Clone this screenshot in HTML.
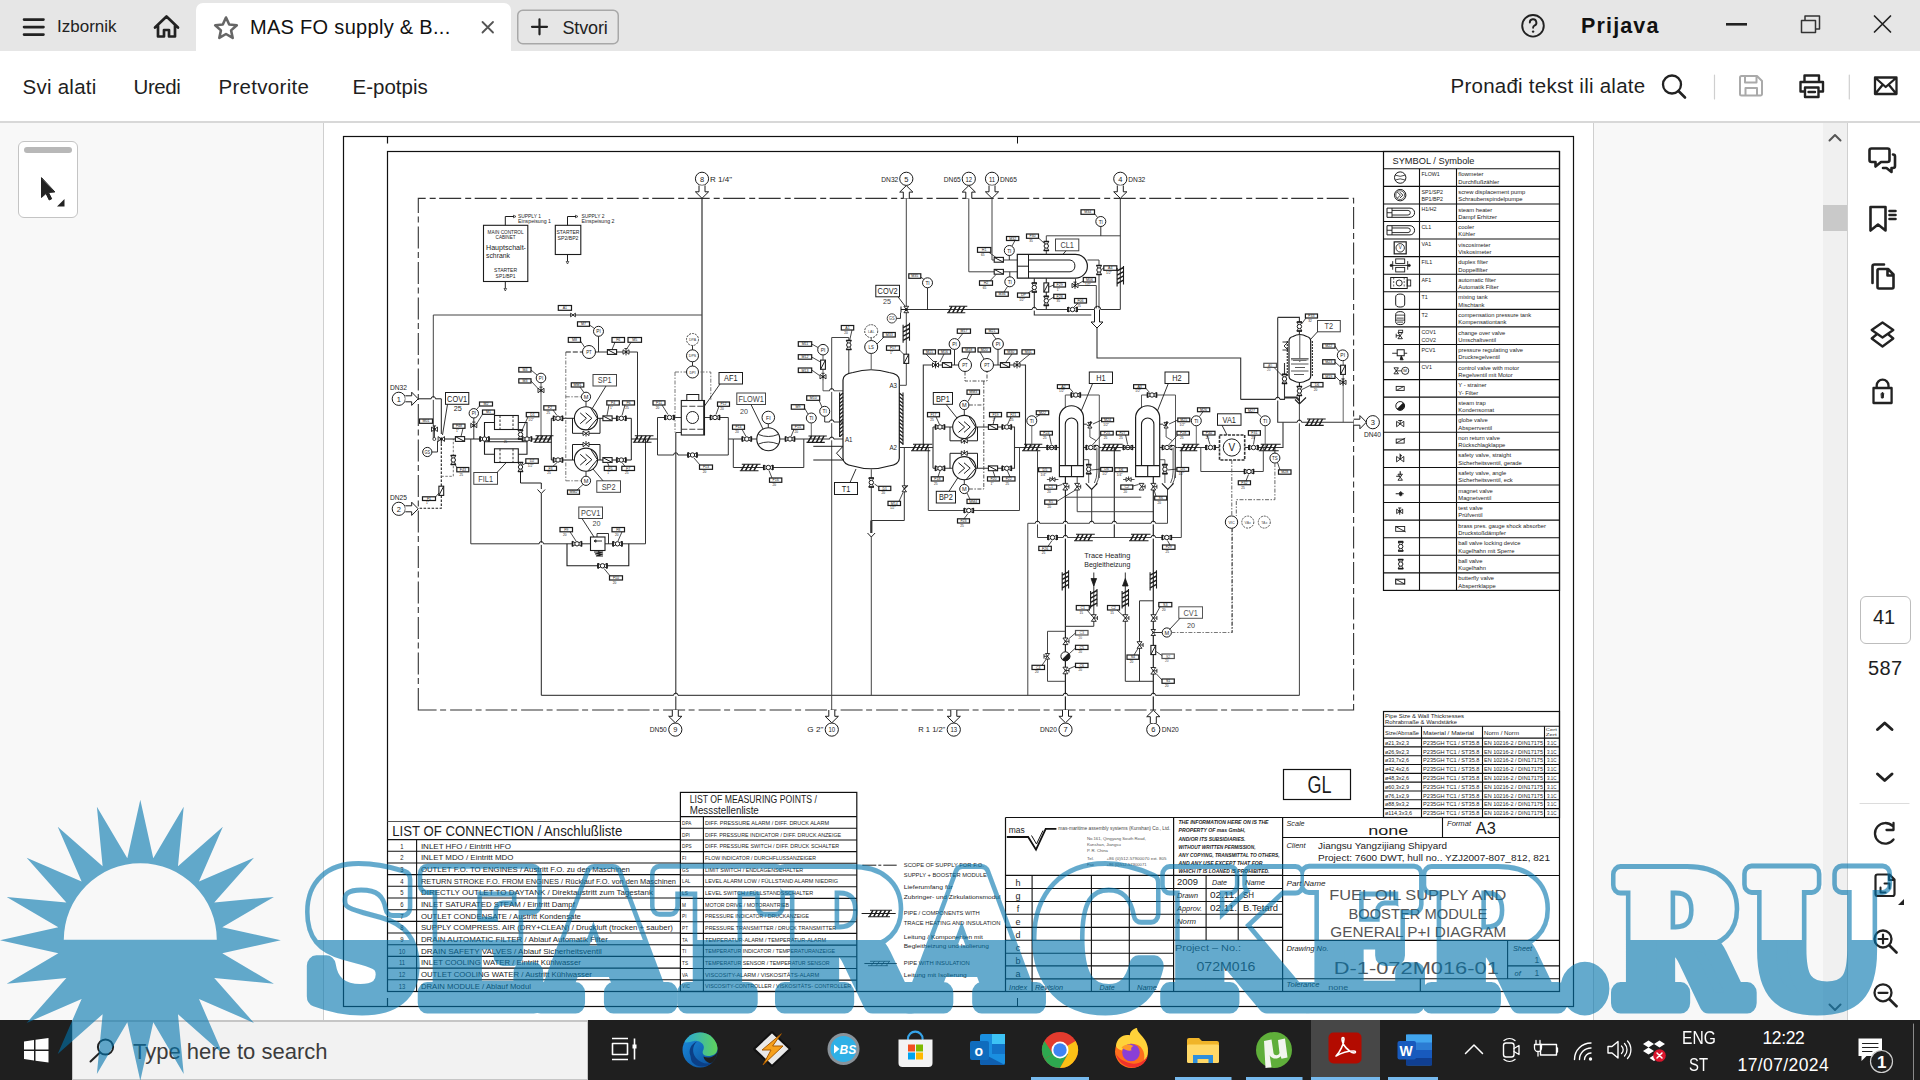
<!DOCTYPE html>
<html lang="hr">
<head>
<meta charset="utf-8">
<title>MAS FO supply &amp; Booster module</title>
<style>
*{box-sizing:border-box;margin:0;padding:0}
html,body{width:1920px;height:1080px;overflow:hidden;background:#fff}
body{position:relative;font-family:"Liberation Sans",sans-serif;color:#222}
.abs{position:absolute}
#titlebar{left:0;top:0;width:1920px;height:51px;background:#e6e6e6}
#tab{left:196px;top:3px;width:315px;height:48px;background:#fff;border-radius:7px 7px 0 0}
#toolbar{left:0;top:51px;width:1920px;height:72px;background:#fff;border-bottom:2px solid #d8d8d8}
#leftpane{left:0;top:123px;width:324px;height:897px;background:#f8f8f8;border-right:1px solid #cfcfcf}
#page{left:324px;top:123px;width:1269px;height:897px;background:#fff}
#gutter{left:1593px;top:123px;width:230px;height:897px;background:#f8f8f8;border-left:1px solid #cfcfcf}
#scroll{left:1823px;top:123px;width:25px;height:897px;background:#f0f0f0;border-right:1px solid #d0d0d0}
#thumb{left:1823px;top:205px;width:24px;height:26px;background:#c9c9c9}
#rtools{left:1849px;top:123px;width:71px;height:897px;background:#fff}
#quick{left:18px;top:141px;width:60px;height:77px;background:#fff;border:1.5px solid #c4c4c4;border-radius:6px}
#quick i{position:absolute;left:5px;top:5px;width:48px;height:6px;border-radius:3px;background:#b8b8b8;display:block}
.t{position:absolute;white-space:nowrap;line-height:1}
#taskbar{left:0;top:1020px;width:1920px;height:60px;background:#1f1f1f}
#search{left:72px;top:1020px;width:516px;height:60px;background:#f2f2f2;border:1px solid #c6c6c6;border-top:2px solid #c6c6c6}
#pagebox{left:1860px;top:596px;width:51px;height:48px;border:1.5px solid #bdbdbd;border-radius:6px;background:#fff}
svg{position:absolute;left:0;top:0;overflow:visible}
svg text{font-family:"Liberation Sans",sans-serif}
</style>
</head>
<body>
<div class="abs" id="titlebar"></div>
<div class="abs" id="tab"></div>
<div class="abs" id="toolbar"></div>
<div class="abs" id="leftpane"></div>
<div class="abs" id="page"></div>
<div class="abs" id="gutter"></div>
<div class="abs" id="scroll"></div>
<div class="abs" id="thumb"></div>
<div class="abs" id="rtools"></div>
<div class="abs" id="quick"><i></i></div>
<div class="abs" id="pagebox"></div>
<div class="abs" id="taskbar"></div>
<div class="abs" id="search"></div>

<!-- chrome text -->
<div class="t" style="left:57px;top:18px;font-size:17px;color:#222">Izbornik</div>
<div class="t" style="left:250px;top:17px;font-size:20px;letter-spacing:.3px;color:#111">MAS FO supply &amp; B...</div>
<div class="t" style="left:562.5px;top:18.5px;font-size:18px;letter-spacing:-.15px;color:#222">Stvori</div>
<div class="t" style="left:1581px;top:16px;font-size:21.5px;font-weight:bold;color:#111;letter-spacing:1.15px">Prijava</div>
<div class="t" style="left:22.5px;top:76.5px;font-size:20.5px;letter-spacing:.25px;color:#1e1e1e">Svi alati</div>
<div class="t" style="left:133.5px;top:76.5px;font-size:20.5px;letter-spacing:-.4px;color:#1e1e1e">Uredi</div>
<div class="t" style="left:218.5px;top:76.5px;font-size:20.5px;letter-spacing:.3px;color:#1e1e1e">Pretvorite</div>
<div class="t" style="left:352.5px;top:76.5px;font-size:20.5px;color:#1e1e1e">E-potpis</div>
<div class="t" style="left:1450.5px;top:75.6px;font-size:20.5px;letter-spacing:.25px;color:#1e1e1e">Pronađi tekst ili alate</div>
<div class="t" style="left:1873px;top:607px;font-size:20px;color:#1e1e1e">41</div>
<div class="t" style="left:1868px;top:658px;font-size:20px;letter-spacing:.4px;color:#1e1e1e">587</div>
<div class="t" style="left:133px;top:1040.5px;font-size:22px;color:#3c3c3c">Type here to search</div>
<div class="t" style="left:1682px;top:1030px;font-size:17.5px;color:#fff;transform:scaleX(.89);transform-origin:0 0">ENG</div>
<div class="t" style="left:1689px;top:1056.5px;font-size:17.5px;color:#fff;transform:scaleX(.85);transform-origin:0 0">ST</div>
<div class="t" style="left:1762.5px;top:1030px;font-size:17.5px;letter-spacing:-.4px;color:#fff">12:22</div>
<div class="t" style="left:1737.5px;top:1056.5px;font-size:17.5px;letter-spacing:.4px;color:#fff">17/07/2024</div>
<svg width="1920" height="1080" viewBox="0 0 1920 1080" fill="none" stroke="#222" stroke-width="2" stroke-linecap="round" stroke-linejoin="round">
<!-- hamburger -->
<path d="M24 19.6H43.500M24 27.100H43.500M24 34.600H43.500" stroke-width="2.6"/>
<!-- home -->
<path d="M155 27.5L166.5 16.5L178 27.5M158 25.5V36.5H164V30H169V36.5H175V25.5" stroke-width="2.7"/>
<!-- star -->
<path d="M226 17.5l3.2 7 7.6 .8-5.7 5.1 1.6 7.5-6.7-3.9-6.7 3.9 1.6-7.5-5.7-5.1 7.6-.8z" stroke="#666" stroke-width="2.6"/>
<!-- tab close -->
<path d="M482.5 22L493 32.5M493 22L482.5 32.5" stroke="#555" stroke-width="1.8"/>
<!-- Stvori button -->
<rect x="517.75" y="10.25" width="100.5" height="33.5" rx="5" stroke="#a8a8a8" stroke-width="1.5"/>
<path d="M532 26.8H547M539.5 19.3V34.3" stroke-width="2.2"/>
<!-- help -->
<circle cx="1533" cy="25.8" r="10.8" stroke-width="1.9"/>
<path d="M1529.8 22.6a3.3 3.3 0 1 1 4.6 3c-1 .5-1.3 1-1.3 2.2" stroke-width="1.9"/>
<circle cx="1533.1" cy="31.6" r="1.2" fill="#222" stroke="none"/>
<!-- window controls -->
<path d="M1726 24.3H1747" stroke-width="2.6" stroke-linecap="butt"/>
<path d="M1801.5 20.5H1815.5V32.5H1801.5zM1805 20V16H1819.5V29H1816" stroke-width="1.5" stroke="#333"/>
<path d="M1874.5 16L1890.5 32M1890.5 16L1874.5 32" stroke-width="1.7"/>
<!-- search icon -->
<circle cx="1672" cy="84.5" r="9" stroke-width="2.3"/>
<path d="M1678.5 91L1685 97.5" stroke-width="2.6"/>
<!-- separators -->
<path d="M1714.5 75V99M1849.3 75V99" stroke="#cfcfcf" stroke-width="1.2"/>
<!-- save (disabled) -->
<path d="M1740 77.5a1.5 1.5 0 0 1 1.5-1.5H1757l5 5V94a1.5 1.5 0 0 1-1.5 1.500H1741.500a1.500 1.500 0 0 1-1.500-1.500zM1745 76V82.500H1756.500V76M1745.500 95.500V88H1757V95.500" stroke="#aaa" stroke-width="2"/>
<!-- print -->
<path d="M1804.500 82V75.500H1819V82M1804.500 91.500H1800.500V82H1823V91.500H1819M1805 87.500H1818.500V97H1805zM1808.500 92H1815" stroke-width="2.4"/>
<!-- mail -->
<path d="M1875 77.500H1896.500V94H1875zM1875.500 78L1885.700 87L1896 78M1875.500 93.500L1882.500 85M1896 93.500L1889 85" stroke-width="2.3"/>
<!-- quick tool cursor -->
<path d="M41.500 178L41.500 197.500L46 193.500L49.200 200L51.700 198.800L48.500 192.500L54.500 192z" fill="#222" stroke="#222" stroke-width="1"/>
<path d="M64.500 199V206.500H57z" fill="#222" stroke="none"/>
<!-- scroll arrows -->
<path d="M1829.500 140.500L1835 135L1840.500 140.500" stroke="#555" stroke-width="2"/>
<path d="M1829.500 1004.500L1835 1010L1840.500 1004.500" stroke="#555" stroke-width="2"/>
<!-- right tools: comments -->
<path d="M1871.500 148.500H1887.500a2 2 0 0 1 2 2V160a2 2 0 0 1-2 2H1881l-5.500 4.500V162H1871.500a2 2 0 0 1-2-2V150.500a2 2 0 0 1 2-2z" stroke-width="2.6"/>
<path d="M1893 154.500a2 2 0 0 1 2 2V166a2 2 0 0 1-2 2h-1.500v4l-5-4h-3.500" stroke-width="2.6"/>
<!-- bookmark -->
<path d="M1870.500 207H1885.500V230.500L1878 224.500L1870.500 230.500zM1889.500 211H1895.500M1889.500 215H1895.500M1889.500 219H1895.500" stroke-width="2.6"/>
<!-- pages -->
<path d="M1879 269H1888l5.500 5.500V287a1.500 1.500 0 0 1-1.500 1.500H1879a1.500 1.500 0 0 1-1.500-1.500V270.500a1.500 1.500 0 0 1 1.500-1.500zM1887.500 269.500V275.500H1893M1884 264.500H1874.500a2 2 0 0 0-2 2V283" stroke-width="2.6"/>
<!-- layers -->
<path d="M1882.500 322.500L1893.300 330L1882.500 337.500L1871.700 330zM1876.500 334.500L1871.700 338.500L1882.500 346.500L1893.300 338.500L1888.500 334.500" stroke-width="2.300"/>
<!-- lock -->
<path d="M1873.500 388H1891.600V403H1873.500zM1876.700 387.500V385.600a5.900 5.900 0 0 1 11.800 0V387.500" stroke-width="2.300"/>
<path d="M1881.300 393.500l1.200-1.300 1.200 1.300-.5 4.500h-1.400z" fill="#222" stroke-width="1"/>
<!-- chevrons -->
<path d="M1877.500 729.500L1884.700 723L1892 729.500" stroke-width="3"/>
<path d="M1877.500 774L1884.700 780.500L1892 774" stroke-width="3"/>
<path d="M1860 803.500H1909" stroke="#dcdcdc" stroke-width="1.200"/>
<!-- rotate -->
<path d="M1893.500 839.500a10.300 10.300 0 1 1-1-13.500M1893.500 823V830H1886.500" stroke-width="2.300"/>
<!-- page fit -->
<path d="M1877.500 874.500H1889.500l5 5V894a2 2 0 0 1-2 2H1877.500a2 2 0 0 1-2-2V876.500a2 2 0 0 1 2-2zM1889 874.500V880H1894.500" stroke-width="2.200"/>
<path d="M1884.500 883.500H1889.500V888.500M1885.500 892.500H1880.500V887.500" stroke-width="2"/>
<path d="M1904 899V905H1898z" fill="#222" stroke="none"/>
<!-- zoom in/out -->
<circle cx="1883" cy="939" r="8.500" stroke-width="2.300"/>
<path d="M1889.500 945.500L1896.500 952.500" stroke-width="2.700"/>
<path d="M1878.500 939H1887.500M1883 934.500V943.500" stroke-width="2.200"/>
<circle cx="1883" cy="992.800" r="8.500" stroke-width="2.300"/>
<path d="M1889.500 999.300L1896.500 1006.300" stroke-width="2.700"/>
<path d="M1878.500 992.800H1887.500" stroke-width="2.200"/>
</svg>
<svg width="1920" height="1080" viewBox="0 0 1920 1080" fill="none" stroke-linecap="round" stroke-linejoin="round">
<!-- windows logo -->
<path d="M24 1041.500L34 1040V1049.500H24zM35.500 1039.800L48.500 1038V1049.500H35.500zM24 1051H34V1060.500L24 1059zM35.500 1051H48.500V1062.500L35.500 1060.700z" fill="#fff"/>
<!-- search magnifier -->
<circle cx="105.500" cy="1047" r="7.600" stroke="#222" stroke-width="2"/>
<path d="M100 1052.500L90.500 1061.500" stroke="#222" stroke-width="2"/>
<!-- task view -->
<path d="M612 1038.500H628M612 1059.500H628M612.500 1043.500H627.500V1054.500H612.500zM634.500 1038.500V1059.500" stroke="#fff" stroke-width="1.600" stroke-linecap="butt"/>
<rect x="632.500" y="1044.500" width="4" height="4" fill="#fff"/>
<!-- edge -->
<defs><linearGradient id="eg1" x1="0" y1="0" x2="1" y2="0"><stop offset="0" stop-color="#2aa7d8"/><stop offset="1" stop-color="#5fd35a"/></linearGradient>
<linearGradient id="eg2" x1="0" y1="0" x2="1" y2="1"><stop offset="0" stop-color="#1b8fe0"/><stop offset="1" stop-color="#0b4a96"/></linearGradient></defs>
<circle cx="700" cy="1050" r="17.500" fill="url(#eg2)"/>
<path d="M684.500 1042A17.500 17.500 0 0 1 717.500 1048C717.500 1054 713 1056 708 1056C703 1056 701.500 1053 703.500 1049.500C705.500 1045 700 1040 694 1041C690 1041.500 687 1043.500 684.500 1042z" fill="url(#eg1)"/>
<path d="M703.500 1056.500C708 1059 715 1057 717.300 1052C717 1057 714.500 1061 711 1063.500C707 1062.500 704 1060 703.500 1056.500z" fill="#1f1f1f"/>
<path d="M690.500 1056C688 1050 691 1044 697 1041.500C692 1046 692 1053 696 1058C700 1063 707 1065 712.500 1062.500C707 1068 697 1068 692 1062C691 1060 690.800 1058 690.500 1056z" fill="#0b3f86"/>
<!-- winamp -->
<path d="M772 1032L790 1049L772 1066L754 1049z" fill="#e9e9e9" stroke="#111" stroke-width="2"/>
<path d="M781 1034L762 1050H771L763 1065L783 1046H773z" fill="#f6a11c" stroke="#a85a00" stroke-width="1"/>
<!-- BS player -->
<circle cx="843.500" cy="1049" r="16" fill="#8a9299"/>
<circle cx="843.500" cy="1049" r="13" fill="#2fb0e6"/>
<path d="M834 1044.500L839.500 1049L834 1053.500z" fill="#fff"/>
<text x="839.500" y="1054" font-size="12" font-weight="bold" font-style="italic" fill="#fff">BS</text>
<!-- store -->
<path d="M908 1039a7.300 7.300 0 0 1 14.600 0" stroke="#35a3e8" stroke-width="2.200"/>
<path d="M898.500 1039.500H932.500V1063a4 4 0 0 1-4 4H902.500a4 4 0 0 1-4-4z" fill="#f3f3f3"/>
<rect x="908" y="1044.500" width="7" height="7" fill="#f25022"/><rect x="916" y="1044.500" width="7" height="7" fill="#7fba00"/>
<rect x="908" y="1052.500" width="7" height="7" fill="#00a4ef"/><rect x="916" y="1052.500" width="7" height="7" fill="#ffb900"/>
<!-- outlook -->
<rect x="980" y="1034" width="25" height="31" rx="2" fill="#1a8fe0"/>
<rect x="992" y="1034" width="13" height="10" fill="#3dc3f5"/><rect x="992" y="1044" width="13" height="10" fill="#1373c8"/>
<path d="M980 1052L1005 1065H982a2 2 0 0 1-2-2z" fill="#0f5fb0"/>
<rect x="970" y="1041" width="19" height="19" rx="2" fill="#0f6cbd"/>
<text x="974.500" y="1055.500" font-size="14" font-weight="bold" fill="#fff">o</text>
<!-- chrome -->
<circle cx="1060" cy="1050" r="18" fill="#e33b2e"/>
<path d="M1060 1050L1044.400 1059A18 18 0 0 0 1060 1068L1069 1052z" fill="#2da94f"/>
<path d="M1044.400 1059A18 18 0 0 1 1044.400 1041L1053 1054z" fill="#2da94f"/>
<path d="M1060 1050L1075.600 1041A18 18 0 0 1 1060 1068L1068 1054z" fill="#fbc116"/>
<circle cx="1060" cy="1050" r="8.500" fill="#fff"/><circle cx="1060" cy="1050" r="6.700" fill="#3f84f3"/>
<!-- firefox -->
<circle cx="1131.500" cy="1051.500" r="16.500" fill="#ff6f1c"/>
<path d="M1116 1046C1116.500 1038 1124 1033.500 1130 1035.500C1129.500 1032 1133 1028.500 1137 1028C1137 1033 1144 1036 1146.500 1043C1149.500 1050 1147.500 1059 1143 1063.500C1146.500 1055 1143 1046.500 1136.500 1044.500C1130 1042.500 1124 1045 1122 1050.500C1119 1049.500 1116.500 1048 1116 1046z" fill="#ffd23a"/>
<circle cx="1131" cy="1052.500" r="8.800" fill="#8a3fd6"/>
<path d="M1121.500 1047.500C1124.500 1044 1130 1043.500 1133.500 1046C1131.500 1046.500 1130.500 1048.500 1131.500 1050.500C1128 1051 1124.500 1050 1121.500 1047.500z" fill="#ff9a2a"/>
<path d="M1116 1054C1118 1062 1125 1067.500 1133 1067.500C1141 1067.500 1146.500 1062 1148 1055C1145 1061 1139 1064.500 1132 1063.500C1125 1062.500 1119 1059 1116 1054z" fill="#f0322b"/>
<!-- explorer -->
<path d="M1187 1040a2 2 0 0 1 2-2H1199l3 3H1217a2 2 0 0 1 2 2V1062H1187z" fill="#f0b429"/>
<rect x="1187" y="1044.500" width="32" height="18.500" rx="1.500" fill="#ffd867"/>
<path d="M1193 1055H1213V1063H1208.500V1059H1197.500V1063H1193z" fill="#2d8fdd"/>
<!-- utorrent -->
<circle cx="1274" cy="1050" r="18" fill="#5fae3a"/>
<path d="M1264 1041l7.500-1.500 2 13.500c.6 3 5 3 6 0l-1.500-13 7-1.500 2.500 19-6 1.200-.8-2.500c-3 3.500-9 3-11-1l1.800 12-6 .8z" fill="#f2f5ee"/>
<!-- acrobat (active) -->
<rect x="1311" y="1020" width="69" height="60" fill="#474747"/>
<rect x="1328.500" y="1032.500" width="33" height="31" rx="5" fill="#b30b00"/>
<path d="M1336 1056c4-4 8-12 8-17 0-2-2-2-2 0 0 6 7 13 12 14 2 0 2-2 0-2-5 0-13 2-18 5z" stroke="#fff" stroke-width="1.600"/>
<!-- word -->
<rect x="1406" y="1034.500" width="26" height="31" rx="2" fill="#2b7cd3"/>
<rect x="1406" y="1034.500" width="26" height="8" fill="#41a5ee"/><rect x="1406" y="1050" width="26" height="8" fill="#185abd"/><rect x="1406" y="1058" width="26" height="7.500" fill="#103f91"/>
<rect x="1397.500" y="1041" width="18.500" height="18.500" rx="2" fill="#185abd"/>
<text x="1399.500" y="1055.500" font-size="14" font-weight="bold" fill="#fff">W</text>
<!-- running indicators -->
<path d="M1031 1078.500H1089M1175 1078.500H1231.500M1246 1078.500H1302.500M1311 1078.500H1380M1388 1078.500H1438" stroke="#76b9ed" stroke-width="3" stroke-linecap="butt"/>
<!-- tray -->
<path d="M1465.500 1053.500L1474 1045L1482.500 1053.500" stroke="#fff" stroke-width="1.500"/>
<rect x="1503.500" y="1043" width="10.500" height="14" rx="2.500" stroke="#fff" stroke-width="1.400"/>
<path d="M1514 1048.500L1519 1045.500V1054.500L1514 1051.500M1504 1040.500a9 9 0 0 1 11 0M1504 1059.500a9 9 0 0 0 11 0" stroke="#fff" stroke-width="1.300"/>
<rect x="1540.500" y="1044.500" width="16" height="10.500" stroke="#fff" stroke-width="1.400"/>
<path d="M1557.500 1048V1052M1536 1040.500V1044M1540 1040.500V1044M1534.500 1044.500H1541.500V1048a3.500 3.500 0 0 1-7 0zM1538 1051.500V1056" stroke="#fff" stroke-width="1.300"/>
<path d="M1574.500 1059.500a16.500 16.500 0 0 1 16.500-16.500M1579.500 1059.500a11.500 11.500 0 0 1 11.500-11.500M1584.500 1059.500a6.500 6.500 0 0 1 6.500-6.500" stroke="#fff" stroke-width="1.400"/>
<circle cx="1590.500" cy="1059" r="1.700" fill="#fff"/>
<path d="M1608 1046.500H1612L1618 1041.500V1058L1612 1053H1608z" stroke="#fff" stroke-width="1.400"/>
<path d="M1621.500 1046a5 5 0 0 1 0 7.500M1624.500 1043.500a9 9 0 0 1 0 12.500M1627.500 1041a13 13 0 0 1 0 17.500" stroke="#fff" stroke-width="1.300"/>
<path d="M1648.500 1040.500l5.500 3.500-5.500 3.500-5.500-3.500zM1659.500 1040.500l5.500 3.500-5.500 3.500-5.500-3.500zM1648.500 1047.500l5.500 3.500-5.500 3.500-5.500-3.500zM1654 1055l4.500 3-4.500 3-4.500-3z" fill="#fff"/>
<circle cx="1659.500" cy="1055.500" r="6.300" fill="#d9152c"/>
<path d="M1657 1053L1662 1058M1662 1053L1657 1058" stroke="#fff" stroke-width="1.500"/>
<!-- notifications -->
<path d="M1858.500 1038.500H1882V1056H1866.500L1861.500 1061V1056H1858.500z" fill="#fff"/>
<path d="M1862.500 1043.500H1878M1862.500 1047.500H1878M1862.500 1051.500H1872" stroke="#1f1f1f" stroke-width="1.200"/>
<circle cx="1881.500" cy="1061.500" r="11" fill="#1f1f1f" stroke="#cfcfcf" stroke-width="1.200"/>
<text x="1877" y="1068" font-size="17" font-weight="bold" fill="#fff">1</text>
<path d="M1913.500 1024V1080" stroke="#8a8a8a" stroke-width="1"/>
</svg>
<svg width="1920" height="1080" viewBox="0 0 1920 1080" fill="none" stroke-linecap="butt" stroke-linejoin="miter">
<defs><clipPath id="pg"><rect x="324" y="123" width="1269" height="897"/></clipPath></defs>
<g clip-path="url(#pg)">
<rect x="343.5" y="136.5" width="1230" height="870" stroke="#111" stroke-width="1.2" fill="none"/>
<rect x="387.5" y="151.5" width="1172" height="840" stroke="#111" stroke-width="1.2" fill="none"/>
<path d="M387.5 136.5L387.5 143.5" stroke="#111" stroke-width="1.2"/>
<path d="M1017.5 136.5L1017.5 143.5" stroke="#111" stroke-width="1"/>
<path d="M387.5 998L387.5 1006.5" stroke="#111" stroke-width="1.2"/>
<path d="M1017.5 998L1017.5 1006.5" stroke="#111" stroke-width="1"/>
<rect x="1383.5" y="151.5" width="176" height="438.91" stroke="#111" stroke-width="1.2" fill="none"/>
<text x="1392.5" y="164.2" font-size="9.4" fill="#1c1c1c" stroke="none" textLength="82" lengthAdjust="spacingAndGlyphs">SYMBOL / Symbole</text>
<path d="M1383.5 168.8L1559.5 168.8" stroke="#111" stroke-width="1.1"/>
<text font-size="5.6" fill="#1c1c1c" stroke="none" transform="translate(1421.5 176.2) scale(0.95 1)">FLOW1</text>
<text font-size="5.8" fill="#1c1c1c" stroke="none" transform="translate(1458.3 176.4) scale(1 1)">flowmeter</text>
<text font-size="5.8" fill="#1c1c1c" stroke="none" transform="translate(1458.3 183.7) scale(1 1)">Durchflußzähler</text>
<path d="M1383.5 186.37L1559.5 186.37" stroke="#111" stroke-width="1.1"/>
<text font-size="5.6" fill="#1c1c1c" stroke="none" transform="translate(1421.5 193.77) scale(0.95 1)">SP1/SP2</text>
<text font-size="5.6" fill="#1c1c1c" stroke="none" transform="translate(1421.5 200.97) scale(0.95 1)">BP1/BP2</text>
<text font-size="5.8" fill="#1c1c1c" stroke="none" transform="translate(1458.3 193.97) scale(1 1)">screw displacement pump</text>
<text font-size="5.8" fill="#1c1c1c" stroke="none" transform="translate(1458.3 201.27) scale(1 1)">Schraubenspindelpumpe</text>
<path d="M1383.5 203.93L1559.5 203.93" stroke="#111" stroke-width="1.1"/>
<text font-size="5.6" fill="#1c1c1c" stroke="none" transform="translate(1421.5 211.33) scale(0.95 1)">H1/H2</text>
<text font-size="5.8" fill="#1c1c1c" stroke="none" transform="translate(1458.3 211.53) scale(1 1)">steam heater</text>
<text font-size="5.8" fill="#1c1c1c" stroke="none" transform="translate(1458.3 218.83) scale(1 1)">Dampf Erhitzer</text>
<path d="M1383.5 221.5L1559.5 221.5" stroke="#111" stroke-width="1.1"/>
<text font-size="5.6" fill="#1c1c1c" stroke="none" transform="translate(1421.5 228.9) scale(0.95 1)">CL1</text>
<text font-size="5.8" fill="#1c1c1c" stroke="none" transform="translate(1458.3 229.1) scale(1 1)">cooler</text>
<text font-size="5.8" fill="#1c1c1c" stroke="none" transform="translate(1458.3 236.4) scale(1 1)">Kühler</text>
<path d="M1383.5 239.07L1559.5 239.07" stroke="#111" stroke-width="1.1"/>
<text font-size="5.6" fill="#1c1c1c" stroke="none" transform="translate(1421.5 246.47) scale(0.95 1)">VA1</text>
<text font-size="5.8" fill="#1c1c1c" stroke="none" transform="translate(1458.3 246.67) scale(1 1)">viscosimeter</text>
<text font-size="5.8" fill="#1c1c1c" stroke="none" transform="translate(1458.3 253.97) scale(1 1)">Viskosimeter</text>
<path d="M1383.5 256.63L1559.5 256.63" stroke="#111" stroke-width="1.1"/>
<text font-size="5.6" fill="#1c1c1c" stroke="none" transform="translate(1421.5 264.03) scale(0.95 1)">FIL1</text>
<text font-size="5.8" fill="#1c1c1c" stroke="none" transform="translate(1458.3 264.24) scale(1 1)">duplex filter</text>
<text font-size="5.8" fill="#1c1c1c" stroke="none" transform="translate(1458.3 271.53) scale(1 1)">Doppelfilter</text>
<path d="M1383.5 274.2L1559.5 274.2" stroke="#111" stroke-width="1.1"/>
<text font-size="5.6" fill="#1c1c1c" stroke="none" transform="translate(1421.5 281.6) scale(0.95 1)">AF1</text>
<text font-size="5.8" fill="#1c1c1c" stroke="none" transform="translate(1458.3 281.8) scale(1 1)">automatic filter</text>
<text font-size="5.8" fill="#1c1c1c" stroke="none" transform="translate(1458.3 289.1) scale(1 1)">Automatik Filter</text>
<path d="M1383.5 291.77L1559.5 291.77" stroke="#111" stroke-width="1.1"/>
<text font-size="5.6" fill="#1c1c1c" stroke="none" transform="translate(1421.5 299.17) scale(0.95 1)">T1</text>
<text font-size="5.8" fill="#1c1c1c" stroke="none" transform="translate(1458.3 299.37) scale(1 1)">mixing tank</text>
<text font-size="5.8" fill="#1c1c1c" stroke="none" transform="translate(1458.3 306.67) scale(1 1)">Mischtank</text>
<path d="M1383.5 309.34L1559.5 309.34" stroke="#111" stroke-width="1.1"/>
<text font-size="5.6" fill="#1c1c1c" stroke="none" transform="translate(1421.5 316.74) scale(0.95 1)">T2</text>
<text font-size="5.8" fill="#1c1c1c" stroke="none" transform="translate(1458.3 316.94) scale(1 1)">compensation pressure tank</text>
<text font-size="5.8" fill="#1c1c1c" stroke="none" transform="translate(1458.3 324.24) scale(1 1)">Kompensationtank</text>
<path d="M1383.5 326.9L1559.5 326.9" stroke="#111" stroke-width="1.1"/>
<text font-size="5.6" fill="#1c1c1c" stroke="none" transform="translate(1421.5 334.3) scale(0.95 1)">COV1</text>
<text font-size="5.6" fill="#1c1c1c" stroke="none" transform="translate(1421.5 341.5) scale(0.95 1)">COV2</text>
<text font-size="5.8" fill="#1c1c1c" stroke="none" transform="translate(1458.3 334.5) scale(1 1)">change over valve</text>
<text font-size="5.8" fill="#1c1c1c" stroke="none" transform="translate(1458.3 341.8) scale(1 1)">Umschaltventil</text>
<path d="M1383.5 344.47L1559.5 344.47" stroke="#111" stroke-width="1.1"/>
<text font-size="5.6" fill="#1c1c1c" stroke="none" transform="translate(1421.5 351.87) scale(0.95 1)">PCV1</text>
<text font-size="5.8" fill="#1c1c1c" stroke="none" transform="translate(1458.3 352.07) scale(1 1)">pressure regulating valve</text>
<text font-size="5.8" fill="#1c1c1c" stroke="none" transform="translate(1458.3 359.37) scale(1 1)">Druckregelventil</text>
<path d="M1383.5 362.04L1559.5 362.04" stroke="#111" stroke-width="1.1"/>
<text font-size="5.6" fill="#1c1c1c" stroke="none" transform="translate(1421.5 369.44) scale(0.95 1)">CV1</text>
<text font-size="5.8" fill="#1c1c1c" stroke="none" transform="translate(1458.3 369.64) scale(1 1)">control valve with motor</text>
<text font-size="5.8" fill="#1c1c1c" stroke="none" transform="translate(1458.3 376.94) scale(1 1)">Regelventil mit Motor</text>
<path d="M1383.5 379.6L1559.5 379.6" stroke="#111" stroke-width="1.1"/>
<text font-size="5.8" fill="#1c1c1c" stroke="none" transform="translate(1458.3 387.2) scale(1 1)">Y - strainer</text>
<text font-size="5.8" fill="#1c1c1c" stroke="none" transform="translate(1458.3 394.5) scale(1 1)">Y- Filter</text>
<path d="M1383.5 397.17L1559.5 397.17" stroke="#111" stroke-width="1.1"/>
<text font-size="5.8" fill="#1c1c1c" stroke="none" transform="translate(1458.3 404.77) scale(1 1)">steam trap</text>
<text font-size="5.8" fill="#1c1c1c" stroke="none" transform="translate(1458.3 412.07) scale(1 1)">Kondensomat</text>
<path d="M1383.5 414.74L1559.5 414.74" stroke="#111" stroke-width="1.1"/>
<text font-size="5.8" fill="#1c1c1c" stroke="none" transform="translate(1458.3 422.34) scale(1 1)">globe valve</text>
<text font-size="5.8" fill="#1c1c1c" stroke="none" transform="translate(1458.3 429.64) scale(1 1)">Absperrventil</text>
<path d="M1383.5 432.31L1559.5 432.31" stroke="#111" stroke-width="1.1"/>
<text font-size="5.8" fill="#1c1c1c" stroke="none" transform="translate(1458.3 439.91) scale(1 1)">non return valve</text>
<text font-size="5.8" fill="#1c1c1c" stroke="none" transform="translate(1458.3 447.2) scale(1 1)">Rückschlagklappe</text>
<path d="M1383.5 449.87L1559.5 449.87" stroke="#111" stroke-width="1.1"/>
<text font-size="5.8" fill="#1c1c1c" stroke="none" transform="translate(1458.3 457.47) scale(1 1)">safety valve, straight</text>
<text font-size="5.8" fill="#1c1c1c" stroke="none" transform="translate(1458.3 464.77) scale(1 1)">Sicherheitsventil, gerade</text>
<path d="M1383.5 467.44L1559.5 467.44" stroke="#111" stroke-width="1.1"/>
<text font-size="5.8" fill="#1c1c1c" stroke="none" transform="translate(1458.3 475.04) scale(1 1)">safety valve, angle</text>
<text font-size="5.8" fill="#1c1c1c" stroke="none" transform="translate(1458.3 482.34) scale(1 1)">Sicherheitsventil, eck</text>
<path d="M1383.5 485.01L1559.5 485.01" stroke="#111" stroke-width="1.1"/>
<text font-size="5.8" fill="#1c1c1c" stroke="none" transform="translate(1458.3 492.61) scale(1 1)">magnet valve</text>
<text font-size="5.8" fill="#1c1c1c" stroke="none" transform="translate(1458.3 499.91) scale(1 1)">Magnetventil</text>
<path d="M1383.5 502.57L1559.5 502.57" stroke="#111" stroke-width="1.1"/>
<text font-size="5.8" fill="#1c1c1c" stroke="none" transform="translate(1458.3 510.17) scale(1 1)">test valve</text>
<text font-size="5.8" fill="#1c1c1c" stroke="none" transform="translate(1458.3 517.47) scale(1 1)">Prüfventil</text>
<path d="M1383.5 520.14L1559.5 520.14" stroke="#111" stroke-width="1.1"/>
<text font-size="5.8" fill="#1c1c1c" stroke="none" transform="translate(1458.3 527.74) scale(1 1)">brass pres. gauge shock absorber</text>
<text font-size="5.8" fill="#1c1c1c" stroke="none" transform="translate(1458.3 535.04) scale(1 1)">Druckstoßdämpfer</text>
<path d="M1383.5 537.71L1559.5 537.71" stroke="#111" stroke-width="1.1"/>
<text font-size="5.8" fill="#1c1c1c" stroke="none" transform="translate(1458.3 545.31) scale(1 1)">ball valve locking device</text>
<text font-size="5.8" fill="#1c1c1c" stroke="none" transform="translate(1458.3 552.61) scale(1 1)">Kugelhahn mit Sperre</text>
<path d="M1383.5 555.27L1559.5 555.27" stroke="#111" stroke-width="1.1"/>
<text font-size="5.8" fill="#1c1c1c" stroke="none" transform="translate(1458.3 562.87) scale(1 1)">ball valve</text>
<text font-size="5.8" fill="#1c1c1c" stroke="none" transform="translate(1458.3 570.17) scale(1 1)">Kugelhahn</text>
<path d="M1383.5 572.84L1559.5 572.84" stroke="#111" stroke-width="1.1"/>
<text font-size="5.8" fill="#1c1c1c" stroke="none" transform="translate(1458.3 580.44) scale(1 1)">butterfly valve</text>
<text font-size="5.8" fill="#1c1c1c" stroke="none" transform="translate(1458.3 587.74) scale(1 1)">Absperrklappe</text>
<path d="M1419.5 168.8L1419.5 590.41" stroke="#111" stroke-width="1.1"/>
<path d="M1456.5 168.8L1456.5 590.41" stroke="#111" stroke-width="1.1"/>
<circle cx="1400.2" cy="177.58" r="5.7" stroke="#1c1c1c" stroke-width="1" fill="#fff"/>
<path d="M1395 175.08q5.2 2.5 10.4 0M1395 180.08q5.2 -2.5 10.400 0" stroke="#1c1c1c" stroke-width="0.8" fill="none"/>
<circle cx="1400.2" cy="195.15" r="5.7" stroke="#1c1c1c" stroke-width="1" fill="#fff"/>
<circle cx="1400.2" cy="195.15" r="4.4" stroke="#1c1c1c" stroke-width="0.7" fill="#fff"/>
<path d="M1397.4 192.15l3 3-3 3M1399.9 192.15l3 3-3 3" stroke="#1c1c1c" stroke-width="0.9" fill="none"/>
<path d="M1387 208.12H1410a4.6 4.6 0 0 1 0 9.2H1387z" stroke="#1c1c1c" stroke-width="1" fill="none"/>
<path d="M1392 208.12V217.32M1387 212.72H1392M1392 210.42H1408a2.300 2.300 0 0 1 0 4.600H1392" stroke="#1c1c1c" stroke-width="0.9" fill="none"/>
<path d="M1387 225.68H1410a4.6 4.6 0 0 1 0 9.2H1387z" stroke="#1c1c1c" stroke-width="1" fill="none"/>
<path d="M1392 225.68V234.88M1387 230.28H1392M1392 227.98H1408a2.300 2.300 0 0 1 0 4.600H1392" stroke="#1c1c1c" stroke-width="0.9" fill="none"/>
<rect x="1394.2" y="241.85" width="12" height="12" stroke="#1c1c1c" stroke-width="1.2" fill="none"/>
<circle cx="1400.2" cy="247.85" r="4.2" stroke="#1c1c1c" stroke-width="0.9" fill="#fff"/>
<text x="1400.2" y="249.45" font-size="4.5" fill="#1c1c1c" stroke="none" text-anchor="middle">V</text>
<rect x="1395.7" y="258.92" width="9" height="4.5" stroke="#1c1c1c" stroke-width="0.9" fill="none"/>
<rect x="1395.7" y="267.42" width="9" height="4.5" stroke="#1c1c1c" stroke-width="0.9" fill="none"/>
<path d="M1390.2 265.42H1410.2M1392.7 261.12V269.72M1407.7 261.12V269.72" stroke="#1c1c1c" stroke-width="0.9" fill="none"/>
<circle cx="1391.2" cy="265.42" r="1.2" stroke="#1c1c1c" stroke-width="0.5" fill="#1c1c1c"/>
<circle cx="1409.2" cy="265.42" r="1.2" stroke="#1c1c1c" stroke-width="0.5" fill="#1c1c1c"/>
<rect x="1390.7" y="277.49" width="16.5" height="11" stroke="#1c1c1c" stroke-width="1" fill="none"/>
<rect x="1407.2" y="279.99" width="3.5" height="6" stroke="#1c1c1c" stroke-width="0.9" fill="none"/>
<circle cx="1399.2" cy="282.99" r="3" stroke="#1c1c1c" stroke-width="0.9" fill="#fff"/>
<path d="M1393.7 277.49V288.49M1404.2 277.49V288.49" stroke="#1c1c1c" stroke-width="0.7" fill="none" stroke-dasharray="2 1.500"/>
<path d="M1395.7 297.05q0 -3 4.500 -3t4.500 3V304.05q0 3 -4.500 3t-4.500 -3z" stroke="#1c1c1c" stroke-width="1" fill="none"/>
<path d="M1395.7 314.62q0 -3 4.500 -3t4.500 3V321.62q0 3 -4.500 3t-4.500 -3z" stroke="#1c1c1c" stroke-width="1" fill="none"/>
<path d="M1395.7 315.12H1404.7M1396.7 318.12H1403.7M1395.7 320.12H1404.7M1397.2 322.12H1403.2" stroke="#1c1c1c" stroke-width="0.8" fill="none"/>
<path d="M1397.95 332.69L1402.45 338.69H1397.95L1402.45 332.69z" stroke="#1c1c1c" stroke-width="0.9" fill="#fff"/>
<path d="M1396.2 335.69H1400.2M1396.2 333.69V337.69" stroke="#1c1c1c" stroke-width="0.9" fill="none"/>
<rect x="1398.7" y="330.19" width="4" height="2.3" stroke="#1c1c1c" stroke-width="0.8" fill="none"/>
<rect x="1397.2" y="349.75" width="7" height="6" stroke="#1c1c1c" stroke-width="1" fill="none"/>
<path d="M1392.2 353.25H1397.2M1404.2 353.25H1407.2M1401.2 355.75l2 4l-3 0z" stroke="#1c1c1c" stroke-width="0.9" fill="#1c1c1c"/>
<path d="M1393.95 367.82L1398.45 373.82H1393.95L1398.45 367.82z" stroke="#1c1c1c" stroke-width="0.9" fill="#fff"/>
<circle cx="1405.2" cy="370.82" r="3.6" stroke="#1c1c1c" stroke-width="0.9" fill="#fff"/>
<text x="1405.2" y="372.42" font-size="4.4" fill="#1c1c1c" stroke="none" text-anchor="middle">M</text>
<path d="M1396.2 370.82L1401.6 370.82" stroke="#1c1c1c" stroke-width="0.8"/>
<rect x="1396.2" y="386.39" width="8" height="4" stroke="#1c1c1c" stroke-width="0.9" fill="none"/>
<path d="M1397.2 389.89L1403.2 386.89" stroke="#1c1c1c" stroke-width="0.8"/>
<circle cx="1400.2" cy="405.95" r="4.4" stroke="#1c1c1c" stroke-width="1" fill="#fff"/>
<path d="M1397.1 409.05A4.400 4.400 0 0 0 1403.3 402.85z" stroke="#1c1c1c" stroke-width="0.6" fill="#1c1c1c"/>
<path d="M1396.6 421.32L1403.8 426.72V421.32L1396.6 426.72z" stroke="#1c1c1c" stroke-width="0.9" fill="#fff"/>
<path d="M1400.2 424.02V420.52M1398.2 420.52H1402.2" stroke="#1c1c1c" stroke-width="0.9" fill="none"/>
<rect x="1396.2" y="439.09" width="8" height="4" stroke="#1c1c1c" stroke-width="0.9" fill="none"/>
<path d="M1396.2 443.09L1405.2 438.09" stroke="#1c1c1c" stroke-width="0.9"/>
<path d="M1396.6 456.46L1403.8 461.86V456.46L1396.6 461.86z" stroke="#1c1c1c" stroke-width="0.9" fill="#fff"/>
<path d="M1400.2 459.16V454.66l1.500 1.500" stroke="#1c1c1c" stroke-width="1.2" fill="none"/>
<path d="M1397.95 474.22L1402.45 480.22H1397.95L1402.45 474.22z" stroke="#1c1c1c" stroke-width="0.9" fill="#fff"/>
<path d="M1396.2 476.22H1400.2M1400.2 471.22V475.22" stroke="#1c1c1c" stroke-width="1.1" fill="none"/>
<path d="M1395.7 493.79H1403.7M1400.7 491.29V496.29M1399.2 492.29l3 3M1399.2 495.29l3 -3" stroke="#1c1c1c" stroke-width="1.1" fill="none"/>
<path d="M1396.7 509.11L1402.7 513.61V509.11L1396.7 513.61z" stroke="#1c1c1c" stroke-width="0.9" fill="#fff"/>
<path d="M1399.7 507.96V514.76M1398.1 507.96H1401.3" stroke="#1c1c1c" stroke-width="0.9" fill="none"/>
<circle cx="1399.7" cy="511.36" r="0.9" stroke="#1c1c1c" stroke-width="0.6" fill="#1c1c1c"/>
<rect x="1395.7" y="526.52" width="9" height="4.8" stroke="#1c1c1c" stroke-width="0.9" fill="none"/>
<path d="M1395.7 526.52L1405.7 531.92" stroke="#1c1c1c" stroke-width="0.9"/>
<path d="M1398.2 541.99H1403.2L1400.7 546.49L1403.2 550.99H1398.2L1400.7 546.49z" stroke="#1c1c1c" stroke-width="0.9" fill="#fff"/>
<path d="M1398.1 541.99H1403.3M1398.1 550.99H1403.3" stroke="#1c1c1c" stroke-width="1.7" fill="none"/>
<circle cx="1400.7" cy="546.49" r="2.2" stroke="#1c1c1c" stroke-width="1" fill="#fff"/>
<path d="M1398.2 541.29H1403.2" stroke="#1c1c1c" stroke-width="1" fill="none"/>
<path d="M1398.2 559.56H1403.2L1400.7 564.06L1403.2 568.56H1398.2L1400.7 564.06z" stroke="#1c1c1c" stroke-width="0.9" fill="#fff"/>
<path d="M1398.1 559.56H1403.3M1398.1 568.56H1403.3" stroke="#1c1c1c" stroke-width="1.7" fill="none"/>
<circle cx="1400.7" cy="564.06" r="2.2" stroke="#1c1c1c" stroke-width="1" fill="#fff"/>
<rect x="1395.7" y="579.22" width="9" height="4.8" stroke="#1c1c1c" stroke-width="1.1" fill="none"/>
<path d="M1395.7 579.22L1404.7 584.02" stroke="#1c1c1c" stroke-width="0.9"/>
<rect x="1383.5" y="711.5" width="176" height="106" stroke="#111" stroke-width="1.2" fill="none"/>
<text x="1385" y="718.3" font-size="5.6" fill="#1c1c1c" stroke="none" textLength="79" lengthAdjust="spacingAndGlyphs">Pipe Size &amp; Wall Thicknesses</text>
<text x="1385" y="724.4" font-size="5.6" fill="#1c1c1c" stroke="none" textLength="72" lengthAdjust="spacingAndGlyphs">Rohrabmaße &amp; Wandstärke</text>
<path d="M1383.5 726.3L1559.5 726.3" stroke="#111" stroke-width="1.1"/>
<text x="1385" y="734.6" font-size="5.8" fill="#1c1c1c" stroke="none" textLength="34" lengthAdjust="spacingAndGlyphs">Size/Abmaße</text>
<text x="1423" y="734.6" font-size="5.8" fill="#1c1c1c" stroke="none" textLength="51" lengthAdjust="spacingAndGlyphs">Material / Material</text>
<text x="1484" y="734.6" font-size="5.8" fill="#1c1c1c" stroke="none" textLength="35" lengthAdjust="spacingAndGlyphs">Norm / Norm</text>
<text x="1545.8" y="731.3" font-size="3.8" fill="#1c1c1c" stroke="none" textLength="11" lengthAdjust="spacingAndGlyphs">Cert</text>
<text x="1545.8" y="736.2" font-size="3.8" fill="#1c1c1c" stroke="none" textLength="11" lengthAdjust="spacingAndGlyphs">Zert</text>
<path d="M1383.5 738.1L1559.5 738.1" stroke="#111" stroke-width="1.1"/>
<text x="1385" y="744.7" font-size="5.6" fill="#1c1c1c" stroke="none" textLength="24" lengthAdjust="spacingAndGlyphs">ø21,3x2,3</text>
<text x="1423" y="744.7" font-size="5.6" fill="#1c1c1c" stroke="none" textLength="56.5" lengthAdjust="spacingAndGlyphs">P235GH TC1 / ST35.8</text>
<text x="1484" y="744.7" font-size="5.6" fill="#1c1c1c" stroke="none" textLength="59" lengthAdjust="spacingAndGlyphs">EN 10216-2 / DIN17175</text>
<text x="1547" y="744.7" font-size="5.6" fill="#1c1c1c" stroke="none" textLength="9.5" lengthAdjust="spacingAndGlyphs">3.1C</text>
<path d="M1383.5 746.91L1559.5 746.91" stroke="#111" stroke-width="1.1"/>
<text x="1385" y="753.51" font-size="5.6" fill="#1c1c1c" stroke="none" textLength="24" lengthAdjust="spacingAndGlyphs">ø26,9x2,3</text>
<text x="1423" y="753.51" font-size="5.6" fill="#1c1c1c" stroke="none" textLength="56.5" lengthAdjust="spacingAndGlyphs">P235GH TC1 / ST35.8</text>
<text x="1484" y="753.51" font-size="5.6" fill="#1c1c1c" stroke="none" textLength="59" lengthAdjust="spacingAndGlyphs">EN 10216-2 / DIN17175</text>
<text x="1547" y="753.51" font-size="5.6" fill="#1c1c1c" stroke="none" textLength="9.5" lengthAdjust="spacingAndGlyphs">3.1C</text>
<path d="M1383.5 755.72L1559.5 755.72" stroke="#111" stroke-width="1.1"/>
<text x="1385" y="762.32" font-size="5.6" fill="#1c1c1c" stroke="none" textLength="24" lengthAdjust="spacingAndGlyphs">ø33,7x2,6</text>
<text x="1423" y="762.32" font-size="5.6" fill="#1c1c1c" stroke="none" textLength="56.5" lengthAdjust="spacingAndGlyphs">P235GH TC1 / ST35.8</text>
<text x="1484" y="762.32" font-size="5.6" fill="#1c1c1c" stroke="none" textLength="59" lengthAdjust="spacingAndGlyphs">EN 10216-2 / DIN17175</text>
<text x="1547" y="762.32" font-size="5.6" fill="#1c1c1c" stroke="none" textLength="9.5" lengthAdjust="spacingAndGlyphs">3.1C</text>
<path d="M1383.5 764.53L1559.5 764.53" stroke="#111" stroke-width="1.1"/>
<text x="1385" y="771.13" font-size="5.6" fill="#1c1c1c" stroke="none" textLength="24" lengthAdjust="spacingAndGlyphs">ø42,4x2,6</text>
<text x="1423" y="771.13" font-size="5.6" fill="#1c1c1c" stroke="none" textLength="56.5" lengthAdjust="spacingAndGlyphs">P235GH TC1 / ST35.8</text>
<text x="1484" y="771.13" font-size="5.6" fill="#1c1c1c" stroke="none" textLength="59" lengthAdjust="spacingAndGlyphs">EN 10216-2 / DIN17175</text>
<text x="1547" y="771.13" font-size="5.6" fill="#1c1c1c" stroke="none" textLength="9.5" lengthAdjust="spacingAndGlyphs">3.1C</text>
<path d="M1383.5 773.34L1559.5 773.34" stroke="#111" stroke-width="1.1"/>
<text x="1385" y="779.94" font-size="5.6" fill="#1c1c1c" stroke="none" textLength="24" lengthAdjust="spacingAndGlyphs">ø48,3x2,6</text>
<text x="1423" y="779.94" font-size="5.6" fill="#1c1c1c" stroke="none" textLength="56.5" lengthAdjust="spacingAndGlyphs">P235GH TC1 / ST35.8</text>
<text x="1484" y="779.94" font-size="5.6" fill="#1c1c1c" stroke="none" textLength="59" lengthAdjust="spacingAndGlyphs">EN 10216-2 / DIN17175</text>
<text x="1547" y="779.94" font-size="5.6" fill="#1c1c1c" stroke="none" textLength="9.5" lengthAdjust="spacingAndGlyphs">3.1C</text>
<path d="M1383.5 782.15L1559.5 782.15" stroke="#111" stroke-width="1.1"/>
<text x="1385" y="788.75" font-size="5.6" fill="#1c1c1c" stroke="none" textLength="24" lengthAdjust="spacingAndGlyphs">ø60,3x2,9</text>
<text x="1423" y="788.75" font-size="5.6" fill="#1c1c1c" stroke="none" textLength="56.5" lengthAdjust="spacingAndGlyphs">P235GH TC1 / ST35.8</text>
<text x="1484" y="788.75" font-size="5.6" fill="#1c1c1c" stroke="none" textLength="59" lengthAdjust="spacingAndGlyphs">EN 10216-2 / DIN17175</text>
<text x="1547" y="788.75" font-size="5.6" fill="#1c1c1c" stroke="none" textLength="9.5" lengthAdjust="spacingAndGlyphs">3.1C</text>
<path d="M1383.5 790.96L1559.5 790.96" stroke="#111" stroke-width="1.1"/>
<text x="1385" y="797.56" font-size="5.6" fill="#1c1c1c" stroke="none" textLength="24" lengthAdjust="spacingAndGlyphs">ø76,1x2,9</text>
<text x="1423" y="797.56" font-size="5.6" fill="#1c1c1c" stroke="none" textLength="56.5" lengthAdjust="spacingAndGlyphs">P235GH TC1 / ST35.8</text>
<text x="1484" y="797.56" font-size="5.6" fill="#1c1c1c" stroke="none" textLength="59" lengthAdjust="spacingAndGlyphs">EN 10216-2 / DIN17175</text>
<text x="1547" y="797.56" font-size="5.6" fill="#1c1c1c" stroke="none" textLength="9.5" lengthAdjust="spacingAndGlyphs">3.1C</text>
<path d="M1383.5 799.77L1559.5 799.77" stroke="#111" stroke-width="1.1"/>
<text x="1385" y="806.37" font-size="5.6" fill="#1c1c1c" stroke="none" textLength="24" lengthAdjust="spacingAndGlyphs">ø88,9x3,2</text>
<text x="1423" y="806.37" font-size="5.6" fill="#1c1c1c" stroke="none" textLength="56.5" lengthAdjust="spacingAndGlyphs">P235GH TC1 / ST35.8</text>
<text x="1484" y="806.37" font-size="5.6" fill="#1c1c1c" stroke="none" textLength="59" lengthAdjust="spacingAndGlyphs">EN 10216-2 / DIN17175</text>
<text x="1547" y="806.37" font-size="5.6" fill="#1c1c1c" stroke="none" textLength="9.5" lengthAdjust="spacingAndGlyphs">3.1C</text>
<path d="M1383.5 808.58L1559.5 808.58" stroke="#111" stroke-width="1.1"/>
<text x="1385" y="815.18" font-size="5.6" fill="#1c1c1c" stroke="none" textLength="27" lengthAdjust="spacingAndGlyphs">ø114,3x3,6</text>
<text x="1423" y="815.18" font-size="5.6" fill="#1c1c1c" stroke="none" textLength="56.5" lengthAdjust="spacingAndGlyphs">P235GH TC1 / ST35.8</text>
<text x="1484" y="815.18" font-size="5.6" fill="#1c1c1c" stroke="none" textLength="59" lengthAdjust="spacingAndGlyphs">EN 10216-2 / DIN17175</text>
<text x="1547" y="815.18" font-size="5.6" fill="#1c1c1c" stroke="none" textLength="9.5" lengthAdjust="spacingAndGlyphs">3.1C</text>
<path d="M1421.5 726.3L1421.5 817.5" stroke="#111" stroke-width="1.1"/>
<path d="M1482.5 726.3L1482.5 817.5" stroke="#111" stroke-width="1.1"/>
<path d="M1544.5 726.3L1544.5 817.5" stroke="#111" stroke-width="1.1"/>
<rect x="1283.5" y="769.5" width="67" height="30" stroke="#111" stroke-width="1.2" fill="none"/>
<text x="1307.5" y="793.2" font-size="23" fill="#1c1c1c" stroke="none" textLength="24" lengthAdjust="spacingAndGlyphs">GL</text>
<path d="M387.5 821.5L680.4 821.5" stroke="#555" stroke-width="1.1"/>
<text x="392.3" y="835.8" font-size="13.8" fill="#1c1c1c" stroke="none" textLength="230" lengthAdjust="spacingAndGlyphs">LIST OF CONNECTION / Anschlußliste</text>
<path d="M387.5 839.6L680.4 839.6" stroke="#111" stroke-width="1.1"/>
<text font-size="7.4" fill="#1c1c1c" stroke="none" text-anchor="middle" transform="translate(402 848.6) scale(0.8 1)">1</text>
<text x="420.9" y="848.6" font-size="7.4" fill="#1c1c1c" stroke="none" textLength="90" lengthAdjust="spacingAndGlyphs">INLET HFO / Eintritt HFO</text>
<path d="M387.5 851.28L680.4 851.28" stroke="#111" stroke-width="1.1"/>
<text font-size="7.4" fill="#1c1c1c" stroke="none" text-anchor="middle" transform="translate(402 860.28) scale(0.8 1)">2</text>
<text x="420.9" y="860.28" font-size="7.4" fill="#1c1c1c" stroke="none" textLength="92.5" lengthAdjust="spacingAndGlyphs">INLET MDO / Eintritt MDO</text>
<path d="M387.5 862.96L680.4 862.96" stroke="#111" stroke-width="1.1"/>
<text font-size="7.4" fill="#1c1c1c" stroke="none" text-anchor="middle" transform="translate(402 871.96) scale(0.8 1)">3</text>
<text x="420.9" y="871.96" font-size="7.4" fill="#1c1c1c" stroke="none" textLength="209" lengthAdjust="spacingAndGlyphs">OUTLET F.O. TO ENGINES / Austritt F.O. zu den Maschinen</text>
<path d="M387.5 874.64L680.4 874.64" stroke="#111" stroke-width="1.1"/>
<text font-size="7.4" fill="#1c1c1c" stroke="none" text-anchor="middle" transform="translate(402 883.64) scale(0.8 1)">4</text>
<text x="420.9" y="883.64" font-size="7.4" fill="#1c1c1c" stroke="none" textLength="255" lengthAdjust="spacingAndGlyphs">RETURN STROKE F.O. FROM ENGINES / Rücklauf F.O. von den Maschinen</text>
<path d="M387.5 886.32L680.4 886.32" stroke="#111" stroke-width="1.1"/>
<text font-size="7.4" fill="#1c1c1c" stroke="none" text-anchor="middle" transform="translate(402 895.32) scale(0.8 1)">5</text>
<text x="420.9" y="895.32" font-size="7.4" fill="#1c1c1c" stroke="none" textLength="232" lengthAdjust="spacingAndGlyphs">DIRECTLY OUTLET TO DAYTANK / Direktaustritt zum Tagestank</text>
<path d="M387.5 898L680.4 898" stroke="#111" stroke-width="1.1"/>
<text font-size="7.4" fill="#1c1c1c" stroke="none" text-anchor="middle" transform="translate(402 907) scale(0.8 1)">6</text>
<text x="420.9" y="907" font-size="7.4" fill="#1c1c1c" stroke="none" textLength="154" lengthAdjust="spacingAndGlyphs">INLET SATURATED STEAM / Eintritt Dampf</text>
<path d="M387.5 909.68L680.4 909.68" stroke="#111" stroke-width="1.1"/>
<text font-size="7.4" fill="#1c1c1c" stroke="none" text-anchor="middle" transform="translate(402 918.68) scale(0.8 1)">7</text>
<text x="420.9" y="918.68" font-size="7.4" fill="#1c1c1c" stroke="none" textLength="160" lengthAdjust="spacingAndGlyphs">OUTLET CONDENSATE / Austritt Kondensate</text>
<path d="M387.5 921.36L680.4 921.36" stroke="#111" stroke-width="1.1"/>
<text font-size="7.4" fill="#1c1c1c" stroke="none" text-anchor="middle" transform="translate(402 930.36) scale(0.8 1)">8</text>
<text x="420.9" y="930.36" font-size="7.4" fill="#1c1c1c" stroke="none" textLength="252" lengthAdjust="spacingAndGlyphs">SUPPLY COMPRESS. AIR (DRY+CLEAN) / Druckluft (trocken + sauber)</text>
<path d="M387.5 933.04L680.4 933.04" stroke="#111" stroke-width="1.1"/>
<text font-size="7.4" fill="#1c1c1c" stroke="none" text-anchor="middle" transform="translate(402 942.04) scale(0.8 1)">9</text>
<text x="420.9" y="942.04" font-size="7.4" fill="#1c1c1c" stroke="none" textLength="187" lengthAdjust="spacingAndGlyphs">DRAIN AUTOMATIC FILTER / Ablauf Automatik Filter</text>
<path d="M387.5 944.72L680.4 944.72" stroke="#111" stroke-width="1.1"/>
<text font-size="7.4" fill="#1c1c1c" stroke="none" text-anchor="middle" transform="translate(402 953.72) scale(0.8 1)">10</text>
<text x="420.9" y="953.72" font-size="7.4" fill="#1c1c1c" stroke="none" textLength="181" lengthAdjust="spacingAndGlyphs">DRAIN SAFETY VALVES / Ablauf Sicherheitsventil</text>
<path d="M387.5 956.4L680.4 956.4" stroke="#111" stroke-width="1.1"/>
<text font-size="7.4" fill="#1c1c1c" stroke="none" text-anchor="middle" transform="translate(402 965.4) scale(0.8 1)">11</text>
<text x="420.9" y="965.4" font-size="7.4" fill="#1c1c1c" stroke="none" textLength="160" lengthAdjust="spacingAndGlyphs">INLET COOLING WATER / Eintritt Kühlwasser</text>
<path d="M387.5 968.08L680.4 968.08" stroke="#111" stroke-width="1.1"/>
<text font-size="7.4" fill="#1c1c1c" stroke="none" text-anchor="middle" transform="translate(402 977.08) scale(0.8 1)">12</text>
<text x="420.9" y="977.08" font-size="7.4" fill="#1c1c1c" stroke="none" textLength="171" lengthAdjust="spacingAndGlyphs">OUTLET COOLING WATER / Austritt Kühlwasser</text>
<path d="M387.5 979.76L680.4 979.76" stroke="#111" stroke-width="1.1"/>
<text font-size="7.4" fill="#1c1c1c" stroke="none" text-anchor="middle" transform="translate(402 988.76) scale(0.8 1)">13</text>
<text x="420.9" y="988.76" font-size="7.4" fill="#1c1c1c" stroke="none" textLength="110" lengthAdjust="spacingAndGlyphs">DRAIN MODULE / Ablauf Modul</text>
<path d="M416.6 839.6L416.6 991.5" stroke="#111" stroke-width="1.1"/>
<rect x="680.4" y="792.4" width="176.4" height="199.1" stroke="#111" stroke-width="1.2" fill="none"/>
<text x="689.8" y="803.4" font-size="10" fill="#1c1c1c" stroke="none" textLength="127" lengthAdjust="spacingAndGlyphs">LIST OF MEASURING POINTS /</text>
<text x="689.8" y="813.6" font-size="10" fill="#1c1c1c" stroke="none" textLength="69" lengthAdjust="spacingAndGlyphs">Messstellenliste</text>
<path d="M680.4 816.6L856.8 816.6" stroke="#111" stroke-width="1.1"/>
<text font-size="5.8" fill="#1c1c1c" stroke="none" transform="translate(682.1 824.9) scale(0.8 1)">DPA</text>
<text x="705.1" y="824.9" font-size="5.8" fill="#1c1c1c" stroke="none" textLength="124" lengthAdjust="spacingAndGlyphs">DIFF. PRESSURE ALARM / DIFF. DRUCK ALARM</text>
<path d="M680.4 828.28L856.8 828.28" stroke="#111" stroke-width="1.1"/>
<text font-size="5.8" fill="#1c1c1c" stroke="none" transform="translate(682.1 836.58) scale(0.8 1)">DPI</text>
<text x="705.1" y="836.58" font-size="5.8" fill="#1c1c1c" stroke="none" textLength="136" lengthAdjust="spacingAndGlyphs">DIFF. PRESSURE INDICATOR / DIFF. DRUCK ANZEIGE</text>
<path d="M680.4 839.96L856.8 839.96" stroke="#111" stroke-width="1.1"/>
<text font-size="5.8" fill="#1c1c1c" stroke="none" transform="translate(682.1 848.26) scale(0.8 1)">DPS</text>
<text x="705.1" y="848.26" font-size="5.8" fill="#1c1c1c" stroke="none" textLength="134" lengthAdjust="spacingAndGlyphs">DIFF. PRESSURE SWITCH / DIFF. DRUCK SCHALTER</text>
<path d="M680.4 851.64L856.8 851.64" stroke="#111" stroke-width="1.1"/>
<text font-size="5.8" fill="#1c1c1c" stroke="none" transform="translate(682.1 859.94) scale(0.8 1)">FI</text>
<text x="705.1" y="859.94" font-size="5.8" fill="#1c1c1c" stroke="none" textLength="111" lengthAdjust="spacingAndGlyphs">FLOW INDICATOR / DURCHFLUSSANZEIGER</text>
<path d="M680.4 863.32L856.8 863.32" stroke="#111" stroke-width="1.1"/>
<text font-size="5.8" fill="#1c1c1c" stroke="none" transform="translate(682.1 871.62) scale(0.8 1)">GS</text>
<text x="705.1" y="871.62" font-size="5.8" fill="#1c1c1c" stroke="none" textLength="98" lengthAdjust="spacingAndGlyphs">LIMIT SWITCH / ENDLAGENSCHALTER</text>
<path d="M680.4 875L856.8 875" stroke="#111" stroke-width="1.1"/>
<text font-size="5.8" fill="#1c1c1c" stroke="none" transform="translate(682.1 883.3) scale(0.8 1)">LAL</text>
<text x="705.1" y="883.3" font-size="5.8" fill="#1c1c1c" stroke="none" textLength="133" lengthAdjust="spacingAndGlyphs">LEVEL ALARM LOW / FÜLLSTAND ALARM NIEDRIG</text>
<path d="M680.4 886.68L856.8 886.68" stroke="#111" stroke-width="1.1"/>
<text font-size="5.8" fill="#1c1c1c" stroke="none" transform="translate(682.1 894.98) scale(0.8 1)">LS</text>
<text x="705.1" y="894.98" font-size="5.8" fill="#1c1c1c" stroke="none" textLength="108" lengthAdjust="spacingAndGlyphs">LEVEL SWITCH / FÜLLSTANDSSCHALTER</text>
<path d="M680.4 898.36L856.8 898.36" stroke="#111" stroke-width="1.1"/>
<text font-size="5.8" fill="#1c1c1c" stroke="none" transform="translate(682.1 906.66) scale(0.8 1)">M</text>
<text x="705.1" y="906.66" font-size="5.8" fill="#1c1c1c" stroke="none" textLength="84" lengthAdjust="spacingAndGlyphs">MOTOR DRIVE / MOTORANTRIEB</text>
<path d="M680.4 910.04L856.8 910.04" stroke="#111" stroke-width="1.1"/>
<text font-size="5.8" fill="#1c1c1c" stroke="none" transform="translate(682.1 918.34) scale(0.8 1)">PI</text>
<text x="705.1" y="918.34" font-size="5.8" fill="#1c1c1c" stroke="none" textLength="104" lengthAdjust="spacingAndGlyphs">PRESSURE INDICATOR / DRUCKANZEIGE</text>
<path d="M680.4 921.72L856.8 921.72" stroke="#111" stroke-width="1.1"/>
<text font-size="5.8" fill="#1c1c1c" stroke="none" transform="translate(682.1 930.02) scale(0.8 1)">PT</text>
<text x="705.1" y="930.02" font-size="5.8" fill="#1c1c1c" stroke="none" textLength="131" lengthAdjust="spacingAndGlyphs">PRESSURE TRANSMITTER / DRUCK TRANSMITTER</text>
<path d="M680.4 933.4L856.8 933.4" stroke="#111" stroke-width="1.1"/>
<text font-size="5.8" fill="#1c1c1c" stroke="none" transform="translate(682.1 941.7) scale(0.8 1)">TA</text>
<text x="705.1" y="941.7" font-size="5.8" fill="#1c1c1c" stroke="none" textLength="121" lengthAdjust="spacingAndGlyphs">TEMPERATUR-ALARM / TEMPERATUR-ALARM</text>
<path d="M680.4 945.08L856.8 945.08" stroke="#111" stroke-width="1.1"/>
<text font-size="5.8" fill="#1c1c1c" stroke="none" transform="translate(682.1 953.38) scale(0.8 1)">TI</text>
<text x="705.1" y="953.38" font-size="5.8" fill="#1c1c1c" stroke="none" textLength="130" lengthAdjust="spacingAndGlyphs">TEMPERATUR INDICATOR / TEMPERATURANZEIGE</text>
<path d="M680.4 956.76L856.8 956.76" stroke="#111" stroke-width="1.1"/>
<text font-size="5.8" fill="#1c1c1c" stroke="none" transform="translate(682.1 965.06) scale(0.8 1)">TS</text>
<text x="705.1" y="965.06" font-size="5.8" fill="#1c1c1c" stroke="none" textLength="124.5" lengthAdjust="spacingAndGlyphs">TEMPERATUR SENSOR / TEMPERATUR SENSOR</text>
<path d="M680.4 968.44L856.8 968.44" stroke="#111" stroke-width="1.1"/>
<text font-size="5.8" fill="#1c1c1c" stroke="none" transform="translate(682.1 976.74) scale(0.8 1)">VA</text>
<text x="705.1" y="976.74" font-size="5.8" fill="#1c1c1c" stroke="none" textLength="114" lengthAdjust="spacingAndGlyphs">VISCOSITY-ALARM / VISKOSITÄTS-ALARM</text>
<path d="M680.4 980.12L856.8 980.12" stroke="#111" stroke-width="1.1"/>
<text font-size="5.8" fill="#1c1c1c" stroke="none" transform="translate(682.1 988.42) scale(0.8 1)">VIC</text>
<text x="705.1" y="988.42" font-size="5.8" fill="#1c1c1c" stroke="none" textLength="146" lengthAdjust="spacingAndGlyphs">VISCOSITY-CONTROLLER / VISKOSITÄTS- CONTROLLER</text>
<path d="M703.4 816.6L703.4 991.5" stroke="#111" stroke-width="1.1"/>
<path d="M862.3 865.2L896.7 865.2" stroke="#1c1c1c" stroke-width="1" stroke-dasharray="14 2 3 2"/>
<text x="903.8" y="866.9" font-size="5.9" fill="#1c1c1c" stroke="none" textLength="80" lengthAdjust="spacingAndGlyphs">SCOPE OF SUPPLY FOR F.O.</text>
<text x="903.8" y="876.9" font-size="5.9" fill="#1c1c1c" stroke="none" textLength="83" lengthAdjust="spacingAndGlyphs">SUPPLY + BOOSTER MODULE</text>
<text x="903.8" y="888.6" font-size="5.9" fill="#1c1c1c" stroke="none" textLength="49" lengthAdjust="spacingAndGlyphs">Lieferumfang für</text>
<text x="903.8" y="898.8" font-size="5.9" fill="#1c1c1c" stroke="none" textLength="96.7" lengthAdjust="spacingAndGlyphs">Zubringer- und Zirkulationsmodul</text>
<text x="903.8" y="915.2" font-size="5.9" fill="#1c1c1c" stroke="none" textLength="76" lengthAdjust="spacingAndGlyphs">PIPE / COMPONENTS WITH</text>
<text x="903.8" y="924.8" font-size="5.9" fill="#1c1c1c" stroke="none" textLength="96.7" lengthAdjust="spacingAndGlyphs">TRACE HEATING AND INSULATION</text>
<text x="903.8" y="938.6" font-size="5.9" fill="#1c1c1c" stroke="none" textLength="79" lengthAdjust="spacingAndGlyphs">Leitung / Komponenten mit</text>
<text x="903.8" y="948.2" font-size="5.9" fill="#1c1c1c" stroke="none" textLength="85" lengthAdjust="spacingAndGlyphs">Begleitheizung und Isolierung</text>
<text x="903.8" y="965.2" font-size="5.9" fill="#1c1c1c" stroke="none" textLength="66" lengthAdjust="spacingAndGlyphs">PIPE WITH INSULATION</text>
<text x="903.8" y="977.4" font-size="5.9" fill="#1c1c1c" stroke="none" textLength="63" lengthAdjust="spacingAndGlyphs">Leitung mit Isolierung</text>
<path d="M861.6 913.5L895.7 913.5" stroke="#1c1c1c" stroke-width="1"/>
<path d="M870 910.3H892M868 916.7H890" stroke="#1c1c1c" stroke-width="1.1" fill="none"/>
<path d="M869.5 916.7L872.9 910.3M873.7 916.7L877.1 910.3M877.9 916.7L881.3 910.3M882.1 916.7L885.5 910.3M886.3 916.7L889.7 910.3" stroke="#1c1c1c" stroke-width="1.5" fill="none"/>
<path d="M864.4 963.5L896.7 963.5" stroke="#1c1c1c" stroke-width="0.9"/>
<path d="M870 961.300H890M868 965.700H888M871 965.700l3.500-4.400M876 965.700l3.500-4.400M881 965.700l3.500-4.400M886 965.700l3.500-4.400" stroke="#1c1c1c" stroke-width="0.7" fill="none"/>
<path d="M1005.5 817.5L1559.5 817.5" stroke="#111" stroke-width="1.2"/>
<path d="M1005.5 817.5L1005.5 991.5" stroke="#111" stroke-width="1.2"/>
<path d="M1173.6 817.5L1173.6 991.5" stroke="#111" stroke-width="1.2"/>
<path d="M1282.6 817.5L1282.6 991.5" stroke="#111" stroke-width="1.2"/>
<path d="M1005.5 875.4L1173.6 875.4" stroke="#111" stroke-width="1.1"/>
<path d="M1173.6 875.4L1282.6 875.4" stroke="#111" stroke-width="1.1"/>
<path d="M1005.5 888.5L1173.6 888.5" stroke="#111" stroke-width="1.1"/>
<path d="M1173.6 888.5L1282.6 888.5" stroke="#111" stroke-width="1.1"/>
<path d="M1005.5 901.5L1173.6 901.5" stroke="#111" stroke-width="1.1"/>
<path d="M1173.6 901.5L1282.6 901.5" stroke="#111" stroke-width="1.1"/>
<path d="M1005.5 914.3L1173.6 914.3" stroke="#111" stroke-width="1.1"/>
<path d="M1173.6 914.3L1282.6 914.3" stroke="#111" stroke-width="1.1"/>
<path d="M1005.5 927.4L1173.6 927.4" stroke="#111" stroke-width="1.1"/>
<path d="M1173.6 927.4L1282.6 927.4" stroke="#111" stroke-width="1.1"/>
<path d="M1005.5 940.2L1173.6 940.2" stroke="#111" stroke-width="1.1"/>
<path d="M1173.6 940.2L1282.6 940.2" stroke="#111" stroke-width="1.1"/>
<path d="M1005.5 953.2L1173.6 953.2" stroke="#111" stroke-width="1.1"/>
<path d="M1005.5 965.9L1173.6 965.9" stroke="#111" stroke-width="1.1"/>
<path d="M1005.5 978.9L1173.6 978.9" stroke="#111" stroke-width="1.1"/>
<path d="M1173.6 978.9L1282.6 978.9" stroke="#111" stroke-width="1.1"/>
<path d="M1032.1 875.4L1032.1 991.5" stroke="#111" stroke-width="1.1"/>
<path d="M1091.4 875.4L1091.4 991.5" stroke="#111" stroke-width="1.1"/>
<path d="M1129.3 875.4L1129.3 991.5" stroke="#111" stroke-width="1.1"/>
<path d="M1206.1 875.4L1206.1 940.2" stroke="#111" stroke-width="1.1"/>
<path d="M1238.2 875.4L1238.2 940.2" stroke="#111" stroke-width="1.1"/>
<text x="1018" y="885.5" font-size="9" fill="#1c1c1c" stroke="none" text-anchor="middle">h</text>
<text x="1018" y="898.5" font-size="9" fill="#1c1c1c" stroke="none" text-anchor="middle">g</text>
<text x="1018" y="911.5" font-size="9" fill="#1c1c1c" stroke="none" text-anchor="middle">f</text>
<text x="1018" y="924.5" font-size="9" fill="#1c1c1c" stroke="none" text-anchor="middle">e</text>
<text x="1018" y="937.5" font-size="9" fill="#1c1c1c" stroke="none" text-anchor="middle">d</text>
<text x="1018" y="950.5" font-size="9" fill="#1c1c1c" stroke="none" text-anchor="middle">c</text>
<text x="1018" y="963.5" font-size="9" fill="#1c1c1c" stroke="none" text-anchor="middle">b</text>
<text x="1018" y="976.5" font-size="9" fill="#1c1c1c" stroke="none" text-anchor="middle">a</text>
<text x="1009.1" y="989.5" font-size="7.5" fill="#1c1c1c" stroke="none" textLength="18" lengthAdjust="spacingAndGlyphs" font-style="italic">Index</text>
<text x="1035" y="989.5" font-size="7.5" fill="#1c1c1c" stroke="none" textLength="28" lengthAdjust="spacingAndGlyphs" font-style="italic">Revision</text>
<text x="1099.6" y="989.5" font-size="7.5" fill="#1c1c1c" stroke="none" textLength="15" lengthAdjust="spacingAndGlyphs" font-style="italic">Date</text>
<text x="1137" y="989.5" font-size="7.5" fill="#1c1c1c" stroke="none" textLength="20" lengthAdjust="spacingAndGlyphs" font-style="italic">Name</text>
<text x="1177" y="885.2" font-size="8.5" fill="#1c1c1c" stroke="none" textLength="21" lengthAdjust="spacingAndGlyphs">2009</text>
<text x="1212" y="885.2" font-size="7.5" fill="#1c1c1c" stroke="none" textLength="15" lengthAdjust="spacingAndGlyphs" font-style="italic">Date</text>
<text x="1245" y="885.2" font-size="7.5" fill="#1c1c1c" stroke="none" textLength="20" lengthAdjust="spacingAndGlyphs" font-style="italic">Name</text>
<text x="1177" y="897.8" font-size="7.5" fill="#1c1c1c" stroke="none" textLength="21" lengthAdjust="spacingAndGlyphs" font-style="italic">Drawn</text>
<text x="1210" y="898.3" font-size="8.5" fill="#1c1c1c" stroke="none" textLength="27" lengthAdjust="spacingAndGlyphs">02.11.</text>
<text x="1243" y="898.3" font-size="8.5" fill="#1c1c1c" stroke="none" textLength="11" lengthAdjust="spacingAndGlyphs">SH</text>
<text x="1177" y="910.8" font-size="7.5" fill="#1c1c1c" stroke="none" textLength="25" lengthAdjust="spacingAndGlyphs" font-style="italic">Approv.</text>
<text x="1210" y="911.3" font-size="8.5" fill="#1c1c1c" stroke="none" textLength="27" lengthAdjust="spacingAndGlyphs">02.11.</text>
<text x="1243" y="911.3" font-size="8.5" fill="#1c1c1c" stroke="none" textLength="35" lengthAdjust="spacingAndGlyphs">B.Tetard</text>
<text x="1177" y="923.5" font-size="7.5" fill="#1c1c1c" stroke="none" textLength="19" lengthAdjust="spacingAndGlyphs" font-style="italic">Norm</text>
<text x="1175" y="950.7" font-size="8.8" fill="#444" stroke="none" textLength="66" lengthAdjust="spacingAndGlyphs">Project – No.:</text>
<text x="1196.4" y="971.1" font-size="12.5" fill="#444" stroke="none" textLength="59" lengthAdjust="spacingAndGlyphs">072M016</text>
<text x="1008.7" y="833.4" font-size="8.5" fill="#1c1c1c" stroke="none" textLength="16" lengthAdjust="spacingAndGlyphs">mas</text>
<path d="M1006.800 837H1028.200L1036 849.600L1045.700 828.800H1056.400" stroke="#111" stroke-width="1.8" fill="none"/>
<path d="M1031.500 835.500L1036.500 844L1043 830.500" stroke="#111" stroke-width="1" fill="none"/>
<text x="1058.3" y="829.6" font-size="5" fill="#444" stroke="none" textLength="112" lengthAdjust="spacingAndGlyphs">mas-maritime assembly systems (Kunshan) Co., Ltd.</text>
<text x="1086.9" y="840.4" font-size="4.4" fill="#555" stroke="none" textLength="59" lengthAdjust="spacingAndGlyphs">No.161, Qingyang South Road,</text>
<text x="1086.9" y="846" font-size="4.4" fill="#555" stroke="none" textLength="34" lengthAdjust="spacingAndGlyphs">Kunshan, Jiangsu</text>
<text x="1086.9" y="851.5" font-size="4.4" fill="#555" stroke="none" textLength="21" lengthAdjust="spacingAndGlyphs">P. R. China</text>
<text x="1086.9" y="859.9" font-size="4.4" fill="#555" stroke="none" textLength="7" lengthAdjust="spacingAndGlyphs">Tel.</text>
<text x="1106.5" y="859.9" font-size="4.4" fill="#555" stroke="none" textLength="60" lengthAdjust="spacingAndGlyphs">+86 (0)512-57900070 ext. 805</text>
<text x="1086.9" y="865.5" font-size="4.4" fill="#555" stroke="none" textLength="7" lengthAdjust="spacingAndGlyphs">Fax</text>
<text x="1106.5" y="865.5" font-size="4.4" fill="#555" stroke="none" textLength="40" lengthAdjust="spacingAndGlyphs">+86 (0)512-57900071</text>
<text x="1178.5" y="824.3" font-size="6" fill="#1c1c1c" stroke="none" textLength="90" lengthAdjust="spacingAndGlyphs" font-style="italic" font-weight="bold">THE INFORMATION HERE ON IS THE</text>
<text x="1178.5" y="832.47" font-size="6" fill="#1c1c1c" stroke="none" textLength="67" lengthAdjust="spacingAndGlyphs" font-style="italic" font-weight="bold">PROPERTY OF mas GmbH,</text>
<text x="1178.5" y="840.64" font-size="6" fill="#1c1c1c" stroke="none" textLength="67" lengthAdjust="spacingAndGlyphs" font-style="italic" font-weight="bold">AND/OR ITS SUBSIDIARIES.</text>
<text x="1178.5" y="848.81" font-size="6" fill="#1c1c1c" stroke="none" textLength="77" lengthAdjust="spacingAndGlyphs" font-style="italic" font-weight="bold">WITHOUT WRITTEN PERMISSION,</text>
<text x="1178.5" y="856.98" font-size="6" fill="#1c1c1c" stroke="none" textLength="101" lengthAdjust="spacingAndGlyphs" font-style="italic" font-weight="bold">ANY COPYING, TRANSMITTAL TO OTHERS,</text>
<text x="1178.5" y="865.15" font-size="6" fill="#1c1c1c" stroke="none" textLength="84" lengthAdjust="spacingAndGlyphs" font-style="italic" font-weight="bold">AND ANY USE EXCEPT THAT FOR</text>
<text x="1178.5" y="873.32" font-size="6" fill="#1c1c1c" stroke="none" textLength="91" lengthAdjust="spacingAndGlyphs" font-style="italic" font-weight="bold">WHICH IT IS LOANED IS PROHIBITED.</text>
<path d="M1282.6 837.5L1559.5 837.5" stroke="#111" stroke-width="1.1"/>
<path d="M1282.6 875.5L1559.5 875.5" stroke="#111" stroke-width="1.1"/>
<path d="M1282.6 940.4L1559.5 940.4" stroke="#111" stroke-width="1.1"/>
<path d="M1282.6 978.7L1559.5 978.7" stroke="#111" stroke-width="1.1"/>
<path d="M1442.5 817.5L1442.5 837.5" stroke="#111" stroke-width="1.1"/>
<path d="M1507.6 940.4L1507.6 978.7" stroke="#111" stroke-width="1.1"/>
<path d="M1507.6 965.9L1559.5 965.9" stroke="#111" stroke-width="1.1"/>
<path d="M1420.3 978.7L1420.3 991.5" stroke="#111" stroke-width="1.1"/>
<text x="1286.5" y="826.3" font-size="7.5" fill="#1c1c1c" stroke="none" textLength="18" lengthAdjust="spacingAndGlyphs" font-style="italic">Scale</text>
<text x="1368.2" y="834.6" font-size="13" fill="#1c1c1c" stroke="none" textLength="40" lengthAdjust="spacingAndGlyphs">none</text>
<text x="1447" y="826.3" font-size="7.5" fill="#1c1c1c" stroke="none" textLength="24" lengthAdjust="spacingAndGlyphs" font-style="italic">Format</text>
<text x="1475.8" y="833.6" font-size="16" fill="#1c1c1c" stroke="none" textLength="20" lengthAdjust="spacingAndGlyphs">A3</text>
<text x="1286.5" y="847.6" font-size="7.5" fill="#1c1c1c" stroke="none" textLength="19" lengthAdjust="spacingAndGlyphs" font-style="italic">Client</text>
<text x="1318" y="848.6" font-size="8.6" fill="#1c1c1c" stroke="none" textLength="129" lengthAdjust="spacingAndGlyphs">Jiangsu Yangzijiang Shipyard</text>
<text x="1318" y="861.3" font-size="8.6" fill="#1c1c1c" stroke="none" textLength="232" lengthAdjust="spacingAndGlyphs">Project: 7600 DWT, hull no.. YZJ2007-807_812, 821</text>
<text x="1286.5" y="885.6" font-size="7.5" fill="#1c1c1c" stroke="none" textLength="39" lengthAdjust="spacingAndGlyphs" font-style="italic">Part Name</text>
<text x="1329.3" y="900.2" font-size="15" fill="#555" stroke="none" textLength="177" lengthAdjust="spacingAndGlyphs">FUEL OIL SUPPLY AND</text>
<text x="1348.4" y="919" font-size="15" fill="#555" stroke="none" textLength="139" lengthAdjust="spacingAndGlyphs">BOOSTER MODULE</text>
<text x="1330.3" y="936.5" font-size="15" fill="#555" stroke="none" textLength="176" lengthAdjust="spacingAndGlyphs">GENERAL P+I DIAGRAM</text>
<text x="1286.5" y="950.7" font-size="7.5" fill="#1c1c1c" stroke="none" textLength="42" lengthAdjust="spacingAndGlyphs" font-style="italic">Drawing No.</text>
<text x="1333.8" y="973.7" font-size="17" fill="#555" stroke="none" textLength="165" lengthAdjust="spacingAndGlyphs">D-1-072M016-01</text>
<text x="1513" y="950.7" font-size="7.5" fill="#1c1c1c" stroke="none" textLength="19" lengthAdjust="spacingAndGlyphs" font-style="italic">Sheet</text>
<text x="1534.5" y="963" font-size="8.5" fill="#444" stroke="none">1</text>
<text x="1514.6" y="975.6" font-size="7.5" fill="#1c1c1c" stroke="none" font-style="italic">of</text>
<text x="1534.5" y="975.6" font-size="8.5" fill="#444" stroke="none">1</text>
<text x="1286.5" y="986.7" font-size="7.5" fill="#1c1c1c" stroke="none" textLength="33" lengthAdjust="spacingAndGlyphs" font-style="italic">Tolerance</text>
<text x="1328.3" y="989.6" font-size="8" fill="#444" stroke="none" textLength="20" lengthAdjust="spacingAndGlyphs">none</text>
<path d="M418.300 710V198.400H1353.600V710z" stroke="#333" stroke-width="1.1" fill="none" stroke-dasharray="22 4 6 3.500"/>
<circle cx="702" cy="178.8" r="6.6" stroke="#1c1c1c" stroke-width="1" fill="#fff"/>
<text x="702" y="181.5" font-size="7.5" fill="#1c1c1c" stroke="none" text-anchor="middle">8</text>
<path d="M699 185.5L699 191.8L695.4 191.8L702 198.3L708.6 191.8L705 191.8L705 185.5" stroke="#1c1c1c" stroke-width="1" fill="#fff"/>
<text x="710" y="181.6" font-size="7.6" fill="#1c1c1c" stroke="none" textLength="22" lengthAdjust="spacingAndGlyphs">R 1/4&quot;</text>
<circle cx="906.3" cy="178.8" r="6.6" stroke="#1c1c1c" stroke-width="1" fill="#fff"/>
<text x="906.3" y="181.5" font-size="7.5" fill="#1c1c1c" stroke="none" text-anchor="middle">5</text>
<path d="M903.3 198.4L903.3 192.1L899.7 192.1L906.3 185.6L912.9 192.1L909.3 192.1L909.3 198.4" stroke="#1c1c1c" stroke-width="1" fill="#fff"/>
<text x="898.3" y="181.6" font-size="7.6" fill="#1c1c1c" stroke="none" text-anchor="end" textLength="17" lengthAdjust="spacingAndGlyphs">DN32</text>
<circle cx="968.8" cy="178.8" r="6.6" stroke="#1c1c1c" stroke-width="1" fill="#fff"/>
<text font-size="7.5" fill="#1c1c1c" stroke="none" text-anchor="middle" transform="translate(968.8 181.5) scale(0.8 1)">12</text>
<path d="M965.8 198.4L965.8 192.1L962.2 192.1L968.8 185.6L975.4 192.1L971.8 192.1L971.8 198.4" stroke="#1c1c1c" stroke-width="1" fill="#fff"/>
<text x="960.8" y="181.6" font-size="7.6" fill="#1c1c1c" stroke="none" text-anchor="end" textLength="17" lengthAdjust="spacingAndGlyphs">DN65</text>
<circle cx="992" cy="178.8" r="6.6" stroke="#1c1c1c" stroke-width="1" fill="#fff"/>
<text font-size="7.5" fill="#1c1c1c" stroke="none" text-anchor="middle" transform="translate(992 181.5) scale(0.8 1)">11</text>
<path d="M989 185.5L989 191.8L985.4 191.8L992 198.3L998.6 191.8L995 191.8L995 185.5" stroke="#1c1c1c" stroke-width="1" fill="#fff"/>
<text x="1000" y="181.6" font-size="7.6" fill="#1c1c1c" stroke="none" textLength="17" lengthAdjust="spacingAndGlyphs">DN65</text>
<circle cx="1120.3" cy="178.8" r="6.6" stroke="#1c1c1c" stroke-width="1" fill="#fff"/>
<text x="1120.3" y="181.5" font-size="7.5" fill="#1c1c1c" stroke="none" text-anchor="middle">4</text>
<path d="M1117.3 185.5L1117.3 191.8L1113.7 191.8L1120.3 198.3L1126.9 191.8L1123.3 191.8L1123.3 185.5" stroke="#1c1c1c" stroke-width="1" fill="#fff"/>
<text x="1128.3" y="181.6" font-size="7.6" fill="#1c1c1c" stroke="none" textLength="17" lengthAdjust="spacingAndGlyphs">DN32</text>
<circle cx="675.3" cy="729.6" r="6.6" stroke="#1c1c1c" stroke-width="1" fill="#fff"/>
<text x="675.3" y="732.3" font-size="7.5" fill="#1c1c1c" stroke="none" text-anchor="middle">9</text>
<path d="M672.3 710L672.3 716.3L668.7 716.3L675.3 722.8L681.9 716.3L678.3 716.3L678.3 710" stroke="#1c1c1c" stroke-width="1" fill="#fff"/>
<text x="666.8" y="732.4" font-size="7.6" fill="#1c1c1c" stroke="none" text-anchor="end" textLength="17" lengthAdjust="spacingAndGlyphs">DN50</text>
<circle cx="831.8" cy="729.6" r="6.6" stroke="#1c1c1c" stroke-width="1" fill="#fff"/>
<text font-size="7.5" fill="#1c1c1c" stroke="none" text-anchor="middle" transform="translate(831.8 732.3) scale(0.8 1)">10</text>
<path d="M828.8 710L828.8 716.3L825.2 716.3L831.8 722.8L838.4 716.3L834.8 716.3L834.8 710" stroke="#1c1c1c" stroke-width="1" fill="#fff"/>
<text x="823.3" y="732.4" font-size="7.6" fill="#1c1c1c" stroke="none" text-anchor="end" textLength="16" lengthAdjust="spacingAndGlyphs">G 2&quot;</text>
<circle cx="953.8" cy="729.6" r="6.6" stroke="#1c1c1c" stroke-width="1" fill="#fff"/>
<text font-size="7.5" fill="#1c1c1c" stroke="none" text-anchor="middle" transform="translate(953.8 732.3) scale(0.8 1)">13</text>
<path d="M950.8 710L950.8 716.3L947.2 716.3L953.8 722.8L960.4 716.3L956.8 716.3L956.8 710" stroke="#1c1c1c" stroke-width="1" fill="#fff"/>
<text x="945.3" y="732.4" font-size="7.6" fill="#1c1c1c" stroke="none" text-anchor="end" textLength="27" lengthAdjust="spacingAndGlyphs">R 1 1/2&quot;</text>
<circle cx="1065.5" cy="729.6" r="6.6" stroke="#1c1c1c" stroke-width="1" fill="#fff"/>
<text x="1065.5" y="732.3" font-size="7.5" fill="#1c1c1c" stroke="none" text-anchor="middle">7</text>
<path d="M1062.5 710L1062.5 716.3L1058.9 716.3L1065.5 722.8L1072.1 716.3L1068.5 716.3L1068.5 710" stroke="#1c1c1c" stroke-width="1" fill="#fff"/>
<text x="1057" y="732.4" font-size="7.6" fill="#1c1c1c" stroke="none" text-anchor="end" textLength="17" lengthAdjust="spacingAndGlyphs">DN20</text>
<circle cx="1153.3" cy="729.6" r="6.6" stroke="#1c1c1c" stroke-width="1" fill="#fff"/>
<text x="1153.3" y="732.3" font-size="7.5" fill="#1c1c1c" stroke="none" text-anchor="middle">6</text>
<path d="M1150.3 723L1150.3 716.7L1146.7 716.7L1153.3 710.2L1159.9 716.7L1156.3 716.7L1156.3 723" stroke="#1c1c1c" stroke-width="1" fill="#fff"/>
<text x="1161.8" y="732.4" font-size="7.6" fill="#1c1c1c" stroke="none" textLength="17" lengthAdjust="spacingAndGlyphs">DN20</text>
<circle cx="398.8" cy="398.8" r="6.6" stroke="#1c1c1c" stroke-width="1" fill="#fff"/>
<text x="398.8" y="401.5" font-size="7.5" fill="#1c1c1c" stroke="none" text-anchor="middle">1</text>
<path d="M405.4 395.8L411.7 395.8L411.7 392.2L418.2 398.8L411.7 405.4L411.7 401.8L405.4 401.8" stroke="#1c1c1c" stroke-width="1" fill="#fff"/>
<text x="390" y="390.3" font-size="7.6" fill="#1c1c1c" stroke="none" textLength="17" lengthAdjust="spacingAndGlyphs">DN32</text>
<circle cx="398.8" cy="508.8" r="6.6" stroke="#1c1c1c" stroke-width="1" fill="#fff"/>
<text x="398.8" y="511.5" font-size="7.5" fill="#1c1c1c" stroke="none" text-anchor="middle">2</text>
<path d="M405.4 505.8L411.7 505.8L411.7 502.2L418.2 508.8L411.7 515.4L411.7 511.8L405.4 511.8" stroke="#1c1c1c" stroke-width="1" fill="#fff"/>
<text x="390" y="500" font-size="7.6" fill="#1c1c1c" stroke="none" textLength="17" lengthAdjust="spacingAndGlyphs">DN25</text>
<path d="M1353.6 419.2L1359.9 419.2L1359.9 415.6L1366.4 422.2L1359.9 428.8L1359.9 425.2L1353.6 425.2" stroke="#1c1c1c" stroke-width="1" fill="#fff"/>
<circle cx="1372.8" cy="422.2" r="6.6" stroke="#1c1c1c" stroke-width="1" fill="#fff"/>
<text x="1372.8" y="424.9" font-size="7.5" fill="#1c1c1c" stroke="none" text-anchor="middle">3</text>
<text x="1364" y="436.5" font-size="7.6" fill="#1c1c1c" stroke="none" textLength="17" lengthAdjust="spacingAndGlyphs">DN40</text>
<rect x="483.5" y="225.3" width="44.3" height="56.2" stroke="#1c1c1c" stroke-width="1.1" fill="none"/>
<text x="505.6" y="233.5" font-size="4.8" fill="#1c1c1c" stroke="none" text-anchor="middle" textLength="36" lengthAdjust="spacingAndGlyphs">MAIN CONTROL</text>
<text x="505.6" y="238.6" font-size="4.8" fill="#1c1c1c" stroke="none" text-anchor="middle" textLength="20" lengthAdjust="spacingAndGlyphs">CABINET</text>
<text x="486" y="250" font-size="7.4" fill="#1c1c1c" stroke="none" textLength="40" lengthAdjust="spacingAndGlyphs">Hauptschalt-</text>
<text x="486" y="258" font-size="7.4" fill="#1c1c1c" stroke="none" textLength="24" lengthAdjust="spacingAndGlyphs">schrank</text>
<text x="505.6" y="272" font-size="4.8" fill="#1c1c1c" stroke="none" text-anchor="middle" textLength="23" lengthAdjust="spacingAndGlyphs">STARTER</text>
<text x="505.6" y="278" font-size="4.8" fill="#1c1c1c" stroke="none" text-anchor="middle" textLength="20" lengthAdjust="spacingAndGlyphs">SP1/BP1</text>
<path d="M505.300 225.300V216.500H514" stroke="#1c1c1c" stroke-width="1" fill="none"/>
<path d="M516 216.500l-2.500-1.300v2.600z" stroke="#1c1c1c" stroke-width="0.7" fill="none"/>
<text x="518" y="218.3" font-size="4.8" fill="#1c1c1c" stroke="none" textLength="23" lengthAdjust="spacingAndGlyphs">SUPPLY 1</text>
<text x="518" y="223.4" font-size="4.8" fill="#1c1c1c" stroke="none" textLength="33" lengthAdjust="spacingAndGlyphs">Einspeisung 1</text>
<path d="M505.300 281.500V288" stroke="#1c1c1c" stroke-width="1" fill="none"/>
<path d="M505.300 291l-1.300-2.500h2.600z" stroke="#1c1c1c" stroke-width="0.7" fill="none"/>
<rect x="555.3" y="225.3" width="25.5" height="29.2" stroke="#1c1c1c" stroke-width="1.1" fill="none"/>
<text x="568" y="233.8" font-size="4.8" fill="#1c1c1c" stroke="none" text-anchor="middle" textLength="23" lengthAdjust="spacingAndGlyphs">STARTER</text>
<text x="568" y="239.5" font-size="4.8" fill="#1c1c1c" stroke="none" text-anchor="middle" textLength="21" lengthAdjust="spacingAndGlyphs">SP2/BP2</text>
<path d="M567.500 225.300V216.500H576" stroke="#1c1c1c" stroke-width="1" fill="none"/>
<path d="M578 216.500l-2.500-1.300v2.600z" stroke="#1c1c1c" stroke-width="0.7" fill="none"/>
<text x="581.5" y="218.3" font-size="4.8" fill="#1c1c1c" stroke="none" textLength="23" lengthAdjust="spacingAndGlyphs">SUPPLY 2</text>
<text x="581.5" y="223.4" font-size="4.8" fill="#1c1c1c" stroke="none" textLength="33" lengthAdjust="spacingAndGlyphs">Einspeisung 2</text>
<path d="M567.500 254.500V261" stroke="#1c1c1c" stroke-width="1" fill="none"/>
<path d="M567.500 264l-1.300-2.500h2.600z" stroke="#1c1c1c" stroke-width="0.7" fill="none"/>
<path d="M702 198.400V400.500" stroke="#1c1c1c" stroke-width="1.1" fill="none"/>
<path d="M433.300 438V315H702" stroke="#444" stroke-width="1" fill="none"/>
<rect x="558.3" y="305.5" width="13.2" height="4.8" stroke="#1c1c1c" stroke-width="1.2" fill="#fff"/>
<text x="564.9" y="309.4" font-size="3.6" fill="#1c1c1c" stroke="none" text-anchor="middle">A1</text>
<path d="M570.6 313.2L575.4 316.8V313.2L570.6 316.8z" stroke="#1c1c1c" stroke-width="0.9" fill="#fff"/>
<path d="M418.300 398.800H441.300V434" stroke="#1c1c1c" stroke-width="1" fill="none"/>
<path d="M431.1 398.8L435.5 398.8" stroke="#fff" stroke-width="2.2"/>
<path d="M431.1 398.8A2.2 2.2 0 0 1 435.5 398.8" stroke="#1c1c1c" stroke-width="1" fill="none"/>
<rect x="445.5" y="392.5" width="23.3" height="11.8" stroke="#1c1c1c" stroke-width="1" fill="#fff"/>
<text font-size="9" fill="#1c1c1c" stroke="none" text-anchor="middle" transform="translate(457.15 401.64) scale(0.82 1)">COV1</text>
<text x="453.8" y="411" font-size="7.6" fill="#1c1c1c" stroke="none" textLength="8" lengthAdjust="spacingAndGlyphs">25</text>
<path d="M447.5 404.3L442.5 435" stroke="#1c1c1c" stroke-width="0.9"/>
<path d="M438.1 436.6L444.5 441.4V436.6L438.1 441.4z" stroke="#1c1c1c" stroke-width="0.9" fill="#fff"/>
<path d="M441.300 439V443.500" stroke="#1c1c1c" stroke-width="1" fill="none"/>
<circle cx="441.3" cy="439" r="1.2" stroke="#1c1c1c" stroke-width="0.8" fill="#1c1c1c"/>
<circle cx="434.3" cy="439" r="1.5" stroke="#1c1c1c" stroke-width="0.8" fill="#fff"/>
<rect x="419.5" y="419" width="13" height="4.3" stroke="#1c1c1c" stroke-width="1.2" fill="#fff"/>
<text x="426" y="422.4" font-size="3.6" fill="#1c1c1c" stroke="none" text-anchor="middle">M01</text>
<path d="M431.5 427.05L437.5 431.55V427.05L431.5 431.55z" stroke="#1c1c1c" stroke-width="0.9" fill="#fff"/>
<path d="M434.5 425.9V432.7M432.9 425.9H436.1" stroke="#1c1c1c" stroke-width="0.9" fill="none"/>
<circle cx="434.5" cy="429.3" r="0.9" stroke="#1c1c1c" stroke-width="0.6" fill="#1c1c1c"/>
<path d="M434.5 432.5L434.5 437.5" stroke="#1c1c1c" stroke-width="0.8"/>
<circle cx="427.3" cy="452" r="4.6" stroke="#1c1c1c" stroke-width="1" fill="#fff"/>
<text font-size="4.6" fill="#1c1c1c" stroke="none" text-anchor="middle" transform="translate(427.3 453.66) scale(0.85 1)">GS</text>
<path d="M432 452H437.500V441" stroke="#1c1c1c" stroke-width="0.9" fill="none"/>
<path d="M441.300 443.500V508.300H418.300" stroke="#1c1c1c" stroke-width="1.1" fill="none" stroke-dasharray="2.500 1.500"/>
<rect x="438.9" y="486.2" width="4.8" height="9.2" stroke="#1c1c1c" stroke-width="1.1" fill="#fff"/>
<path d="M438.9 495.4L443.7 486.2" stroke="#1c1c1c" stroke-width="1"/>
<rect x="422.5" y="496.8" width="13" height="3.7" stroke="#1c1c1c" stroke-width="1.2" fill="#fff"/>
<text x="429" y="499.6" font-size="3.6" fill="#1c1c1c" stroke="none" text-anchor="middle">F1</text>
<text x="427.5" y="504.3" font-size="3.2" fill="#1c1c1c" stroke="none" text-anchor="middle">1&quot;</text>
<path d="M435.5 497L439 493" stroke="#1c1c1c" stroke-width="0.8"/>
<path d="M441.300 476.300H453.300V439" stroke="#6a6a6a" stroke-width="0.9" fill="none" stroke-dasharray="2.500 1.500"/>
<path d="M450.8 455.5H455.8L453.3 460L455.8 464.5H450.8L453.3 460z" stroke="#1c1c1c" stroke-width="0.9" fill="#fff"/>
<path d="M450.7 455.5H455.9M450.7 464.5H455.9" stroke="#1c1c1c" stroke-width="1.7" fill="none"/>
<circle cx="453.3" cy="460" r="2.2" stroke="#1c1c1c" stroke-width="1" fill="#fff"/>
<rect x="456.8" y="467.5" width="12" height="4.3" stroke="#1c1c1c" stroke-width="1.2" fill="#fff"/>
<text x="462.8" y="470.9" font-size="3.6" fill="#1c1c1c" stroke="none" text-anchor="middle">F43</text>
<text x="461.3" y="475.6" font-size="3.2" fill="#1c1c1c" stroke="none" text-anchor="middle">25</text>
<path d="M456.8 467.5L454.5 463.5" stroke="#1c1c1c" stroke-width="0.8"/>
<path d="M444.500 439H551.300" stroke="#1c1c1c" stroke-width="1" fill="none"/>
<rect x="455.4" y="436.6" width="9.2" height="4.8" stroke="#1c1c1c" stroke-width="1.1" fill="#fff"/>
<path d="M455.4 436.6L464.6 441.4" stroke="#1c1c1c" stroke-width="1"/>
<rect x="453" y="424" width="12" height="4.3" stroke="#1c1c1c" stroke-width="1.2" fill="#fff"/>
<text x="459" y="427.4" font-size="3.6" fill="#1c1c1c" stroke="none" text-anchor="middle">F48</text>
<text x="457.5" y="432.1" font-size="3.2" fill="#1c1c1c" stroke="none" text-anchor="middle">1&quot;</text>
<path d="M463 428.3L461 436.5" stroke="#1c1c1c" stroke-width="0.8"/>
<circle cx="473.8" cy="413.3" r="4.7" stroke="#1c1c1c" stroke-width="1" fill="#fff"/>
<text font-size="5.4" fill="#1c1c1c" stroke="none" text-anchor="middle" transform="translate(473.8 415.24) scale(0.85 1)">PI</text>
<path d="M470.8 423.25L476.8 427.75V423.25L470.8 427.75z" stroke="#1c1c1c" stroke-width="0.9" fill="#fff"/>
<path d="M473.8 422.1V428.9M472.2 422.1H475.4" stroke="#1c1c1c" stroke-width="0.9" fill="none"/>
<circle cx="473.8" cy="425.5" r="0.9" stroke="#1c1c1c" stroke-width="0.6" fill="#1c1c1c"/>
<path d="M473.800 418V422M473.800 429V439" stroke="#1c1c1c" stroke-width="0.9" fill="none"/>
<rect x="479.5" y="402" width="13" height="4" stroke="#1c1c1c" stroke-width="1.2" fill="#fff"/>
<text x="486" y="405.1" font-size="3.6" fill="#1c1c1c" stroke="none" text-anchor="middle">M2</text>
<rect x="482.5" y="410" width="12" height="4.3" stroke="#1c1c1c" stroke-width="1.2" fill="#fff"/>
<text x="488.5" y="413.4" font-size="3.6" fill="#1c1c1c" stroke="none" text-anchor="middle">M1</text>
<path d="M479.5 406L476.5 409.5" stroke="#1c1c1c" stroke-width="0.8"/>
<path d="M482.5 414.3L476.5 424" stroke="#1c1c1c" stroke-width="0.8"/>
<path d="M470.800 439V543.800H645.500V439" stroke="#333" stroke-width="1" fill="none"/>
<path d="M484.500 439V422.500H494.500M518.300 422.500H527V439M484.500 439V454.300H494.500M518.300 454.300H527V439M484.500 441.800H527" stroke="#1c1c1c" stroke-width="1.1" fill="none"/>
<rect x="494.5" y="415.5" width="23.8" height="14" stroke="#1c1c1c" stroke-width="1.1" fill="#fff"/>
<rect x="494.5" y="448.8" width="23.8" height="13.7" stroke="#1c1c1c" stroke-width="1.1" fill="#fff"/>
<path d="M500 415.500V429.500M513 415.500V429.500M500 448.800V462.500M513 448.800V462.500" stroke="#1c1c1c" stroke-width="0.9" fill="none" stroke-dasharray="2.500 1.500"/>
<path d="M480 436.5V441.5L484.5 439L489 441.5V436.5L484.5 439z" stroke="#1c1c1c" stroke-width="0.9" fill="#fff"/>
<path d="M480 436.4V441.6M489 436.4V441.6" stroke="#1c1c1c" stroke-width="1.7" fill="none"/>
<circle cx="484.5" cy="439" r="2.2" stroke="#1c1c1c" stroke-width="1" fill="#fff"/>
<path d="M522.5 436.5V441.5L527 439L531.5 441.5V436.5L527 439z" stroke="#1c1c1c" stroke-width="0.9" fill="#fff"/>
<path d="M522.5 436.4V441.6M531.5 436.4V441.6" stroke="#1c1c1c" stroke-width="1.7" fill="none"/>
<circle cx="527" cy="439" r="2.2" stroke="#1c1c1c" stroke-width="1" fill="#fff"/>
<path d="M518 430H523L520.5 434.5L523 439H518L520.5 434.5z" stroke="#1c1c1c" stroke-width="0.9" fill="#fff"/>
<path d="M517.9 430H523.1M517.9 439H523.1" stroke="#1c1c1c" stroke-width="1.7" fill="none"/>
<circle cx="520.5" cy="434.5" r="2.2" stroke="#1c1c1c" stroke-width="1" fill="#fff"/>
<path d="M518 462.5H523L520.5 467L523 471.5H518L520.5 467z" stroke="#1c1c1c" stroke-width="0.9" fill="#fff"/>
<path d="M517.9 462.5H523.1M517.9 471.5H523.1" stroke="#1c1c1c" stroke-width="1.7" fill="none"/>
<circle cx="520.5" cy="467" r="2.2" stroke="#1c1c1c" stroke-width="1" fill="#fff"/>
<path d="M520.500 429.500V431M520.500 462.500V463.500M520.500 471V483H541.300V489" stroke="#1c1c1c" stroke-width="1" fill="none"/>
<rect x="526.3" y="412.5" width="12.5" height="4.3" stroke="#1c1c1c" stroke-width="1.2" fill="#fff"/>
<text x="532.55" y="415.9" font-size="3.6" fill="#1c1c1c" stroke="none" text-anchor="middle">D1</text>
<text x="531.05" y="420.6" font-size="3.2" fill="#1c1c1c" stroke="none" text-anchor="middle">1/2&quot;</text>
<path d="M528 416.8L521.5 431.5" stroke="#1c1c1c" stroke-width="0.8"/>
<rect x="525.8" y="458.8" width="12.5" height="4.5" stroke="#1c1c1c" stroke-width="1.2" fill="#fff"/>
<text x="532.05" y="462.4" font-size="3.6" fill="#1c1c1c" stroke="none" text-anchor="middle">D2</text>
<text x="530.55" y="467.1" font-size="3.2" fill="#1c1c1c" stroke="none" text-anchor="middle">1/2&quot;</text>
<path d="M526 463L522.5 465" stroke="#1c1c1c" stroke-width="0.8"/>
<rect x="473.8" y="472.5" width="23.7" height="11.8" stroke="#444" stroke-width="1" fill="#fff"/>
<text font-size="9" fill="#444" stroke="none" text-anchor="middle" transform="translate(485.65 481.64) scale(0.82 1)">FIL1</text>
<path d="M497 472.5L506 462.8" stroke="#1c1c1c" stroke-width="0.9"/>
<text x="504" y="443.3" font-size="2.8" fill="#1c1c1c" stroke="none">25</text>
<circle cx="541" cy="378" r="4.8" stroke="#1c1c1c" stroke-width="1" fill="#fff"/>
<text font-size="5.4" fill="#1c1c1c" stroke="none" text-anchor="middle" transform="translate(541 379.94) scale(0.85 1)">PI</text>
<path d="M538 388.25L544 392.75V388.25L538 392.75z" stroke="#1c1c1c" stroke-width="0.9" fill="#fff"/>
<path d="M541 387.1V393.9M539.4 387.1H542.6" stroke="#1c1c1c" stroke-width="0.9" fill="none"/>
<circle cx="541" cy="390.5" r="0.9" stroke="#1c1c1c" stroke-width="0.6" fill="#1c1c1c"/>
<path d="M541 382.800V387M541 394V439" stroke="#444" stroke-width="0.9" fill="none"/>
<rect x="518.8" y="367.5" width="12.2" height="4.5" stroke="#1c1c1c" stroke-width="1.2" fill="#fff"/>
<text x="524.9" y="371.1" font-size="3.6" fill="#1c1c1c" stroke="none" text-anchor="middle">M4</text>
<rect x="518.8" y="378.8" width="12.2" height="4.2" stroke="#1c1c1c" stroke-width="1.2" fill="#fff"/>
<text x="524.9" y="382.1" font-size="3.6" fill="#1c1c1c" stroke="none" text-anchor="middle">M3</text>
<path d="M531 370L537 375" stroke="#1c1c1c" stroke-width="0.8"/>
<path d="M531 381L538.5 389" stroke="#1c1c1c" stroke-width="0.8"/>
<path d="M537.500 489.500L541.300 493.500L545.100 489.500" stroke="#1c1c1c" stroke-width="1" fill="none"/>
<path d="M541.300 493.500V695.300H1299.500" stroke="#222" stroke-width="1" fill="none"/>
<path d="M535.5 435.8H553.5M533.5 442.2H551.5" stroke="#1c1c1c" stroke-width="1.1" fill="none"/>
<path d="M535 442.2L538.4 435.8M539.2 442.2L542.6 435.8M543.4 442.2L546.8 435.8M547.6 442.2L551 435.8" stroke="#1c1c1c" stroke-width="1.5" fill="none"/>
<path d="M551.300 418.300V460M551.300 418.300H574.500M551.300 460H574.500" stroke="#1c1c1c" stroke-width="1" fill="none"/>
<path d="M597.500 418.300H631.300V460H597.500M631.300 439H657.500" stroke="#1c1c1c" stroke-width="1" fill="none"/>
<path d="M572.500 418.300V433.300H600V418.300M572.500 460V444.500H600V460" stroke="#1c1c1c" stroke-width="1" fill="none"/>
<circle cx="586" cy="418.3" r="11.6" stroke="#1c1c1c" stroke-width="1.1" fill="#fff"/>
<path d="M580.2 412.9l6.200 5.400-6.200 5.400M585.7 412.9l6.200 5.400-6.200 5.400M590.6 407.8L597.4 418.3L588 429.5" stroke="#1c1c1c" stroke-width="1" fill="none"/>
<circle cx="586" cy="459.7" r="11.6" stroke="#1c1c1c" stroke-width="1.1" fill="#fff"/>
<path d="M580.2 454.3l6.200 5.400-6.200 5.400M585.7 454.3l6.200 5.400-6.200 5.400M590.6 449.2L597.4 459.7L588 470.9" stroke="#1c1c1c" stroke-width="1" fill="none"/>
<path d="M553.5 415.8V420.8L558 418.3L562.5 420.8V415.8L558 418.3z" stroke="#1c1c1c" stroke-width="0.9" fill="#fff"/>
<path d="M553.5 415.7V420.9M562.5 415.7V420.9" stroke="#1c1c1c" stroke-width="1.7" fill="none"/>
<circle cx="558" cy="418.3" r="2.2" stroke="#1c1c1c" stroke-width="1" fill="#fff"/>
<path d="M553.5 457.5V462.5L558 460L562.5 462.5V457.5L558 460z" stroke="#1c1c1c" stroke-width="0.9" fill="#fff"/>
<path d="M553.5 457.4V462.6M562.5 457.4V462.6" stroke="#1c1c1c" stroke-width="1.7" fill="none"/>
<circle cx="558" cy="460" r="2.2" stroke="#1c1c1c" stroke-width="1" fill="#fff"/>
<path d="M583 431.05L589 435.55V431.05L583 435.55z" stroke="#1c1c1c" stroke-width="0.9" fill="#fff"/>
<path d="M583 442.25L589 446.75V442.25L583 446.75z" stroke="#1c1c1c" stroke-width="0.9" fill="#fff"/>
<path d="M586 433.300V436.500M586 444.500V441" stroke="#1c1c1c" stroke-width="0.9" fill="none"/>
<rect x="602.9" y="415.9" width="9.2" height="4.8" stroke="#1c1c1c" stroke-width="1.1" fill="#fff"/>
<path d="M602.9 415.9L612.1 420.7" stroke="#1c1c1c" stroke-width="1"/>
<path d="M616.8 415.8V420.8L621.3 418.3L625.8 420.8V415.8L621.3 418.3z" stroke="#1c1c1c" stroke-width="0.9" fill="#fff"/>
<path d="M616.8 415.7V420.9M625.8 415.7V420.9" stroke="#1c1c1c" stroke-width="1.7" fill="none"/>
<circle cx="621.3" cy="418.3" r="2.2" stroke="#1c1c1c" stroke-width="1" fill="#fff"/>
<rect x="602.9" y="457.6" width="9.2" height="4.8" stroke="#1c1c1c" stroke-width="1.1" fill="#fff"/>
<path d="M602.9 457.6L612.1 462.4" stroke="#1c1c1c" stroke-width="1"/>
<path d="M616.8 457.5V462.5L621.3 460L625.8 462.5V457.5L621.3 460z" stroke="#1c1c1c" stroke-width="0.9" fill="#fff"/>
<path d="M616.8 457.4V462.6M625.8 457.4V462.6" stroke="#1c1c1c" stroke-width="1.7" fill="none"/>
<circle cx="621.3" cy="460" r="2.2" stroke="#1c1c1c" stroke-width="1" fill="#fff"/>
<rect x="543.8" y="405.8" width="12" height="4.2" stroke="#1c1c1c" stroke-width="1.2" fill="#fff"/>
<text x="549.8" y="409.1" font-size="3.6" fill="#1c1c1c" stroke="none" text-anchor="middle">F2</text>
<text x="548.3" y="413.8" font-size="3.2" fill="#1c1c1c" stroke="none" text-anchor="middle">25</text>
<path d="M553 410L557 415.5" stroke="#1c1c1c" stroke-width="0.8"/>
<rect x="544.5" y="466.3" width="12" height="4.2" stroke="#1c1c1c" stroke-width="1.2" fill="#fff"/>
<text x="550.5" y="469.6" font-size="3.6" fill="#1c1c1c" stroke="none" text-anchor="middle">F3</text>
<text x="549" y="474.3" font-size="3.2" fill="#1c1c1c" stroke="none" text-anchor="middle">25</text>
<path d="M553 466.3L557 462.5" stroke="#1c1c1c" stroke-width="0.8"/>
<rect x="606.8" y="400.8" width="12.5" height="4.2" stroke="#1c1c1c" stroke-width="1.2" fill="#fff"/>
<text x="613.05" y="404.1" font-size="3.6" fill="#1c1c1c" stroke="none" text-anchor="middle">F4</text>
<text x="611.55" y="408.8" font-size="3.2" fill="#1c1c1c" stroke="none" text-anchor="middle">1&quot;</text>
<path d="M609 405L607 415.5" stroke="#1c1c1c" stroke-width="0.8"/>
<rect x="622.5" y="400.8" width="12" height="4.2" stroke="#1c1c1c" stroke-width="1.2" fill="#fff"/>
<text x="628.5" y="404.1" font-size="3.6" fill="#1c1c1c" stroke="none" text-anchor="middle">F6</text>
<text x="627" y="408.8" font-size="3.2" fill="#1c1c1c" stroke="none" text-anchor="middle">25</text>
<path d="M625 405L622 415.5" stroke="#1c1c1c" stroke-width="0.8"/>
<rect x="604.3" y="466.3" width="12" height="4.2" stroke="#1c1c1c" stroke-width="1.2" fill="#fff"/>
<text x="610.3" y="469.6" font-size="3.6" fill="#1c1c1c" stroke="none" text-anchor="middle">F5</text>
<text x="608.8" y="474.3" font-size="3.2" fill="#1c1c1c" stroke="none" text-anchor="middle">1&quot;</text>
<path d="M609 466.3L607.5 462.5" stroke="#1c1c1c" stroke-width="0.8"/>
<rect x="621.8" y="466.3" width="12.7" height="4.2" stroke="#1c1c1c" stroke-width="1.2" fill="#fff"/>
<text x="628.15" y="469.6" font-size="3.6" fill="#1c1c1c" stroke="none" text-anchor="middle">F7</text>
<text x="626.65" y="474.3" font-size="3.2" fill="#1c1c1c" stroke="none" text-anchor="middle">25</text>
<path d="M625 466.3L622 462.5" stroke="#1c1c1c" stroke-width="0.8"/>
<circle cx="586" cy="396.8" r="4.6" stroke="#1c1c1c" stroke-width="1" fill="#fff"/>
<text x="586" y="398.82" font-size="5.6" fill="#1c1c1c" stroke="none" text-anchor="middle">M</text>
<circle cx="586" cy="480.8" r="4.6" stroke="#1c1c1c" stroke-width="1" fill="#fff"/>
<text x="586" y="482.82" font-size="5.6" fill="#1c1c1c" stroke="none" text-anchor="middle">M</text>
<path d="M586 401.4L586 406.7" stroke="#1c1c1c" stroke-width="0.9"/>
<path d="M586 476.2L586 471.3" stroke="#1c1c1c" stroke-width="0.9"/>
<rect x="571.3" y="382.8" width="12.5" height="4.2" stroke="#1c1c1c" stroke-width="1.2" fill="#fff"/>
<text x="577.55" y="386.1" font-size="3.6" fill="#1c1c1c" stroke="none" text-anchor="middle">MM1</text>
<path d="M580 387L584 392.5" stroke="#1c1c1c" stroke-width="0.8"/>
<rect x="567.5" y="490" width="12" height="4.3" stroke="#1c1c1c" stroke-width="1.2" fill="#fff"/>
<text x="573.5" y="493.4" font-size="3.6" fill="#1c1c1c" stroke="none" text-anchor="middle">MM2</text>
<path d="M577 490L583 484.5" stroke="#1c1c1c" stroke-width="0.8"/>
<rect x="593" y="374.5" width="23.5" height="11.5" stroke="#444" stroke-width="1" fill="#fff"/>
<text font-size="9" fill="#444" stroke="none" text-anchor="middle" transform="translate(604.75 383.49) scale(0.82 1)">SP1</text>
<path d="M606 386L592.5 408" stroke="#1c1c1c" stroke-width="0.9"/>
<rect x="596.8" y="480.8" width="23.7" height="11.5" stroke="#444" stroke-width="1" fill="#fff"/>
<text font-size="9" fill="#444" stroke="none" text-anchor="middle" transform="translate(608.65 489.79) scale(0.82 1)">SP2</text>
<path d="M603 480.8L593 469" stroke="#1c1c1c" stroke-width="0.9"/>
<path d="M565.800 352V480.800M565.800 396.800H581.400M565.800 480.800H581.400" stroke="#6a6a6a" stroke-width="0.9" fill="none" stroke-dasharray="4 1.500 1.500 1.500"/>
<path d="M565.800 352H582.500" stroke="#1c1c1c" stroke-width="1.2" fill="none" stroke-dasharray="5 2"/>
<path d="M595.500 352H637.500V439" stroke="#333" stroke-width="1" fill="none"/>
<circle cx="589" cy="352" r="6.5" stroke="#1c1c1c" stroke-width="1" fill="#fff"/>
<text font-size="5" fill="#1c1c1c" stroke="none" text-anchor="middle" transform="translate(589 353.8) scale(0.85 1)">PT</text>
<circle cx="598.5" cy="331.3" r="5" stroke="#1c1c1c" stroke-width="1" fill="#fff"/>
<text font-size="5.6" fill="#1c1c1c" stroke="none" text-anchor="middle" transform="translate(598.5 333.32) scale(0.85 1)">PI</text>
<path d="M598.5 336.3L598.5 352" stroke="#1c1c1c" stroke-width="0.9"/>
<rect x="607.4" y="349.6" width="9.2" height="4.8" stroke="#1c1c1c" stroke-width="1.1" fill="#fff"/>
<path d="M607.4 349.6L616.6 354.4" stroke="#1c1c1c" stroke-width="1"/>
<path d="M623 349.75L629 354.25V349.75L623 354.25z" stroke="#1c1c1c" stroke-width="0.9" fill="#fff"/>
<path d="M626 348.6V355.4M624.4 348.6H627.6" stroke="#1c1c1c" stroke-width="0.9" fill="none"/>
<circle cx="626" cy="352" r="0.9" stroke="#1c1c1c" stroke-width="0.6" fill="#1c1c1c"/>
<rect x="577.5" y="321.8" width="12" height="4.5" stroke="#1c1c1c" stroke-width="1.2" fill="#fff"/>
<text x="583.5" y="325.4" font-size="3.6" fill="#1c1c1c" stroke="none" text-anchor="middle">M7</text>
<path d="M589.5 325L594.5 328.5" stroke="#1c1c1c" stroke-width="0.8"/>
<rect x="568.3" y="337.5" width="12.2" height="4.8" stroke="#1c1c1c" stroke-width="1.2" fill="#fff"/>
<text x="574.4" y="341.4" font-size="3.6" fill="#1c1c1c" stroke="none" text-anchor="middle">M8</text>
<path d="M580.5 341L584.5 347" stroke="#1c1c1c" stroke-width="0.8"/>
<rect x="612" y="337.5" width="12.5" height="4.8" stroke="#1c1c1c" stroke-width="1.2" fill="#fff"/>
<text x="618.25" y="341.4" font-size="3.6" fill="#1c1c1c" stroke="none" text-anchor="middle">F6</text>
<path d="M615 342.3L612 349.5" stroke="#1c1c1c" stroke-width="0.8"/>
<rect x="628" y="337.5" width="13.5" height="4.8" stroke="#1c1c1c" stroke-width="1.2" fill="#fff"/>
<text x="634.75" y="341.4" font-size="3.6" fill="#1c1c1c" stroke="none" text-anchor="middle">M5</text>
<path d="M631 342.3L627 348.5" stroke="#1c1c1c" stroke-width="0.8"/>
<path d="M634.8 435.8H653.5M632.8 442.2H651.5" stroke="#1c1c1c" stroke-width="1.1" fill="none"/>
<path d="M634.3 442.2L637.7 435.8M638.5 442.2L641.9 435.8M642.7 442.2L646.1 435.8M646.9 442.2L650.3 435.8" stroke="#1c1c1c" stroke-width="1.5" fill="none"/>
<rect x="578.8" y="507" width="23.7" height="11.5" stroke="#444" stroke-width="1" fill="#fff"/>
<text font-size="9" fill="#444" stroke="none" text-anchor="middle" transform="translate(590.65 515.99) scale(0.82 1)">PCV1</text>
<text x="592.5" y="526" font-size="7.6" fill="#444" stroke="none" textLength="8" lengthAdjust="spacingAndGlyphs">20</text>
<path d="M582 518.5L594 537" stroke="#1c1c1c" stroke-width="0.9"/>
<rect x="590.5" y="537" width="14.5" height="13.5" stroke="#1c1c1c" stroke-width="1.1" fill="#fff"/>
<path d="M597 537V533.500H608.500V543.800M594 541H602M594 541l2-1.200v2.400z" stroke="#1c1c1c" stroke-width="0.9" fill="none"/>
<path d="M594 552h9l-8 2h8l-7 2h7M598.800 550.500V552" stroke="#1c1c1c" stroke-width="1.1" fill="none"/>
<path d="M572.5 541.3V546.3L577 543.8L581.5 546.3V541.3L577 543.8z" stroke="#1c1c1c" stroke-width="0.9" fill="#fff"/>
<path d="M572.5 541.2V546.4M581.5 541.2V546.4" stroke="#1c1c1c" stroke-width="1.7" fill="none"/>
<circle cx="577" cy="543.8" r="2.2" stroke="#1c1c1c" stroke-width="1" fill="#fff"/>
<path d="M613 541.3V546.3L617.5 543.8L622 546.3V541.3L617.5 543.8z" stroke="#1c1c1c" stroke-width="0.9" fill="#fff"/>
<path d="M613 541.2V546.4M622 541.2V546.4" stroke="#1c1c1c" stroke-width="1.7" fill="none"/>
<circle cx="617.5" cy="543.8" r="2.2" stroke="#1c1c1c" stroke-width="1" fill="#fff"/>
<path d="M567 543.800V565.800H628.800V543.800" stroke="#1c1c1c" stroke-width="1.1" fill="none"/>
<path d="M598 563.3V568.3L602.5 565.8L607 568.3V563.3L602.5 565.8z" stroke="#1c1c1c" stroke-width="0.9" fill="#fff"/>
<path d="M598 563.2V568.4M607 563.2V568.4" stroke="#1c1c1c" stroke-width="1.7" fill="none"/>
<circle cx="602.5" cy="565.8" r="2.2" stroke="#1c1c1c" stroke-width="1" fill="#fff"/>
<rect x="560" y="527.5" width="12.5" height="4.3" stroke="#1c1c1c" stroke-width="1.2" fill="#fff"/>
<text x="566.25" y="530.9" font-size="3.6" fill="#1c1c1c" stroke="none" text-anchor="middle">F9</text>
<text x="564.75" y="535.6" font-size="3.2" fill="#1c1c1c" stroke="none" text-anchor="middle">20</text>
<path d="M570 531.8L576 541" stroke="#1c1c1c" stroke-width="0.8"/>
<rect x="612" y="527.5" width="12.5" height="4.3" stroke="#1c1c1c" stroke-width="1.2" fill="#fff"/>
<text x="618.25" y="530.9" font-size="3.6" fill="#1c1c1c" stroke="none" text-anchor="middle">F8</text>
<text x="616.75" y="535.6" font-size="3.2" fill="#1c1c1c" stroke="none" text-anchor="middle">20</text>
<path d="M622 531.8L618 541" stroke="#1c1c1c" stroke-width="0.8"/>
<rect x="609.5" y="575.8" width="13" height="4.2" stroke="#1c1c1c" stroke-width="1.2" fill="#fff"/>
<text x="616" y="579.1" font-size="3.6" fill="#1c1c1c" stroke="none" text-anchor="middle">F10</text>
<text x="614.5" y="583.8" font-size="3.2" fill="#1c1c1c" stroke="none" text-anchor="middle">20</text>
<path d="M610 575.8L604 568.5" stroke="#1c1c1c" stroke-width="0.8"/>
<path d="M539.1 543.8L543.5 543.8" stroke="#fff" stroke-width="2.2"/>
<path d="M539.1 543.8A2.2 2.2 0 0 1 543.5 543.8" stroke="#1c1c1c" stroke-width="1" fill="none"/>
<path d="M657.500 417.500V455M657.500 417.500H681.300M657.500 455H728.300V417.500H704.500M728.300 439H733.300" stroke="#333" stroke-width="1" fill="none"/>
<path d="M673.6 455L678 455" stroke="#fff" stroke-width="2.2"/>
<path d="M673.6 455A2.2 2.2 0 0 1 678 455" stroke="#1c1c1c" stroke-width="1" fill="none"/>
<path d="M675 372V432.500M675 372H710.800V400" stroke="#6a6a6a" stroke-width="0.9" fill="none" stroke-dasharray="4 1.500 1.500 1.500"/>
<path d="M675.800 432.500V710M675.800 432.500H681.300" stroke="#333" stroke-width="1.1" fill="none"/>
<rect x="681.3" y="400.5" width="23.2" height="34.5" stroke="#1c1c1c" stroke-width="1.1" fill="#fff"/>
<rect x="686.8" y="394.5" width="12" height="6" stroke="#1c1c1c" stroke-width="1" fill="#fff"/>
<path d="M681.300 406.300H704.500M681.300 429.300H704.500" stroke="#444" stroke-width="1.1" fill="none" stroke-dasharray="6 2"/>
<circle cx="692.5" cy="417.5" r="6" stroke="#1c1c1c" stroke-width="1" fill="#fff"/>
<path d="M703.800 400.500V435" stroke="#1c1c1c" stroke-width="1.2" fill="none"/>
<path d="M665 415V420L669.5 417.5L674 420V415L669.5 417.5z" stroke="#1c1c1c" stroke-width="0.9" fill="#fff"/>
<path d="M665 414.9V420.1M674 414.9V420.1" stroke="#1c1c1c" stroke-width="1.7" fill="none"/>
<circle cx="669.5" cy="417.5" r="2.2" stroke="#1c1c1c" stroke-width="1" fill="#fff"/>
<path d="M710.5 415V420L715 417.5L719.5 420V415L715 417.5z" stroke="#1c1c1c" stroke-width="0.9" fill="#fff"/>
<path d="M710.5 414.9V420.1M719.5 414.9V420.1" stroke="#1c1c1c" stroke-width="1.7" fill="none"/>
<circle cx="715" cy="417.5" r="2.2" stroke="#1c1c1c" stroke-width="1" fill="#fff"/>
<path d="M688 452.5V457.5L692.5 455L697 457.5V452.5L692.5 455z" stroke="#1c1c1c" stroke-width="0.9" fill="#fff"/>
<path d="M688 452.4V457.6M697 452.4V457.6" stroke="#1c1c1c" stroke-width="1.7" fill="none"/>
<circle cx="692.5" cy="455" r="2.2" stroke="#1c1c1c" stroke-width="1" fill="#fff"/>
<rect x="653" y="400.8" width="12" height="4.2" stroke="#1c1c1c" stroke-width="1.2" fill="#fff"/>
<text x="659" y="404.1" font-size="3.6" fill="#1c1c1c" stroke="none" text-anchor="middle">F11</text>
<text x="657.5" y="408.8" font-size="3.2" fill="#1c1c1c" stroke="none" text-anchor="middle">20</text>
<path d="M662 405L668 414.5" stroke="#1c1c1c" stroke-width="0.8"/>
<rect x="717.5" y="402" width="12" height="4.3" stroke="#1c1c1c" stroke-width="1.2" fill="#fff"/>
<text x="723.5" y="405.4" font-size="3.6" fill="#1c1c1c" stroke="none" text-anchor="middle">F12</text>
<text x="722" y="410.1" font-size="3.2" fill="#1c1c1c" stroke="none" text-anchor="middle">20</text>
<path d="M719 406.3L716 414.5" stroke="#1c1c1c" stroke-width="0.8"/>
<rect x="699.5" y="465" width="13" height="4.3" stroke="#1c1c1c" stroke-width="1.2" fill="#fff"/>
<text x="706" y="468.4" font-size="3.6" fill="#1c1c1c" stroke="none" text-anchor="middle">F13</text>
<text x="704.5" y="473.1" font-size="3.2" fill="#1c1c1c" stroke="none" text-anchor="middle">20</text>
<path d="M700 465L694 458" stroke="#1c1c1c" stroke-width="0.8"/>
<circle cx="692.5" cy="339.5" r="6" stroke="#444" stroke-width="1" fill="#fff" stroke-dasharray="2 1"/>
<text font-size="4.2" fill="#444" stroke="none" text-anchor="middle" transform="translate(692.5 341.01) scale(0.85 1)">DPA</text>
<circle cx="692.5" cy="355.8" r="6" stroke="#1c1c1c" stroke-width="1" fill="#fff"/>
<text font-size="4.2" fill="#1c1c1c" stroke="none" text-anchor="middle" transform="translate(692.5 357.31) scale(0.85 1)">DPS</text>
<circle cx="692.5" cy="372" r="6" stroke="#1c1c1c" stroke-width="1" fill="#fff"/>
<text font-size="4.2" fill="#1c1c1c" stroke="none" text-anchor="middle" transform="translate(692.5 373.51) scale(0.85 1)">DPI</text>
<path d="M692.500 345.500V349.800M692.500 361.800V366" stroke="#1c1c1c" stroke-width="0.9" fill="none"/>
<rect x="719" y="372.5" width="23.5" height="11.5" stroke="#1c1c1c" stroke-width="1" fill="#fff"/>
<text font-size="9" fill="#1c1c1c" stroke="none" text-anchor="middle" transform="translate(730.75 381.49) scale(0.82 1)">AF1</text>
<path d="M720 384L704.5 406" stroke="#1c1c1c" stroke-width="0.9"/>
<path d="M673.6 695.3L678 695.3" stroke="#fff" stroke-width="2.2"/>
<path d="M673.6 695.3A2.2 2.2 0 0 1 678 695.3" stroke="#1c1c1c" stroke-width="1" fill="none"/>
<path d="M733.300 439H843" stroke="#333" stroke-width="1" fill="none"/>
<path d="M733.300 439V467.500H803.800V439" stroke="#333" stroke-width="1" fill="none"/>
<circle cx="768.3" cy="439.2" r="11.5" stroke="#1c1c1c" stroke-width="1.1" fill="#fff"/>
<path d="M758.500 434.500q9.800 4 19.600 0M758.500 444q9.800 -4 19.600 0" stroke="#1c1c1c" stroke-width="0.9" fill="none"/>
<circle cx="768.3" cy="417.5" r="6.3" stroke="#1c1c1c" stroke-width="1" fill="#fff"/>
<text font-size="6" fill="#1c1c1c" stroke="none" text-anchor="middle" transform="translate(768.3 419.66) scale(0.85 1)">FI</text>
<path d="M768.3 423.8L768.3 427.7" stroke="#1c1c1c" stroke-width="0.9"/>
<rect x="736.8" y="393" width="28.7" height="11.5" stroke="#444" stroke-width="1" fill="#fff"/>
<text font-size="9" fill="#444" stroke="none" text-anchor="middle" transform="translate(751.15 401.99) scale(0.82 1)">FLOW1</text>
<text x="740" y="413.8" font-size="7.6" fill="#444" stroke="none" textLength="8" lengthAdjust="spacingAndGlyphs">20</text>
<path d="M751 404.5L763 429" stroke="#1c1c1c" stroke-width="0.9"/>
<path d="M742.3 436.5V441.5L746.8 439L751.3 441.5V436.5L746.8 439z" stroke="#1c1c1c" stroke-width="0.9" fill="#fff"/>
<path d="M742.3 436.4V441.6M751.3 436.4V441.6" stroke="#1c1c1c" stroke-width="1.7" fill="none"/>
<circle cx="746.8" cy="439" r="2.2" stroke="#1c1c1c" stroke-width="1" fill="#fff"/>
<path d="M785.5 436.5V441.5L790 439L794.5 441.5V436.5L790 439z" stroke="#1c1c1c" stroke-width="0.9" fill="#fff"/>
<path d="M785.5 436.4V441.6M794.5 436.4V441.6" stroke="#1c1c1c" stroke-width="1.7" fill="none"/>
<circle cx="790" cy="439" r="2.2" stroke="#1c1c1c" stroke-width="1" fill="#fff"/>
<rect x="732.5" y="425" width="12" height="4.3" stroke="#1c1c1c" stroke-width="1.2" fill="#fff"/>
<text x="738.5" y="428.4" font-size="3.6" fill="#1c1c1c" stroke="none" text-anchor="middle">F14</text>
<text x="737" y="433.1" font-size="3.2" fill="#1c1c1c" stroke="none" text-anchor="middle">20</text>
<path d="M742 429.3L746 436.5" stroke="#1c1c1c" stroke-width="0.8"/>
<rect x="791.8" y="425" width="12" height="4.3" stroke="#1c1c1c" stroke-width="1.2" fill="#fff"/>
<text x="797.8" y="428.4" font-size="3.6" fill="#1c1c1c" stroke="none" text-anchor="middle">F15</text>
<text x="796.3" y="433.1" font-size="3.2" fill="#1c1c1c" stroke="none" text-anchor="middle">20</text>
<path d="M794 429.3L791 436.5" stroke="#1c1c1c" stroke-width="0.8"/>
<path d="M741.8 464.3H760.5M739.8 470.7H758.5" stroke="#1c1c1c" stroke-width="1.1" fill="none"/>
<path d="M741.3 470.7L744.7 464.3M745.5 470.7L748.9 464.3M749.7 470.7L753.1 464.3M753.9 470.7L757.3 464.3" stroke="#1c1c1c" stroke-width="1.5" fill="none"/>
<path d="M763.8 465V470L768.3 467.5L772.8 470V465L768.3 467.5z" stroke="#1c1c1c" stroke-width="0.9" fill="#fff"/>
<path d="M763.8 464.9V470.1M772.8 464.9V470.1" stroke="#1c1c1c" stroke-width="1.7" fill="none"/>
<circle cx="768.3" cy="467.5" r="2.2" stroke="#1c1c1c" stroke-width="1" fill="#fff"/>
<rect x="769.5" y="478" width="12.3" height="4.3" stroke="#1c1c1c" stroke-width="1.2" fill="#fff"/>
<text x="775.65" y="481.4" font-size="3.6" fill="#1c1c1c" stroke="none" text-anchor="middle">F16</text>
<text x="774.15" y="486.1" font-size="3.2" fill="#1c1c1c" stroke="none" text-anchor="middle">20</text>
<path d="M772 478L769 470.5" stroke="#1c1c1c" stroke-width="0.8"/>
<circle cx="811.3" cy="418" r="5" stroke="#1c1c1c" stroke-width="1" fill="#fff"/>
<text font-size="5.6" fill="#1c1c1c" stroke="none" text-anchor="middle" transform="translate(811.3 420.02) scale(0.85 1)">TI</text>
<path d="M811.3 423L811.3 439" stroke="#555" stroke-width="0.9"/>
<rect x="791.3" y="404.7" width="13.2" height="4.5" stroke="#1c1c1c" stroke-width="1.2" fill="#fff"/>
<text x="797.9" y="408.3" font-size="3.6" fill="#1c1c1c" stroke="none" text-anchor="middle">M9</text>
<path d="M804.5 408L808 414" stroke="#1c1c1c" stroke-width="0.8"/>
<circle cx="824.7" cy="411.3" r="5" stroke="#1c1c1c" stroke-width="1" fill="#fff"/>
<text font-size="5.6" fill="#1c1c1c" stroke="none" text-anchor="middle" transform="translate(824.7 413.32) scale(0.85 1)">TI</text>
<path d="M824.700 416.300V422H843" stroke="#1c1c1c" stroke-width="0.9" fill="none"/>
<rect x="806.7" y="395.8" width="13" height="4.5" stroke="#1c1c1c" stroke-width="1.2" fill="#fff"/>
<text x="813.2" y="399.4" font-size="3.6" fill="#1c1c1c" stroke="none" text-anchor="middle">M10</text>
<path d="M819 400.3L822 407" stroke="#1c1c1c" stroke-width="0.8"/>
<path d="M808.5 436H826.8M806.5 442.4H824.8" stroke="#1c1c1c" stroke-width="1.1" fill="none"/>
<path d="M808 442.4L811.4 436M812.2 442.4L815.6 436M816.4 442.4L819.8 436M820.6 442.4L824 436" stroke="#1c1c1c" stroke-width="1.5" fill="none"/>
<path d="M831.700 337.500V710M831.700 337.500H848.800V374" stroke="#444" stroke-width="1" fill="none"/>
<path d="M846.3 340.5H851.3L848.8 345L851.3 349.5H846.3L848.8 345z" stroke="#1c1c1c" stroke-width="0.9" fill="#fff"/>
<path d="M846.2 340.5H851.4M846.2 349.5H851.4" stroke="#1c1c1c" stroke-width="1.7" fill="none"/>
<circle cx="848.8" cy="345" r="2.2" stroke="#1c1c1c" stroke-width="1" fill="#fff"/>
<rect x="841.3" y="325.5" width="12.4" height="4.5" stroke="#1c1c1c" stroke-width="1.2" fill="#fff"/>
<text x="847.5" y="329.1" font-size="3.6" fill="#1c1c1c" stroke="none" text-anchor="middle">A1</text>
<text x="846" y="333.8" font-size="3.2" fill="#1c1c1c" stroke="none" text-anchor="middle">20</text>
<path d="M852 330L849.5 341" stroke="#1c1c1c" stroke-width="0.8"/>
<circle cx="823" cy="349.7" r="5.3" stroke="#1c1c1c" stroke-width="1" fill="#fff"/>
<text font-size="5.8" fill="#1c1c1c" stroke="none" text-anchor="middle" transform="translate(823 351.79) scale(0.85 1)">PI</text>
<rect x="820.6" y="360.1" width="4.8" height="9.2" stroke="#1c1c1c" stroke-width="1.1" fill="#fff"/>
<path d="M820.6 369.3L825.4 360.1" stroke="#1c1c1c" stroke-width="1"/>
<path d="M820 374.45L826 378.95V374.45L820 378.95z" stroke="#1c1c1c" stroke-width="0.9" fill="#fff"/>
<path d="M823 373.3V380.1M821.4 373.3H824.6" stroke="#1c1c1c" stroke-width="0.9" fill="none"/>
<circle cx="823" cy="376.7" r="0.9" stroke="#1c1c1c" stroke-width="0.6" fill="#1c1c1c"/>
<path d="M823 355V360M823 369.300V373.500M823 380V390.800H843" stroke="#444" stroke-width="0.9" fill="none"/>
<path d="M829.5 390.8L833.9 390.8" stroke="#fff" stroke-width="2.2"/>
<path d="M829.5 390.8A2.2 2.2 0 0 1 833.9 390.8" stroke="#1c1c1c" stroke-width="1" fill="none"/>
<rect x="798.3" y="341.7" width="13.4" height="4.6" stroke="#1c1c1c" stroke-width="1.2" fill="#fff"/>
<text x="805" y="345.4" font-size="3.6" fill="#1c1c1c" stroke="none" text-anchor="middle">M11</text>
<path d="M811.7 344L818 347.5" stroke="#1c1c1c" stroke-width="0.8"/>
<rect x="798.3" y="354.7" width="13.4" height="4.5" stroke="#1c1c1c" stroke-width="1.2" fill="#fff"/>
<text x="805" y="358.3" font-size="3.6" fill="#1c1c1c" stroke="none" text-anchor="middle">M12</text>
<path d="M811.7 357L820.5 362" stroke="#1c1c1c" stroke-width="0.8"/>
<rect x="798.3" y="368" width="13.4" height="4.5" stroke="#1c1c1c" stroke-width="1.2" fill="#fff"/>
<text x="805" y="371.6" font-size="3.6" fill="#1c1c1c" stroke="none" text-anchor="middle">M13</text>
<path d="M811.7 370L819.5 375.5" stroke="#1c1c1c" stroke-width="0.8"/>
<path d="M829.5 422L833.9 422" stroke="#fff" stroke-width="2.2"/>
<path d="M829.5 422A2.2 2.2 0 0 1 833.9 422" stroke="#1c1c1c" stroke-width="1" fill="none"/>
<path d="M829.5 439.2L833.9 439.2" stroke="#fff" stroke-width="2.2"/>
<path d="M829.5 439.2A2.2 2.2 0 0 1 833.9 439.2" stroke="#1c1c1c" stroke-width="1" fill="none"/>
<path d="M813.300 446.300H843M813.300 460H843M843 446.300L836.500 453.200L843 460" stroke="#1c1c1c" stroke-width="1" fill="none"/>
<path d="M843 380Q843 374 853 372.500Q871 367 889 372.500Q899.300 374 899.300 380V458.300Q899.300 464.500 889 466Q871 471.500 853 466Q843 464.500 843 458.300z" stroke="#1c1c1c" stroke-width="1.2" fill="#fff"/>
<path d="M839.6 392.5L839.6 437" stroke="#1c1c1c" stroke-width="1.1"/>
<path d="M839.6 396L843 393M839.6 399.7L843 396.7M839.6 403.4L843 400.4M839.6 407.1L843 404.1M839.6 410.8L843 407.8M839.6 414.5L843 411.5M839.6 418.2L843 415.2M839.6 421.9L843 418.9M839.6 425.6L843 422.6M839.6 429.3L843 426.3M839.6 433L843 430M839.6 436.7L843 433.7" stroke="#1c1c1c" stroke-width="1.3" fill="none"/>
<path d="M903 392.5L903 445" stroke="#1c1c1c" stroke-width="1.1"/>
<path d="M903 396L899.3 393M903 399.7L899.3 396.7M903 403.4L899.3 400.4M903 407.1L899.3 404.1M903 410.8L899.3 407.8M903 414.5L899.3 411.5M903 418.2L899.3 415.2M903 421.9L899.3 418.9M903 425.6L899.3 422.6M903 429.3L899.3 426.3M903 433L899.3 430M903 436.7L899.3 433.7M903 440.4L899.3 437.4M903 444.1L899.3 441.1" stroke="#1c1c1c" stroke-width="1.3" fill="none"/>
<text x="845" y="441.8" font-size="7" fill="#1c1c1c" stroke="none" textLength="7.5" lengthAdjust="spacingAndGlyphs">A1</text>
<text x="889.5" y="450" font-size="7" fill="#1c1c1c" stroke="none" textLength="7.5" lengthAdjust="spacingAndGlyphs">A2</text>
<text x="889.5" y="387.7" font-size="7" fill="#1c1c1c" stroke="none" textLength="7.5" lengthAdjust="spacingAndGlyphs">A3</text>
<rect x="834.5" y="482.5" width="23" height="12" stroke="#1c1c1c" stroke-width="1" fill="#fff"/>
<text font-size="9" fill="#1c1c1c" stroke="none" text-anchor="middle" transform="translate(846 491.74) scale(0.82 1)">T1</text>
<path d="M850 482.5L856 469" stroke="#1c1c1c" stroke-width="0.9"/>
<circle cx="871.2" cy="331.2" r="6.5" stroke="#444" stroke-width="1" fill="#fff" stroke-dasharray="2 1"/>
<text font-size="4.2" fill="#444" stroke="none" text-anchor="middle" transform="translate(871.2 332.71) scale(0.85 1)">LAL</text>
<circle cx="871.2" cy="347" r="6.5" stroke="#1c1c1c" stroke-width="1" fill="#fff"/>
<text font-size="5" fill="#1c1c1c" stroke="none" text-anchor="middle" transform="translate(871.2 348.8) scale(0.85 1)">LS</text>
<path d="M871.200 337.700V340.500M871.200 353.500V369" stroke="#444" stroke-width="0.9" fill="none"/>
<rect x="883" y="332.5" width="12.3" height="4.5" stroke="#1c1c1c" stroke-width="1.2" fill="#fff"/>
<text x="889.15" y="336.1" font-size="3.6" fill="#1c1c1c" stroke="none" text-anchor="middle">M33</text>
<path d="M884 337L877 344" stroke="#1c1c1c" stroke-width="0.8"/>
<path d="M871.300 469.300V520.500" stroke="#444" stroke-width="1" fill="none"/>
<path d="M868.8 478H873.8L871.3 482.5L873.8 487H868.8L871.3 482.5z" stroke="#1c1c1c" stroke-width="0.9" fill="#fff"/>
<path d="M868.7 478H873.9M868.7 487H873.9" stroke="#1c1c1c" stroke-width="1.7" fill="none"/>
<circle cx="871.3" cy="482.5" r="2.2" stroke="#1c1c1c" stroke-width="1" fill="#fff"/>
<rect x="878.8" y="486.3" width="12" height="4.2" stroke="#1c1c1c" stroke-width="1.2" fill="#fff"/>
<text x="884.8" y="489.6" font-size="3.6" fill="#1c1c1c" stroke="none" text-anchor="middle">D1</text>
<text x="883.3" y="494.3" font-size="3.2" fill="#1c1c1c" stroke="none" text-anchor="middle">20</text>
<path d="M878.8 487L874.5 484" stroke="#1c1c1c" stroke-width="0.8"/>
<path d="M871.300 520.500V533" stroke="#333" stroke-width="2.2" fill="none"/>
<path d="M871.300 520.500H904.300V447.500" stroke="#333" stroke-width="1" fill="none"/>
<path d="M867.500 533L871.300 537L875.100 533" stroke="#1c1c1c" stroke-width="1" fill="none"/>
<path d="M871.300 537V695.300" stroke="#444" stroke-width="1" fill="none"/>
<path d="M902.05 485.8L906.55 491.8H902.05L906.55 485.8z" stroke="#1c1c1c" stroke-width="0.9" fill="#fff"/>
<path d="M904.300 488.800l3.500-3.500" stroke="#1c1c1c" stroke-width="1.2" fill="none"/>
<rect x="888" y="501.3" width="12.5" height="4.2" stroke="#1c1c1c" stroke-width="1.2" fill="#fff"/>
<text x="894.25" y="504.6" font-size="3.6" fill="#1c1c1c" stroke="none" text-anchor="middle">M14</text>
<text x="892.75" y="509.3" font-size="3.2" fill="#1c1c1c" stroke="none" text-anchor="middle">1/2&quot;</text>
<path d="M899 501.3L903 492.5" stroke="#1c1c1c" stroke-width="0.8"/>
<path d="M906.300 198.400V385.300H899.300" stroke="#444" stroke-width="1" fill="none"/>
<path d="M906.300 309.500H1120.300V198.400" stroke="#333" stroke-width="1" fill="none"/>
<path d="M903.9 306.3L908.7 312.7H903.9L908.7 306.3z" stroke="#1c1c1c" stroke-width="0.9" fill="#fff"/>
<path d="M906.300 309.500H901M901 306.500V312.500" stroke="#1c1c1c" stroke-width="1" fill="none"/>
<circle cx="906.3" cy="309.5" r="1.2" stroke="#1c1c1c" stroke-width="0.8" fill="#1c1c1c"/>
<rect x="875.8" y="285.3" width="23.7" height="11.5" stroke="#1c1c1c" stroke-width="1" fill="#fff"/>
<text font-size="9" fill="#1c1c1c" stroke="none" text-anchor="middle" transform="translate(887.65 294.29) scale(0.82 1)">COV2</text>
<text x="883" y="304" font-size="7.6" fill="#444" stroke="none" textLength="8" lengthAdjust="spacingAndGlyphs">25</text>
<path d="M898 296.8L905 306" stroke="#1c1c1c" stroke-width="0.9"/>
<circle cx="891.8" cy="318.4" r="4.6" stroke="#444" stroke-width="1" fill="#fff"/>
<text font-size="4.6" fill="#444" stroke="none" text-anchor="middle" transform="translate(891.8 320.06) scale(0.85 1)">GS</text>
<path d="M896.400 318.400H900.500V312.500" stroke="#1c1c1c" stroke-width="0.9" fill="none"/>
<path d="M903.1 324.8V342.8M909.5 322.8V340.8" stroke="#1c1c1c" stroke-width="1.1" fill="none"/>
<path d="M903.1 327.7L909.5 324.3M903.1 331.9L909.5 328.5M903.1 336.1L909.5 332.7M903.1 340.3L909.5 336.9" stroke="#1c1c1c" stroke-width="1.5" fill="none"/>
<rect x="903.9" y="354.2" width="4.8" height="9.2" stroke="#1c1c1c" stroke-width="1.1" fill="#fff"/>
<path d="M903.9 363.4L908.7 354.2" stroke="#1c1c1c" stroke-width="1"/>
<rect x="886.5" y="345.8" width="13" height="4.5" stroke="#1c1c1c" stroke-width="1.2" fill="#fff"/>
<text x="893" y="349.4" font-size="3.6" fill="#1c1c1c" stroke="none" text-anchor="middle">F17</text>
<text x="891.5" y="354.1" font-size="3.2" fill="#1c1c1c" stroke="none" text-anchor="middle">1&quot;</text>
<path d="M899.5 350L904 354.5" stroke="#1c1c1c" stroke-width="0.8"/>
<circle cx="927.5" cy="282.8" r="5" stroke="#1c1c1c" stroke-width="1" fill="#fff"/>
<text font-size="5.6" fill="#1c1c1c" stroke="none" text-anchor="middle" transform="translate(927.5 284.82) scale(0.85 1)">TI</text>
<path d="M927.5 287.8L927.5 309.5" stroke="#1c1c1c" stroke-width="0.9"/>
<rect x="908.8" y="273.8" width="12" height="4.5" stroke="#1c1c1c" stroke-width="1.2" fill="#fff"/>
<text x="914.8" y="277.4" font-size="3.6" fill="#1c1c1c" stroke="none" text-anchor="middle">M35</text>
<path d="M920.8 277L924 279.5" stroke="#1c1c1c" stroke-width="0.8"/>
<path d="M949 306.3H967.3M947 312.7H965.3" stroke="#1c1c1c" stroke-width="1.1" fill="none"/>
<path d="M948.5 312.7L951.9 306.3M952.7 312.7L956.1 306.3M956.9 312.7L960.3 306.3M961.1 312.7L964.5 306.3" stroke="#1c1c1c" stroke-width="1.5" fill="none"/>
<path d="M968.800 198.400V271.800H1017.500M992 198.400V260H1017.500" stroke="#444" stroke-width="1" fill="none"/>
<path d="M1017.300 254.300H1075.500A11.900 11.900 0 0 1 1075.500 278.100H1017.300z" stroke="#1c1c1c" stroke-width="1.2" fill="#fff"/>
<path d="M1028.500 254.300V278.100M1017.300 266.200H1028.500M1028.500 260H1070A6 6 0 0 1 1070 271.800H1028.500" stroke="#1c1c1c" stroke-width="1" fill="none"/>
<rect x="994.2" y="257.4" width="9.2" height="4.8" stroke="#1c1c1c" stroke-width="1.1" fill="#fff"/>
<path d="M994.2 257.4L1003.4 262.2" stroke="#1c1c1c" stroke-width="1"/>
<rect x="994.2" y="269.4" width="9.2" height="4.8" stroke="#1c1c1c" stroke-width="1.1" fill="#fff"/>
<path d="M994.2 269.4L1003.4 274.2" stroke="#1c1c1c" stroke-width="1"/>
<rect x="977.5" y="247.5" width="13.3" height="4.8" stroke="#1c1c1c" stroke-width="1.2" fill="#fff"/>
<text x="984.15" y="251.4" font-size="3.6" fill="#1c1c1c" stroke="none" text-anchor="middle">H1</text>
<text x="982.65" y="256.1" font-size="3.2" fill="#1c1c1c" stroke="none" text-anchor="middle">65</text>
<path d="M989 252.3L996 257.5" stroke="#1c1c1c" stroke-width="0.8"/>
<rect x="979.5" y="280.8" width="13" height="4.5" stroke="#1c1c1c" stroke-width="1.2" fill="#fff"/>
<text x="986" y="284.4" font-size="3.6" fill="#1c1c1c" stroke="none" text-anchor="middle">H2</text>
<text x="984.5" y="289.1" font-size="3.2" fill="#1c1c1c" stroke="none" text-anchor="middle">65</text>
<path d="M990 280.8L996 274.5" stroke="#1c1c1c" stroke-width="0.8"/>
<circle cx="1009.3" cy="250.5" r="5" stroke="#1c1c1c" stroke-width="1" fill="#fff"/>
<text font-size="5.6" fill="#1c1c1c" stroke="none" text-anchor="middle" transform="translate(1009.3 252.52) scale(0.85 1)">TI</text>
<path d="M1009.3 255.5L1009.3 260" stroke="#1c1c1c" stroke-width="0.9"/>
<rect x="1006.5" y="236.5" width="12.3" height="4" stroke="#1c1c1c" stroke-width="1.2" fill="#fff"/>
<text x="1012.65" y="239.6" font-size="3.6" fill="#1c1c1c" stroke="none" text-anchor="middle">M32</text>
<path d="M1015 240.5L1012 246" stroke="#1c1c1c" stroke-width="0.8"/>
<circle cx="1009.8" cy="281.8" r="5" stroke="#1c1c1c" stroke-width="1" fill="#fff"/>
<text font-size="5.6" fill="#1c1c1c" stroke="none" text-anchor="middle" transform="translate(1009.8 283.82) scale(0.85 1)">TI</text>
<path d="M1009.8 276.8L1009.8 271.8" stroke="#1c1c1c" stroke-width="0.9"/>
<rect x="995.8" y="292" width="12.5" height="4.3" stroke="#1c1c1c" stroke-width="1.2" fill="#fff"/>
<text x="1002.05" y="295.4" font-size="3.6" fill="#1c1c1c" stroke="none" text-anchor="middle">M36</text>
<path d="M1004 292L1007.5 286.5" stroke="#1c1c1c" stroke-width="0.8"/>
<rect x="1055.5" y="239" width="23.3" height="11.8" stroke="#444" stroke-width="1" fill="#fff"/>
<text font-size="9" fill="#444" stroke="none" text-anchor="middle" transform="translate(1067.15 248.14) scale(0.82 1)">CL1</text>
<path d="M1066 250.8L1063 254.3" stroke="#1c1c1c" stroke-width="0.9"/>
<path d="M1046.300 254.300V235.800H1120.300" stroke="#444" stroke-width="1" fill="none"/>
<path d="M1043.8 241.5H1048.8L1046.3 246L1048.8 250.5H1043.8L1046.3 246z" stroke="#1c1c1c" stroke-width="0.9" fill="#fff"/>
<path d="M1043.7 241.5H1048.9M1043.7 250.5H1048.9" stroke="#1c1c1c" stroke-width="1.7" fill="none"/>
<circle cx="1046.3" cy="246" r="2.2" stroke="#1c1c1c" stroke-width="1" fill="#fff"/>
<rect x="1026.5" y="234" width="12" height="4.3" stroke="#1c1c1c" stroke-width="1.2" fill="#fff"/>
<text x="1032.5" y="237.4" font-size="3.6" fill="#1c1c1c" stroke="none" text-anchor="middle">F30</text>
<text x="1031" y="242.1" font-size="3.2" fill="#1c1c1c" stroke="none" text-anchor="middle">35</text>
<path d="M1038.5 238L1044.5 243.5" stroke="#1c1c1c" stroke-width="0.8"/>
<circle cx="1100.8" cy="221.5" r="5" stroke="#1c1c1c" stroke-width="1" fill="#fff"/>
<text font-size="5.6" fill="#1c1c1c" stroke="none" text-anchor="middle" transform="translate(1100.8 223.52) scale(0.85 1)">TI</text>
<path d="M1100.8 226.5L1100.8 235.8" stroke="#1c1c1c" stroke-width="0.9"/>
<rect x="1081" y="209.8" width="13.5" height="4.5" stroke="#1c1c1c" stroke-width="1.2" fill="#fff"/>
<text x="1087.75" y="213.4" font-size="3.6" fill="#1c1c1c" stroke="none" text-anchor="middle">M34</text>
<path d="M1094.5 213.5L1097.5 217.5" stroke="#1c1c1c" stroke-width="0.8"/>
<path d="M1087.400 260H1099V309.500M1075.500 278.100V285.500M1078.500 285.500H1096.300V309.500" stroke="#444" stroke-width="1" fill="none"/>
<path d="M1096.5 265.5H1101.5L1099 270L1101.5 274.5H1096.5L1099 270z" stroke="#1c1c1c" stroke-width="0.9" fill="#fff"/>
<path d="M1096.4 265.5H1101.6M1096.4 274.5H1101.6" stroke="#1c1c1c" stroke-width="1.7" fill="none"/>
<circle cx="1099" cy="270" r="2.2" stroke="#1c1c1c" stroke-width="1" fill="#fff"/>
<rect x="1103.8" y="265.8" width="13" height="4.5" stroke="#1c1c1c" stroke-width="1.2" fill="#fff"/>
<text x="1110.3" y="269.4" font-size="3.6" fill="#1c1c1c" stroke="none" text-anchor="middle">A4</text>
<text x="1108.8" y="274.1" font-size="3.2" fill="#1c1c1c" stroke="none" text-anchor="middle">1/2&quot;</text>
<path d="M1103.8 268L1101.5 269.5" stroke="#1c1c1c" stroke-width="0.8"/>
<path d="M1117.1 268V286.5M1123.5 266V284.5" stroke="#1c1c1c" stroke-width="1.1" fill="none"/>
<path d="M1117.1 270.9L1123.5 267.5M1117.1 275.1L1123.5 271.7M1117.1 279.3L1123.5 275.9M1117.1 283.5L1123.5 280.1" stroke="#1c1c1c" stroke-width="1.5" fill="none"/>
<path d="M1072 283.25L1078 287.75V283.25L1072 287.75z" stroke="#1c1c1c" stroke-width="0.9" fill="#fff"/>
<path d="M1075 282.1V288.9M1073.4 282.1H1076.6" stroke="#1c1c1c" stroke-width="0.9" fill="none"/>
<circle cx="1075" cy="285.5" r="0.9" stroke="#1c1c1c" stroke-width="0.6" fill="#1c1c1c"/>
<rect x="1083.3" y="277.5" width="12.2" height="4.5" stroke="#1c1c1c" stroke-width="1.2" fill="#fff"/>
<text x="1089.4" y="281.1" font-size="3.6" fill="#1c1c1c" stroke="none" text-anchor="middle">M06</text>
<text x="1087.9" y="285.8" font-size="3.2" fill="#1c1c1c" stroke="none" text-anchor="middle">1/2&quot;</text>
<path d="M1083.3 281L1078 284" stroke="#1c1c1c" stroke-width="0.8"/>
<path d="M1034.300 278.100V315H1091.300M1046.300 278.100V309.500" stroke="#333" stroke-width="1.1" fill="none"/>
<path d="M1031.8 283H1036.8L1034.3 287.5L1036.8 292H1031.8L1034.3 287.5z" stroke="#1c1c1c" stroke-width="0.9" fill="#fff"/>
<path d="M1031.7 283H1036.9M1031.7 292H1036.9" stroke="#1c1c1c" stroke-width="1.7" fill="none"/>
<circle cx="1034.3" cy="287.5" r="2.2" stroke="#1c1c1c" stroke-width="1" fill="#fff"/>
<rect x="1017.5" y="293" width="12" height="4.3" stroke="#1c1c1c" stroke-width="1.2" fill="#fff"/>
<text x="1023.5" y="296.4" font-size="3.6" fill="#1c1c1c" stroke="none" text-anchor="middle">DP</text>
<text x="1022" y="301.1" font-size="3.2" fill="#1c1c1c" stroke="none" text-anchor="middle">1/2&quot;</text>
<path d="M1028 293L1032.5 290" stroke="#1c1c1c" stroke-width="0.8"/>
<rect x="1043.9" y="282.9" width="4.8" height="9.2" stroke="#1c1c1c" stroke-width="1.1" fill="#fff"/>
<path d="M1043.9 292.1L1048.7 282.9" stroke="#1c1c1c" stroke-width="1"/>
<path d="M1043.8 296.3H1048.8L1046.3 300.8L1048.8 305.3H1043.8L1046.3 300.8z" stroke="#1c1c1c" stroke-width="0.9" fill="#fff"/>
<path d="M1043.7 296.3H1048.9M1043.7 305.3H1048.9" stroke="#1c1c1c" stroke-width="1.7" fill="none"/>
<circle cx="1046.3" cy="300.8" r="2.2" stroke="#1c1c1c" stroke-width="1" fill="#fff"/>
<rect x="1053.8" y="282.5" width="11.7" height="4.5" stroke="#1c1c1c" stroke-width="1.2" fill="#fff"/>
<text x="1059.65" y="286.1" font-size="3.6" fill="#1c1c1c" stroke="none" text-anchor="middle">F29</text>
<text x="1058.15" y="290.8" font-size="3.2" fill="#1c1c1c" stroke="none" text-anchor="middle">1&quot;</text>
<path d="M1053.8 285L1049 287" stroke="#1c1c1c" stroke-width="0.8"/>
<rect x="1053.8" y="294.3" width="11.7" height="4.2" stroke="#1c1c1c" stroke-width="1.2" fill="#fff"/>
<text x="1059.65" y="297.6" font-size="3.6" fill="#1c1c1c" stroke="none" text-anchor="middle">F28</text>
<text x="1058.15" y="302.3" font-size="3.2" fill="#1c1c1c" stroke="none" text-anchor="middle">35</text>
<path d="M1053.8 297L1049 300" stroke="#1c1c1c" stroke-width="0.8"/>
<path d="M1068 307V312L1072.5 309.5L1077 312V307L1072.5 309.5z" stroke="#1c1c1c" stroke-width="0.9" fill="#fff"/>
<path d="M1068 306.9V312.1M1077 306.9V312.1" stroke="#1c1c1c" stroke-width="1.7" fill="none"/>
<circle cx="1072.5" cy="309.5" r="2.2" stroke="#1c1c1c" stroke-width="1" fill="#fff"/>
<rect x="1074.5" y="298.5" width="12" height="4.5" stroke="#1c1c1c" stroke-width="1.2" fill="#fff"/>
<text x="1080.5" y="302.1" font-size="3.6" fill="#1c1c1c" stroke="none" text-anchor="middle">F06</text>
<text x="1079" y="306.8" font-size="3.2" fill="#1c1c1c" stroke="none" text-anchor="middle">25</text>
<path d="M1078 303L1074 307" stroke="#1c1c1c" stroke-width="0.8"/>
<path d="M1032.1 309.5L1036.5 309.5" stroke="#fff" stroke-width="2.2"/>
<path d="M1032.1 309.5A2.2 2.2 0 0 1 1036.5 309.5" stroke="#1c1c1c" stroke-width="1" fill="none"/>
<path d="M1094.3 309.5L1100.7 309.5" stroke="#fff" stroke-width="2.2"/>
<path d="M1094.3 309.5A3.2 3.2 0 0 1 1100.7 309.5" stroke="#1c1c1c" stroke-width="1" fill="none"/>
<path d="M1094.500 309.500V322H1091L1097 328L1103 322H1099.500V309.500" stroke="#1c1c1c" stroke-width="1" fill="#fff"/>
<path d="M1097 328V358H1240.700V399.400" stroke="#333" stroke-width="1.1" fill="none"/>
<path d="M923.300 447.500V365H958.500M993.500 365H1025.500V447.500" stroke="#333" stroke-width="1.1" fill="none"/>
<path d="M899.300 447.500H933M933 427V468.300M933 427H952.800M933 468.300H952.800" stroke="#333" stroke-width="1.1" fill="none"/>
<path d="M976 427H1014.500V468.300H976M1014.500 447.500H1059.500" stroke="#333" stroke-width="1.1" fill="none"/>
<path d="M928.300 447.500V510.500H1019.500V447.500" stroke="#444" stroke-width="1" fill="none"/>
<path d="M950 427V440.800H977.500V427M950 468.300V453.300H977.500V468.300" stroke="#1c1c1c" stroke-width="1" fill="none"/>
<circle cx="964.3" cy="427" r="11.6" stroke="#1c1c1c" stroke-width="1.1" fill="#fff"/>
<path d="M958.5 421.6l6.200 5.400-6.200 5.400M964 421.6l6.200 5.400-6.200 5.400M968.9 416.5L975.7 427L966.3 438.2" stroke="#1c1c1c" stroke-width="1" fill="none"/>
<circle cx="964.3" cy="468.2" r="11.6" stroke="#1c1c1c" stroke-width="1.1" fill="#fff"/>
<path d="M958.5 462.8l6.200 5.400-6.200 5.400M964 462.8l6.200 5.400-6.200 5.400M968.9 457.7L975.7 468.2L966.3 479.4" stroke="#1c1c1c" stroke-width="1" fill="none"/>
<path d="M935.5 424.5V429.5L940 427L944.5 429.5V424.5L940 427z" stroke="#1c1c1c" stroke-width="0.9" fill="#fff"/>
<path d="M935.5 424.4V429.6M944.5 424.4V429.6" stroke="#1c1c1c" stroke-width="1.7" fill="none"/>
<circle cx="940" cy="427" r="2.2" stroke="#1c1c1c" stroke-width="1" fill="#fff"/>
<path d="M935.5 465.8V470.8L940 468.3L944.5 470.8V465.8L940 468.3z" stroke="#1c1c1c" stroke-width="0.9" fill="#fff"/>
<path d="M935.5 465.7V470.9M944.5 465.7V470.9" stroke="#1c1c1c" stroke-width="1.7" fill="none"/>
<circle cx="940" cy="468.3" r="2.2" stroke="#1c1c1c" stroke-width="1" fill="#fff"/>
<path d="M961.3 438.55L967.3 443.05V438.55L961.3 443.05z" stroke="#1c1c1c" stroke-width="0.9" fill="#fff"/>
<path d="M961.3 451.05L967.3 455.55V451.05L961.3 455.55z" stroke="#1c1c1c" stroke-width="0.9" fill="#fff"/>
<path d="M964.300 440.800V444M964.300 453.300V450" stroke="#1c1c1c" stroke-width="0.9" fill="none"/>
<rect x="988.4" y="424.6" width="9.2" height="4.8" stroke="#1c1c1c" stroke-width="1.1" fill="#fff"/>
<path d="M988.4 424.6L997.6 429.4" stroke="#1c1c1c" stroke-width="1"/>
<path d="M1002.3 424.5V429.5L1006.8 427L1011.3 429.5V424.5L1006.8 427z" stroke="#1c1c1c" stroke-width="0.9" fill="#fff"/>
<path d="M1002.3 424.4V429.6M1011.3 424.4V429.6" stroke="#1c1c1c" stroke-width="1.7" fill="none"/>
<circle cx="1006.8" cy="427" r="2.2" stroke="#1c1c1c" stroke-width="1" fill="#fff"/>
<rect x="988.4" y="465.9" width="9.2" height="4.8" stroke="#1c1c1c" stroke-width="1.1" fill="#fff"/>
<path d="M988.4 465.9L997.6 470.7" stroke="#1c1c1c" stroke-width="1"/>
<path d="M1002.3 465.8V470.8L1006.8 468.3L1011.3 470.8V465.8L1006.8 468.3z" stroke="#1c1c1c" stroke-width="0.9" fill="#fff"/>
<path d="M1002.3 465.7V470.9M1011.3 465.7V470.9" stroke="#1c1c1c" stroke-width="1.7" fill="none"/>
<circle cx="1006.8" cy="468.3" r="2.2" stroke="#1c1c1c" stroke-width="1" fill="#fff"/>
<path d="M964.3 508V513L968.8 510.5L973.3 513V508L968.8 510.5z" stroke="#1c1c1c" stroke-width="0.9" fill="#fff"/>
<path d="M964.3 507.9V513.1M973.3 507.9V513.1" stroke="#1c1c1c" stroke-width="1.7" fill="none"/>
<circle cx="968.8" cy="510.5" r="2.2" stroke="#1c1c1c" stroke-width="1" fill="#fff"/>
<path d="M913 444.3H932.3M911 450.7H930.3" stroke="#1c1c1c" stroke-width="1.1" fill="none"/>
<path d="M912.5 450.7L915.9 444.3M916.7 450.7L920.1 444.3M920.9 450.7L924.3 444.3M925.1 450.7L928.5 444.3" stroke="#1c1c1c" stroke-width="1.5" fill="none"/>
<path d="M1024 444.3H1042.3M1022 450.7H1040.3" stroke="#1c1c1c" stroke-width="1.1" fill="none"/>
<path d="M1023.5 450.7L1026.9 444.3M1027.7 450.7L1031.1 444.3M1031.9 450.7L1035.3 444.3M1036.1 450.7L1039.5 444.3" stroke="#1c1c1c" stroke-width="1.5" fill="none"/>
<circle cx="964.3" cy="405" r="4.6" stroke="#1c1c1c" stroke-width="1" fill="#fff"/>
<text x="964.3" y="407.02" font-size="5.6" fill="#1c1c1c" stroke="none" text-anchor="middle">M</text>
<circle cx="964.3" cy="489" r="4.6" stroke="#1c1c1c" stroke-width="1" fill="#fff"/>
<text x="964.3" y="491.02" font-size="5.6" fill="#1c1c1c" stroke="none" text-anchor="middle">M</text>
<path d="M964.3 409.6L964.3 415.4" stroke="#1c1c1c" stroke-width="0.9"/>
<path d="M964.3 484.4L964.3 479.8" stroke="#1c1c1c" stroke-width="0.9"/>
<path d="M965 371.500V381H987V371.500M983.800 381V489M968.900 405H983.800M968.900 489H983.800" stroke="#444" stroke-width="0.9" fill="none" stroke-dasharray="4 1.500 1.500 1.500"/>
<circle cx="965" cy="365" r="6.5" stroke="#1c1c1c" stroke-width="1" fill="#fff"/>
<text font-size="5" fill="#1c1c1c" stroke="none" text-anchor="middle" transform="translate(965 366.8) scale(0.85 1)">PT</text>
<circle cx="987" cy="365" r="6.5" stroke="#1c1c1c" stroke-width="1" fill="#fff"/>
<text font-size="5" fill="#1c1c1c" stroke="none" text-anchor="middle" transform="translate(987 366.8) scale(0.85 1)">PT</text>
<circle cx="954.5" cy="344" r="5.4" stroke="#1c1c1c" stroke-width="1" fill="#fff"/>
<text font-size="5.8" fill="#1c1c1c" stroke="none" text-anchor="middle" transform="translate(954.5 346.09) scale(0.85 1)">PI</text>
<circle cx="998" cy="344" r="5.4" stroke="#1c1c1c" stroke-width="1" fill="#fff"/>
<text font-size="5.8" fill="#1c1c1c" stroke="none" text-anchor="middle" transform="translate(998 346.09) scale(0.85 1)">PI</text>
<path d="M954.5 349.4L954.5 365" stroke="#1c1c1c" stroke-width="0.9"/>
<path d="M998 349.4L998 365" stroke="#1c1c1c" stroke-width="0.9"/>
<path d="M932.5 362.75L938.5 367.25V362.75L932.5 367.25z" stroke="#1c1c1c" stroke-width="0.9" fill="#fff"/>
<path d="M935.5 361.6V368.4M933.9 361.6H937.1" stroke="#1c1c1c" stroke-width="0.9" fill="none"/>
<circle cx="935.5" cy="365" r="0.9" stroke="#1c1c1c" stroke-width="0.6" fill="#1c1c1c"/>
<rect x="942.4" y="362.6" width="9.2" height="4.8" stroke="#1c1c1c" stroke-width="1.1" fill="#fff"/>
<path d="M942.4 362.6L951.6 367.4" stroke="#1c1c1c" stroke-width="1"/>
<rect x="1000.4" y="362.6" width="9.2" height="4.8" stroke="#1c1c1c" stroke-width="1.1" fill="#fff"/>
<path d="M1000.4 362.6L1009.6 367.4" stroke="#1c1c1c" stroke-width="1"/>
<path d="M1014 362.75L1020 367.25V362.75L1014 367.25z" stroke="#1c1c1c" stroke-width="0.9" fill="#fff"/>
<path d="M1017 361.6V368.4M1015.4 361.6H1018.6" stroke="#1c1c1c" stroke-width="0.9" fill="none"/>
<circle cx="1017" cy="365" r="0.9" stroke="#1c1c1c" stroke-width="0.6" fill="#1c1c1c"/>
<rect x="923.3" y="349.8" width="12.2" height="4.2" stroke="#1c1c1c" stroke-width="1.2" fill="#fff"/>
<text x="929.4" y="353.1" font-size="3.6" fill="#1c1c1c" stroke="none" text-anchor="middle">M15</text>
<path d="M926 354L934 362" stroke="#1c1c1c" stroke-width="0.8"/>
<rect x="938.3" y="349.8" width="12.2" height="4.2" stroke="#1c1c1c" stroke-width="1.2" fill="#fff"/>
<text x="944.4" y="353.1" font-size="3.6" fill="#1c1c1c" stroke="none" text-anchor="middle">M16</text>
<path d="M944 354L940 362" stroke="#1c1c1c" stroke-width="0.8"/>
<rect x="962.3" y="347.8" width="13" height="4.2" stroke="#1c1c1c" stroke-width="1.2" fill="#fff"/>
<text x="968.8" y="351.1" font-size="3.6" fill="#1c1c1c" stroke="none" text-anchor="middle">M18</text>
<path d="M970 352L967 358.5" stroke="#1c1c1c" stroke-width="0.8"/>
<rect x="978" y="347.8" width="12.5" height="4.2" stroke="#1c1c1c" stroke-width="1.2" fill="#fff"/>
<text x="984.25" y="351.1" font-size="3.6" fill="#1c1c1c" stroke="none" text-anchor="middle">M20</text>
<path d="M980 352L984 359" stroke="#1c1c1c" stroke-width="0.8"/>
<rect x="1004.5" y="349.8" width="12.5" height="4.2" stroke="#1c1c1c" stroke-width="1.2" fill="#fff"/>
<text x="1010.75" y="353.1" font-size="3.6" fill="#1c1c1c" stroke="none" text-anchor="middle">M30</text>
<path d="M1012 354L1006 362" stroke="#1c1c1c" stroke-width="0.8"/>
<rect x="1022" y="349.8" width="12.5" height="4.2" stroke="#1c1c1c" stroke-width="1.2" fill="#fff"/>
<text x="1028.25" y="353.1" font-size="3.6" fill="#1c1c1c" stroke="none" text-anchor="middle">M31</text>
<path d="M1030 354L1019 363" stroke="#1c1c1c" stroke-width="0.8"/>
<rect x="957.3" y="329" width="13.2" height="4.3" stroke="#1c1c1c" stroke-width="1.2" fill="#fff"/>
<text x="963.9" y="332.4" font-size="3.6" fill="#1c1c1c" stroke="none" text-anchor="middle">M17</text>
<path d="M963 333.3L958 339.5" stroke="#1c1c1c" stroke-width="0.8"/>
<rect x="985.5" y="329" width="13" height="4.3" stroke="#1c1c1c" stroke-width="1.2" fill="#fff"/>
<text x="992" y="332.4" font-size="3.6" fill="#1c1c1c" stroke="none" text-anchor="middle">M21</text>
<path d="M992 333.3L996 339" stroke="#1c1c1c" stroke-width="0.8"/>
<rect x="933.3" y="392.5" width="19.2" height="11.8" stroke="#1c1c1c" stroke-width="1" fill="#fff"/>
<text font-size="9" fill="#1c1c1c" stroke="none" text-anchor="middle" transform="translate(942.9 401.64) scale(0.82 1)">BP1</text>
<path d="M946 404.3L957 418" stroke="#1c1c1c" stroke-width="0.9"/>
<rect x="936.3" y="491.3" width="19.2" height="11.7" stroke="#1c1c1c" stroke-width="1" fill="#fff"/>
<text font-size="9" fill="#1c1c1c" stroke="none" text-anchor="middle" transform="translate(945.9 500.39) scale(0.82 1)">BP2</text>
<path d="M949 491.3L958 477.5" stroke="#1c1c1c" stroke-width="0.9"/>
<rect x="967" y="390" width="12.5" height="4.3" stroke="#1c1c1c" stroke-width="1.2" fill="#fff"/>
<text x="973.25" y="393.4" font-size="3.6" fill="#1c1c1c" stroke="none" text-anchor="middle">MM3</text>
<path d="M972 394.3L968 401.5" stroke="#1c1c1c" stroke-width="0.8"/>
<rect x="967" y="499.3" width="12.5" height="4.2" stroke="#1c1c1c" stroke-width="1.2" fill="#fff"/>
<text x="973.25" y="502.6" font-size="3.6" fill="#1c1c1c" stroke="none" text-anchor="middle">MM4</text>
<path d="M970 499.3L967 493" stroke="#1c1c1c" stroke-width="0.8"/>
<rect x="927.5" y="412.5" width="12" height="4.3" stroke="#1c1c1c" stroke-width="1.2" fill="#fff"/>
<text x="933.5" y="415.9" font-size="3.6" fill="#1c1c1c" stroke="none" text-anchor="middle">F17</text>
<text x="932" y="420.6" font-size="3.2" fill="#1c1c1c" stroke="none" text-anchor="middle">25</text>
<path d="M936 416.8L939.5 424.5" stroke="#1c1c1c" stroke-width="0.8"/>
<rect x="989.5" y="412.5" width="12" height="4.3" stroke="#1c1c1c" stroke-width="1.2" fill="#fff"/>
<text x="995.5" y="415.9" font-size="3.6" fill="#1c1c1c" stroke="none" text-anchor="middle">F19</text>
<text x="994" y="420.6" font-size="3.2" fill="#1c1c1c" stroke="none" text-anchor="middle">1&quot;</text>
<path d="M995 416.8L993 424.5" stroke="#1c1c1c" stroke-width="0.8"/>
<rect x="1007" y="412.5" width="12.5" height="4.3" stroke="#1c1c1c" stroke-width="1.2" fill="#fff"/>
<text x="1013.25" y="415.9" font-size="3.6" fill="#1c1c1c" stroke="none" text-anchor="middle">F21</text>
<text x="1011.75" y="420.6" font-size="3.2" fill="#1c1c1c" stroke="none" text-anchor="middle">25</text>
<path d="M1011 416.8L1007.5 424.5" stroke="#1c1c1c" stroke-width="0.8"/>
<rect x="931.3" y="476.8" width="12" height="4.2" stroke="#1c1c1c" stroke-width="1.2" fill="#fff"/>
<text x="937.3" y="480.1" font-size="3.6" fill="#1c1c1c" stroke="none" text-anchor="middle">F18</text>
<text x="935.8" y="484.8" font-size="3.2" fill="#1c1c1c" stroke="none" text-anchor="middle">25</text>
<path d="M938 476.8L940 471" stroke="#1c1c1c" stroke-width="0.8"/>
<rect x="987.5" y="476.8" width="12" height="4.2" stroke="#1c1c1c" stroke-width="1.2" fill="#fff"/>
<text x="993.5" y="480.1" font-size="3.6" fill="#1c1c1c" stroke="none" text-anchor="middle">F20</text>
<text x="992" y="484.8" font-size="3.2" fill="#1c1c1c" stroke="none" text-anchor="middle">1&quot;</text>
<path d="M995 476.8L993 471" stroke="#1c1c1c" stroke-width="0.8"/>
<rect x="1002.5" y="476.8" width="12.5" height="4.2" stroke="#1c1c1c" stroke-width="1.2" fill="#fff"/>
<text x="1008.75" y="480.1" font-size="3.6" fill="#1c1c1c" stroke="none" text-anchor="middle">F22</text>
<text x="1007.25" y="484.8" font-size="3.2" fill="#1c1c1c" stroke="none" text-anchor="middle">25</text>
<path d="M1010 476.8L1007.5 471" stroke="#1c1c1c" stroke-width="0.8"/>
<rect x="957.5" y="518.8" width="12" height="4.2" stroke="#1c1c1c" stroke-width="1.2" fill="#fff"/>
<text x="963.5" y="522.1" font-size="3.6" fill="#1c1c1c" stroke="none" text-anchor="middle">F23</text>
<text x="962" y="526.8" font-size="3.2" fill="#1c1c1c" stroke="none" text-anchor="middle">25</text>
<path d="M964 518.8L968 513.5" stroke="#1c1c1c" stroke-width="0.8"/>
<circle cx="1031.8" cy="420.8" r="5" stroke="#1c1c1c" stroke-width="1" fill="#fff"/>
<text font-size="5.6" fill="#1c1c1c" stroke="none" text-anchor="middle" transform="translate(1031.8 422.82) scale(0.85 1)">TI</text>
<path d="M1031.8 425.8L1031.8 447.5" stroke="#555" stroke-width="0.9"/>
<rect x="1036.3" y="410.8" width="12.4" height="3.9" stroke="#1c1c1c" stroke-width="1.2" fill="#fff"/>
<text x="1042.5" y="413.8" font-size="3.6" fill="#1c1c1c" stroke="none" text-anchor="middle">M22</text>
<path d="M1040 414.7L1035.5 417.5" stroke="#1c1c1c" stroke-width="0.8"/>
<path d="M1037.500 447.500V537.500H1181.300V447.500" stroke="#444" stroke-width="1" fill="none"/>
<path d="M1027.800 695.300V523.300H1167.500V489" stroke="#444" stroke-width="1" fill="none"/>
<path d="M1114.300 447.500V537.500" stroke="#222" stroke-width="1.1" fill="none"/>
<path d="M1065.300 497.200H1141.300" stroke="#444" stroke-width="1" fill="none"/>
<path d="M1077.200 476.700V511.700H1153.300" stroke="#444" stroke-width="1" fill="none"/>
<path d="M1091.700 489V523.300" stroke="#333" stroke-width="1" fill="none"/>
<path d="M1065.400 476.700V710" stroke="#222" stroke-width="1.2" fill="none"/>
<path d="M1153.300 476.700V710" stroke="#222" stroke-width="1.2" fill="none"/>
<path d="M1035.3 523.3L1039.7 523.3" stroke="#fff" stroke-width="2.2"/>
<path d="M1035.3 523.3A2.2 2.2 0 0 1 1039.7 523.3" stroke="#1c1c1c" stroke-width="1" fill="none"/>
<path d="M1063.2 523.3L1067.6 523.3" stroke="#fff" stroke-width="2.2"/>
<path d="M1063.2 523.3A2.2 2.2 0 0 1 1067.6 523.3" stroke="#1c1c1c" stroke-width="1" fill="none"/>
<path d="M1089.5 523.3L1093.9 523.3" stroke="#fff" stroke-width="2.2"/>
<path d="M1089.5 523.3A2.2 2.2 0 0 1 1093.9 523.3" stroke="#1c1c1c" stroke-width="1" fill="none"/>
<path d="M1112.1 523.3L1116.5 523.3" stroke="#fff" stroke-width="2.2"/>
<path d="M1112.1 523.3A2.2 2.2 0 0 1 1116.5 523.3" stroke="#1c1c1c" stroke-width="1" fill="none"/>
<path d="M1151.1 523.3L1155.5 523.3" stroke="#fff" stroke-width="2.2"/>
<path d="M1151.1 523.3A2.2 2.2 0 0 1 1155.5 523.3" stroke="#1c1c1c" stroke-width="1" fill="none"/>
<path d="M1063.2 537.5L1067.6 537.5" stroke="#fff" stroke-width="2.2"/>
<path d="M1063.2 537.5A2.2 2.2 0 0 1 1067.6 537.5" stroke="#1c1c1c" stroke-width="1" fill="none"/>
<path d="M1151.1 537.5L1155.5 537.5" stroke="#fff" stroke-width="2.2"/>
<path d="M1151.1 537.5A2.2 2.2 0 0 1 1155.5 537.5" stroke="#1c1c1c" stroke-width="1" fill="none"/>
<path d="M1063.2 695.3L1067.6 695.3" stroke="#fff" stroke-width="2.2"/>
<path d="M1063.2 695.3A2.2 2.2 0 0 1 1067.6 695.3" stroke="#1c1c1c" stroke-width="1" fill="none"/>
<path d="M1151.1 695.3L1155.5 695.3" stroke="#fff" stroke-width="2.2"/>
<path d="M1151.1 695.3A2.2 2.2 0 0 1 1155.5 695.3" stroke="#1c1c1c" stroke-width="1" fill="none"/>
<path d="M1048 535V540L1052.5 537.5L1057 540V535L1052.5 537.5z" stroke="#1c1c1c" stroke-width="0.9" fill="#fff"/>
<path d="M1048 534.9V540.1M1057 534.9V540.1" stroke="#1c1c1c" stroke-width="1.7" fill="none"/>
<circle cx="1052.5" cy="537.5" r="2.2" stroke="#1c1c1c" stroke-width="1" fill="#fff"/>
<path d="M1162.3 535V540L1166.8 537.5L1171.3 540V535L1166.8 537.5z" stroke="#1c1c1c" stroke-width="0.9" fill="#fff"/>
<path d="M1162.3 534.9V540.1M1171.3 534.9V540.1" stroke="#1c1c1c" stroke-width="1.7" fill="none"/>
<circle cx="1166.8" cy="537.5" r="2.2" stroke="#1c1c1c" stroke-width="1" fill="#fff"/>
<path d="M1076 534.3H1094.8M1074 540.7H1092.8" stroke="#1c1c1c" stroke-width="1.1" fill="none"/>
<path d="M1075.5 540.7L1078.9 534.3M1079.7 540.7L1083.1 534.3M1083.9 540.7L1087.3 534.3M1088.1 540.7L1091.5 534.3" stroke="#1c1c1c" stroke-width="1.5" fill="none"/>
<path d="M1131 534.3H1150.5M1129 540.7H1148.5" stroke="#1c1c1c" stroke-width="1.1" fill="none"/>
<path d="M1130.5 540.7L1133.9 534.3M1134.7 540.7L1138.1 534.3M1138.9 540.7L1142.3 534.3M1143.1 540.7L1146.5 534.3" stroke="#1c1c1c" stroke-width="1.5" fill="none"/>
<rect x="1038.8" y="546.3" width="12.5" height="4.2" stroke="#1c1c1c" stroke-width="1.2" fill="#fff"/>
<text x="1045.05" y="549.6" font-size="3.6" fill="#1c1c1c" stroke="none" text-anchor="middle">F26</text>
<text x="1043.55" y="554.3" font-size="3.2" fill="#1c1c1c" stroke="none" text-anchor="middle">25</text>
<path d="M1048 546.3L1052 540.5" stroke="#1c1c1c" stroke-width="0.8"/>
<rect x="1162.5" y="545" width="12.5" height="4.3" stroke="#1c1c1c" stroke-width="1.2" fill="#fff"/>
<text x="1168.75" y="548.4" font-size="3.6" fill="#1c1c1c" stroke="none" text-anchor="middle">F29</text>
<text x="1167.25" y="553.1" font-size="3.2" fill="#1c1c1c" stroke="none" text-anchor="middle">25</text>
<path d="M1170 545L1167.5 540.5" stroke="#1c1c1c" stroke-width="0.8"/>
<path d="M1065.3 408V395H1099.3V478" stroke="#555" stroke-width="1" fill="none"/>
<path d="M1071.3 392.5V397.5L1075.8 395L1080.3 397.5V392.5L1075.8 395z" stroke="#1c1c1c" stroke-width="0.9" fill="#fff"/>
<path d="M1071.3 392.4V397.6M1080.3 392.4V397.6" stroke="#1c1c1c" stroke-width="1.7" fill="none"/>
<circle cx="1075.8" cy="395" r="2.2" stroke="#1c1c1c" stroke-width="1" fill="#fff"/>
<path d="M1083.5 447.500H1101.4" stroke="#333" stroke-width="1.1" fill="none"/>
<path d="M1059.4 476.700V417.800A12.050 12.050 0 0 1 1083.5 417.800V476.700z" stroke="#1c1c1c" stroke-width="1.2" fill="#fff"/>
<path d="M1065.3 465.600V424.200A6.200 6.200 0 0 1 1077.7 424.200V465.600" stroke="#1c1c1c" stroke-width="1.1" fill="none"/>
<path d="M1059.4 465.600H1083.5M1071.5 465.600V476.700" stroke="#1c1c1c" stroke-width="1.1" fill="none"/>
<rect x="1089.3" y="372" width="23.2" height="11.5" stroke="#1c1c1c" stroke-width="1" fill="#fff"/>
<text font-size="9" fill="#1c1c1c" stroke="none" text-anchor="middle" transform="translate(1100.9 380.99) scale(0.82 1)">H1</text>
<path d="M1092.6 383.5L1081.2 411" stroke="#1c1c1c" stroke-width="0.9"/>
<rect x="1057.4" y="384.7" width="12" height="3.8" stroke="#1c1c1c" stroke-width="1.2" fill="#fff"/>
<text x="1063.4" y="387.6" font-size="3.6" fill="#1c1c1c" stroke="none" text-anchor="middle">A2</text>
<text x="1061.9" y="392.3" font-size="3.2" fill="#1c1c1c" stroke="none" text-anchor="middle">1/2&quot;</text>
<path d="M1069.4 388L1073.4 392.5" stroke="#1c1c1c" stroke-width="0.8"/>
<path d="M1047.2 445V450L1051.7 447.5L1056.2 450V445L1051.7 447.5z" stroke="#1c1c1c" stroke-width="0.9" fill="#fff"/>
<path d="M1047.2 444.9V450.1M1056.2 444.9V450.1" stroke="#1c1c1c" stroke-width="1.7" fill="none"/>
<circle cx="1051.7" cy="447.5" r="2.2" stroke="#1c1c1c" stroke-width="1" fill="#fff"/>
<path d="M1086.3 445V450L1090.8 447.5L1095.3 450V445L1090.8 447.5z" stroke="#1c1c1c" stroke-width="0.9" fill="#fff"/>
<path d="M1086.3 444.9V450.1M1095.3 444.9V450.1" stroke="#1c1c1c" stroke-width="1.7" fill="none"/>
<circle cx="1090.8" cy="447.5" r="2.2" stroke="#1c1c1c" stroke-width="1" fill="#fff"/>
<path d="M1094.6 447.5L1099 447.5" stroke="#fff" stroke-width="2.2"/>
<path d="M1094.6 447.5A2.2 2.2 0 0 1 1099 447.5" stroke="#1c1c1c" stroke-width="1" fill="none"/>
<rect x="1040.2" y="431.3" width="12.2" height="3.7" stroke="#1c1c1c" stroke-width="1.2" fill="#fff"/>
<text x="1046.3" y="434.1" font-size="3.6" fill="#1c1c1c" stroke="none" text-anchor="middle">F24</text>
<text x="1044.8" y="438.8" font-size="3.2" fill="#1c1c1c" stroke="none" text-anchor="middle">25</text>
<path d="M1049.4 435L1051.4 444.5" stroke="#1c1c1c" stroke-width="0.8"/>
<rect x="1100.7" y="431.3" width="12.5" height="3.7" stroke="#1c1c1c" stroke-width="1.2" fill="#fff"/>
<text x="1106.95" y="434.1" font-size="3.6" fill="#1c1c1c" stroke="none" text-anchor="middle">F25</text>
<text x="1105.45" y="438.8" font-size="3.2" fill="#1c1c1c" stroke="none" text-anchor="middle">25</text>
<path d="M1101.4 435L1092.4 445" stroke="#1c1c1c" stroke-width="0.8"/>
<path d="M1083.5 424.200H1086.9" stroke="#1c1c1c" stroke-width="0.9" fill="none"/>
<path d="M1087.8 422.4L1092 428H1087.8L1092 422.4z" stroke="#1c1c1c" stroke-width="0.9" fill="#fff"/>
<path d="M1086.9 425.200H1089.9M1089.9 425.200l1-4" stroke="#1c1c1c" stroke-width="1.1" fill="none"/>
<path d="M1089.9 428V437L1095.9 440.500" stroke="#444" stroke-width="0.9" fill="none"/>
<rect x="1101.6" y="418" width="12" height="3.7" stroke="#1c1c1c" stroke-width="1.2" fill="#fff"/>
<text x="1107.6" y="420.8" font-size="3.6" fill="#1c1c1c" stroke="none" text-anchor="middle">M24</text>
<text x="1106.1" y="425.5" font-size="3.2" fill="#1c1c1c" stroke="none" text-anchor="middle">1/2&quot;</text>
<path d="M1101.6 420L1092.9 424" stroke="#1c1c1c" stroke-width="0.8"/>
<path d="M1083.5 459.700H1088.7V483M1096.9 447.500V472Q1096.9 478 1094.4 483" stroke="#444" stroke-width="0.9" fill="none"/>
<path d="M1098.9 447.500V473Q1098.9 480 1095.9 485" stroke="#444" stroke-width="0.9" fill="none"/>
<path d="M1086.2 464.7H1091.2L1088.7 469.2L1091.2 473.7H1086.2L1088.7 469.2z" stroke="#1c1c1c" stroke-width="0.9" fill="#fff"/>
<path d="M1086.1 464.7H1091.3M1086.1 473.7H1091.3" stroke="#1c1c1c" stroke-width="1.7" fill="none"/>
<circle cx="1088.7" cy="469.2" r="2.2" stroke="#1c1c1c" stroke-width="1" fill="#fff"/>
<path d="M1085.7 483.300L1091.6 489.500L1097.4 483.300" stroke="#1c1c1c" stroke-width="1.1" fill="none"/>
<rect x="1100.7" y="467.5" width="11.7" height="3.8" stroke="#1c1c1c" stroke-width="1.2" fill="#fff"/>
<text x="1106.55" y="470.4" font-size="3.6" fill="#1c1c1c" stroke="none" text-anchor="middle">D6</text>
<text x="1105.05" y="475.1" font-size="3.2" fill="#1c1c1c" stroke="none" text-anchor="middle">1/2&quot;</text>
<path d="M1100.7 469L1091.4 470" stroke="#1c1c1c" stroke-width="0.8"/>
<path d="M1062.83 483.4L1067.78 490H1062.83L1067.78 483.4z" stroke="#1c1c1c" stroke-width="0.9" fill="#fff"/>
<path d="M1065.3 486.7H1068.9M1068.9 484.7V488.7" stroke="#1c1c1c" stroke-width="0.9" fill="none"/>
<path d="M1074.63 483.4L1079.58 490H1074.63L1079.58 483.4z" stroke="#1c1c1c" stroke-width="0.9" fill="#fff"/>
<path d="M1077.1 486.7H1080.7M1080.7 484.7V488.7" stroke="#1c1c1c" stroke-width="0.9" fill="none"/>
<path d="M1046.9 479.500H1058.4" stroke="#444" stroke-width="0.9" fill="none"/>
<path d="M1049.8 477.55L1055 481.45V477.55L1049.8 481.45z" stroke="#1c1c1c" stroke-width="0.9" fill="#fff"/>
<path d="M1052.4 479.500V476.500" stroke="#1c1c1c" stroke-width="0.9" fill="none"/>
<rect x="1038.6" y="467.8" width="12.5" height="3.9" stroke="#1c1c1c" stroke-width="1.2" fill="#fff"/>
<text x="1044.85" y="470.8" font-size="3.6" fill="#1c1c1c" stroke="none" text-anchor="middle">D5</text>
<text x="1043.35" y="475.5" font-size="3.2" fill="#1c1c1c" stroke="none" text-anchor="middle">1/4&quot;</text>
<rect x="1044.6" y="485" width="12" height="4.2" stroke="#1c1c1c" stroke-width="1.2" fill="#fff"/>
<text x="1050.6" y="488.3" font-size="3.6" fill="#1c1c1c" stroke="none" text-anchor="middle">C1</text>
<text x="1049.1" y="493" font-size="3.2" fill="#1c1c1c" stroke="none" text-anchor="middle">20</text>
<path d="M1056.6 486L1062.4 484.5" stroke="#1c1c1c" stroke-width="0.8"/>
<path d="M1141.5 408V395H1175.5V478" stroke="#555" stroke-width="1" fill="none"/>
<path d="M1147.5 392.5V397.5L1152 395L1156.5 397.5V392.5L1152 395z" stroke="#1c1c1c" stroke-width="0.9" fill="#fff"/>
<path d="M1147.5 392.4V397.6M1156.5 392.4V397.6" stroke="#1c1c1c" stroke-width="1.7" fill="none"/>
<circle cx="1152" cy="395" r="2.2" stroke="#1c1c1c" stroke-width="1" fill="#fff"/>
<path d="M1159.7 447.500H1177.6" stroke="#333" stroke-width="1.1" fill="none"/>
<path d="M1135.6 476.700V417.800A12.050 12.050 0 0 1 1159.7 417.800V476.700z" stroke="#1c1c1c" stroke-width="1.2" fill="#fff"/>
<path d="M1141.5 465.600V424.200A6.200 6.200 0 0 1 1153.9 424.200V465.600" stroke="#1c1c1c" stroke-width="1.1" fill="none"/>
<path d="M1135.6 465.600H1159.7M1147.7 465.600V476.700" stroke="#1c1c1c" stroke-width="1.1" fill="none"/>
<rect x="1165" y="372" width="23.8" height="11.5" stroke="#1c1c1c" stroke-width="1" fill="#fff"/>
<text font-size="9" fill="#1c1c1c" stroke="none" text-anchor="middle" transform="translate(1176.9 380.99) scale(0.82 1)">H2</text>
<path d="M1168.3 383.5L1157.4 411" stroke="#1c1c1c" stroke-width="0.9"/>
<rect x="1133.6" y="384.7" width="12" height="3.8" stroke="#1c1c1c" stroke-width="1.2" fill="#fff"/>
<text x="1139.6" y="387.6" font-size="3.6" fill="#1c1c1c" stroke="none" text-anchor="middle">A3</text>
<text x="1138.1" y="392.3" font-size="3.2" fill="#1c1c1c" stroke="none" text-anchor="middle">1/2&quot;</text>
<path d="M1145.6 388L1149.6 392.5" stroke="#1c1c1c" stroke-width="0.8"/>
<path d="M1123.4 445V450L1127.9 447.5L1132.4 450V445L1127.9 447.5z" stroke="#1c1c1c" stroke-width="0.9" fill="#fff"/>
<path d="M1123.4 444.9V450.1M1132.4 444.9V450.1" stroke="#1c1c1c" stroke-width="1.7" fill="none"/>
<circle cx="1127.9" cy="447.5" r="2.2" stroke="#1c1c1c" stroke-width="1" fill="#fff"/>
<path d="M1162.5 445V450L1167 447.5L1171.5 450V445L1167 447.5z" stroke="#1c1c1c" stroke-width="0.9" fill="#fff"/>
<path d="M1162.5 444.9V450.1M1171.5 444.9V450.1" stroke="#1c1c1c" stroke-width="1.7" fill="none"/>
<circle cx="1167" cy="447.5" r="2.2" stroke="#1c1c1c" stroke-width="1" fill="#fff"/>
<path d="M1170.8 447.5L1175.2 447.5" stroke="#fff" stroke-width="2.2"/>
<path d="M1170.8 447.5A2.2 2.2 0 0 1 1175.2 447.5" stroke="#1c1c1c" stroke-width="1" fill="none"/>
<rect x="1116.4" y="431.3" width="12.2" height="3.7" stroke="#1c1c1c" stroke-width="1.2" fill="#fff"/>
<text x="1122.5" y="434.1" font-size="3.6" fill="#1c1c1c" stroke="none" text-anchor="middle">F27</text>
<text x="1121" y="438.8" font-size="3.2" fill="#1c1c1c" stroke="none" text-anchor="middle">25</text>
<path d="M1125.6 435L1127.6 444.5" stroke="#1c1c1c" stroke-width="0.8"/>
<rect x="1176.9" y="431.3" width="12.5" height="3.7" stroke="#1c1c1c" stroke-width="1.2" fill="#fff"/>
<text x="1183.15" y="434.1" font-size="3.6" fill="#1c1c1c" stroke="none" text-anchor="middle">F28</text>
<text x="1181.65" y="438.8" font-size="3.2" fill="#1c1c1c" stroke="none" text-anchor="middle">25</text>
<path d="M1177.6 435L1168.6 445" stroke="#1c1c1c" stroke-width="0.8"/>
<path d="M1159.7 424.200H1163.1" stroke="#1c1c1c" stroke-width="0.9" fill="none"/>
<path d="M1164 422.4L1168.2 428H1164L1168.2 422.4z" stroke="#1c1c1c" stroke-width="0.9" fill="#fff"/>
<path d="M1163.1 425.200H1166.1M1166.1 425.200l1-4" stroke="#1c1c1c" stroke-width="1.1" fill="none"/>
<path d="M1166.1 428V437L1172.1 440.500" stroke="#444" stroke-width="0.9" fill="none"/>
<rect x="1177.8" y="418" width="12" height="3.7" stroke="#1c1c1c" stroke-width="1.2" fill="#fff"/>
<text x="1183.8" y="420.8" font-size="3.6" fill="#1c1c1c" stroke="none" text-anchor="middle">M25</text>
<text x="1182.3" y="425.5" font-size="3.2" fill="#1c1c1c" stroke="none" text-anchor="middle">1/2&quot;</text>
<path d="M1177.8 420L1169.1 424" stroke="#1c1c1c" stroke-width="0.8"/>
<path d="M1159.7 459.700H1164.9V483M1173.1 447.500V472Q1173.1 478 1170.6 483" stroke="#444" stroke-width="0.9" fill="none"/>
<path d="M1175.1 447.500V473Q1175.1 480 1172.1 485" stroke="#444" stroke-width="0.9" fill="none"/>
<path d="M1162.4 464.7H1167.4L1164.9 469.2L1167.4 473.7H1162.4L1164.9 469.2z" stroke="#1c1c1c" stroke-width="0.9" fill="#fff"/>
<path d="M1162.3 464.7H1167.5M1162.3 473.7H1167.5" stroke="#1c1c1c" stroke-width="1.7" fill="none"/>
<circle cx="1164.9" cy="469.2" r="2.2" stroke="#1c1c1c" stroke-width="1" fill="#fff"/>
<path d="M1161.9 483.300L1167.8 489.500L1173.6 483.300" stroke="#1c1c1c" stroke-width="1.1" fill="none"/>
<rect x="1176.9" y="467.5" width="11.7" height="3.8" stroke="#1c1c1c" stroke-width="1.2" fill="#fff"/>
<text x="1182.75" y="470.4" font-size="3.6" fill="#1c1c1c" stroke="none" text-anchor="middle">D5</text>
<text x="1181.25" y="475.1" font-size="3.2" fill="#1c1c1c" stroke="none" text-anchor="middle">1/2&quot;</text>
<path d="M1176.9 469L1167.6 470" stroke="#1c1c1c" stroke-width="0.8"/>
<path d="M1139.03 483.4L1143.97 490H1139.03L1143.97 483.4z" stroke="#1c1c1c" stroke-width="0.9" fill="#fff"/>
<path d="M1141.5 486.7H1145.1M1145.1 484.7V488.7" stroke="#1c1c1c" stroke-width="0.9" fill="none"/>
<path d="M1150.83 483.4L1155.77 490H1150.83L1155.77 483.4z" stroke="#1c1c1c" stroke-width="0.9" fill="#fff"/>
<path d="M1153.3 486.7H1156.9M1156.9 484.7V488.7" stroke="#1c1c1c" stroke-width="0.9" fill="none"/>
<path d="M1123.1 479.500H1134.6" stroke="#444" stroke-width="0.9" fill="none"/>
<path d="M1126 477.55L1131.2 481.45V477.55L1126 481.45z" stroke="#1c1c1c" stroke-width="0.9" fill="#fff"/>
<path d="M1128.6 479.500V476.500" stroke="#1c1c1c" stroke-width="0.9" fill="none"/>
<rect x="1114.8" y="467.8" width="12.5" height="3.9" stroke="#1c1c1c" stroke-width="1.2" fill="#fff"/>
<text x="1121.05" y="470.8" font-size="3.6" fill="#1c1c1c" stroke="none" text-anchor="middle">D6</text>
<text x="1119.55" y="475.5" font-size="3.2" fill="#1c1c1c" stroke="none" text-anchor="middle">1/4&quot;</text>
<rect x="1120.8" y="485" width="12" height="4.2" stroke="#1c1c1c" stroke-width="1.2" fill="#fff"/>
<text x="1126.8" y="488.3" font-size="3.6" fill="#1c1c1c" stroke="none" text-anchor="middle">C2</text>
<text x="1125.3" y="493" font-size="3.2" fill="#1c1c1c" stroke="none" text-anchor="middle">20</text>
<path d="M1132.8 486L1138.6 484.5" stroke="#1c1c1c" stroke-width="0.8"/>
<path d="M1041.300 447.500H1059.400M1101.500 447.500H1135.600M1177.600 447.500H1219.500" stroke="#333" stroke-width="1.1" fill="none"/>
<path d="M1102.7 444.3H1122.7M1100.7 450.7H1120.7" stroke="#1c1c1c" stroke-width="1.1" fill="none"/>
<path d="M1102.2 450.7L1105.6 444.3M1106.4 450.7L1109.8 444.3M1110.6 450.7L1114 444.3M1114.8 450.7L1118.2 444.3" stroke="#1c1c1c" stroke-width="1.5" fill="none"/>
<path d="M1181.8 444.3H1199.3M1179.8 450.7H1197.3" stroke="#1c1c1c" stroke-width="1.1" fill="none"/>
<path d="M1181.3 450.7L1184.7 444.3M1185.5 450.7L1188.9 444.3M1189.7 450.7L1193.1 444.3M1193.9 450.7L1197.3 444.3" stroke="#1c1c1c" stroke-width="1.5" fill="none"/>
<rect x="1044.7" y="500" width="12" height="4.2" stroke="#1c1c1c" stroke-width="1.2" fill="#fff"/>
<text x="1050.7" y="503.3" font-size="3.6" fill="#1c1c1c" stroke="none" text-anchor="middle">S5</text>
<text x="1049.2" y="508" font-size="3.2" fill="#1c1c1c" stroke="none" text-anchor="middle">20</text>
<path d="M1056.7 501.5L1075.5 490" stroke="#1c1c1c" stroke-width="0.8"/>
<rect x="1154.7" y="496.2" width="12" height="3.8" stroke="#1c1c1c" stroke-width="1.2" fill="#fff"/>
<text x="1160.7" y="499.1" font-size="3.6" fill="#1c1c1c" stroke="none" text-anchor="middle">S6</text>
<text x="1159.2" y="503.8" font-size="3.2" fill="#1c1c1c" stroke="none" text-anchor="middle">20</text>
<path d="M1156 496.2L1154 490" stroke="#1c1c1c" stroke-width="0.8"/>
<text x="1084.3" y="558.3" font-size="7.8" fill="#1c1c1c" stroke="none" textLength="46" lengthAdjust="spacingAndGlyphs">Trace Heating</text>
<text x="1084.3" y="567" font-size="7.8" fill="#1c1c1c" stroke="none" textLength="46" lengthAdjust="spacingAndGlyphs">Begleitheizung</text>
<path d="M1062.2 572.3V590.5M1068.6 570.3V588.5" stroke="#1c1c1c" stroke-width="1.1" fill="none"/>
<path d="M1062.2 575.2L1068.6 571.8M1062.2 579.4L1068.6 576M1062.2 583.6L1068.6 580.2M1062.2 587.8L1068.6 584.4" stroke="#1c1c1c" stroke-width="1.5" fill="none"/>
<path d="M1150.1 572.3V590.5M1156.5 570.3V588.5" stroke="#1c1c1c" stroke-width="1.1" fill="none"/>
<path d="M1150.1 575.2L1156.5 571.8M1150.1 579.4L1156.5 576M1150.1 583.6L1156.5 580.2M1150.1 587.8L1156.5 584.4" stroke="#1c1c1c" stroke-width="1.5" fill="none"/>
<path d="M1093.800 572.500V626.300H1065.400" stroke="#333" stroke-width="1" fill="none"/>
<path d="M1093.800 586L1091 578.500H1096.600z" stroke="#1c1c1c" stroke-width="0.8" fill="#1c1c1c"/>
<path d="M1090.6 591V608.5M1097 589V606.5" stroke="#1c1c1c" stroke-width="1.1" fill="none"/>
<path d="M1090.6 593.9L1097 590.5M1090.6 598.1L1097 594.7M1090.6 602.3L1097 598.9M1090.6 606.5L1097 603.1" stroke="#1c1c1c" stroke-width="1.5" fill="none"/>
<path d="M1091.33 614.7L1096.27 621.3H1091.33L1096.27 614.7z" stroke="#1c1c1c" stroke-width="0.9" fill="#fff"/>
<path d="M1093.8 618H1097.4M1097.4 616V620" stroke="#1c1c1c" stroke-width="0.9" fill="none"/>
<path d="M1125.300 572.500V681.300H1153.300" stroke="#333" stroke-width="1" fill="none"/>
<path d="M1125.300 578.500L1122.500 586H1128.100z" stroke="#1c1c1c" stroke-width="0.8" fill="#1c1c1c"/>
<path d="M1122.1 591V608.5M1128.5 589V606.5" stroke="#1c1c1c" stroke-width="1.1" fill="none"/>
<path d="M1122.1 593.9L1128.5 590.5M1122.1 598.1L1128.5 594.7M1122.1 602.3L1128.5 598.9M1122.1 606.5L1128.5 603.1" stroke="#1c1c1c" stroke-width="1.5" fill="none"/>
<path d="M1122.83 614.7L1127.77 621.3H1122.83L1127.77 614.7z" stroke="#1c1c1c" stroke-width="0.9" fill="#fff"/>
<path d="M1125.3 618H1128.9M1128.9 616V620" stroke="#1c1c1c" stroke-width="0.9" fill="none"/>
<rect x="1076.3" y="605.5" width="13" height="4.5" stroke="#1c1c1c" stroke-width="1.2" fill="#fff"/>
<text x="1082.8" y="609.1" font-size="3.6" fill="#1c1c1c" stroke="none" text-anchor="middle">C1</text>
<text x="1081.3" y="613.8" font-size="3.2" fill="#1c1c1c" stroke="none" text-anchor="middle">15</text>
<path d="M1087 610L1092 616" stroke="#1c1c1c" stroke-width="0.8"/>
<rect x="1107.5" y="605.5" width="12" height="4.5" stroke="#1c1c1c" stroke-width="1.2" fill="#fff"/>
<text x="1113.5" y="609.1" font-size="3.6" fill="#1c1c1c" stroke="none" text-anchor="middle">C2</text>
<text x="1112" y="613.8" font-size="3.2" fill="#1c1c1c" stroke="none" text-anchor="middle">15</text>
<path d="M1117 610L1123.5 616" stroke="#1c1c1c" stroke-width="0.8"/>
<path d="M1065.400 631.300H1047.500V681.300H1065.400" stroke="#444" stroke-width="1" fill="none"/>
<path d="M1062.93 638L1067.88 644.6H1062.93L1067.88 638z" stroke="#1c1c1c" stroke-width="0.9" fill="#fff"/>
<path d="M1065.4 641.3H1069M1069 639.3V643.3" stroke="#1c1c1c" stroke-width="0.9" fill="none"/>
<circle cx="1065.4" cy="656.3" r="4.5" stroke="#1c1c1c" stroke-width="1" fill="#fff"/>
<path d="M1062.200 659.500A4.500 4.500 0 0 0 1068.600 653.100z" stroke="#1c1c1c" stroke-width="0.6" fill="#1c1c1c"/>
<path d="M1062.93 667.2L1067.88 673.8H1062.93L1067.88 667.2z" stroke="#1c1c1c" stroke-width="0.9" fill="#fff"/>
<path d="M1065.4 670.5H1069M1069 668.5V672.5" stroke="#1c1c1c" stroke-width="0.9" fill="none"/>
<path d="M1045.4 653.5L1049.6 659.1H1045.4L1049.6 653.5z" stroke="#1c1c1c" stroke-width="0.9" fill="#fff"/>
<path d="M1047.500 656.300H1044M1044 654V658.600" stroke="#1c1c1c" stroke-width="0.9" fill="none"/>
<rect x="1075.5" y="630.5" width="12.5" height="4.5" stroke="#555" stroke-width="1.2" fill="#fff"/>
<text x="1081.75" y="634.1" font-size="3.6" fill="#555" stroke="none" text-anchor="middle">C3</text>
<text x="1080.25" y="638.8" font-size="3.2" fill="#555" stroke="none" text-anchor="middle">20</text>
<path d="M1075.5 633L1068.5 639" stroke="#1c1c1c" stroke-width="0.8"/>
<rect x="1075.5" y="645.3" width="12.5" height="4.2" stroke="#1c1c1c" stroke-width="1.2" fill="#fff"/>
<text x="1081.75" y="648.6" font-size="3.6" fill="#1c1c1c" stroke="none" text-anchor="middle">C5</text>
<text x="1080.25" y="653.3" font-size="3.2" fill="#1c1c1c" stroke="none" text-anchor="middle">20</text>
<path d="M1075.5 648L1069.5 653.5" stroke="#1c1c1c" stroke-width="0.8"/>
<rect x="1075.5" y="663.3" width="12.5" height="4.2" stroke="#1c1c1c" stroke-width="1.2" fill="#fff"/>
<text x="1081.75" y="666.6" font-size="3.6" fill="#1c1c1c" stroke="none" text-anchor="middle">C6</text>
<text x="1080.25" y="671.3" font-size="3.2" fill="#1c1c1c" stroke="none" text-anchor="middle">20</text>
<path d="M1075.5 666L1068.5 669" stroke="#1c1c1c" stroke-width="0.8"/>
<rect x="1032" y="665.3" width="12.5" height="4.2" stroke="#1c1c1c" stroke-width="1.2" fill="#fff"/>
<text x="1038.25" y="668.6" font-size="3.6" fill="#1c1c1c" stroke="none" text-anchor="middle">C4</text>
<text x="1036.75" y="673.3" font-size="3.2" fill="#1c1c1c" stroke="none" text-anchor="middle">20</text>
<path d="M1042 665.3L1046 659.5" stroke="#1c1c1c" stroke-width="0.8"/>
<path d="M1153.300 600.800H1139.500V681.300" stroke="#333" stroke-width="1" fill="none"/>
<path d="M1150.83 614.7L1155.77 621.3H1150.83L1155.77 614.7z" stroke="#1c1c1c" stroke-width="0.9" fill="#fff"/>
<path d="M1153.3 618H1156.9M1156.9 616V620" stroke="#1c1c1c" stroke-width="0.9" fill="none"/>
<path d="M1151.05 629.5L1155.55 635.5H1151.05L1155.55 629.5z" stroke="#1c1c1c" stroke-width="0.9" fill="#fff"/>
<circle cx="1166.8" cy="632.5" r="4.6" stroke="#1c1c1c" stroke-width="1" fill="#fff"/>
<text x="1166.8" y="634.52" font-size="5.6" fill="#1c1c1c" stroke="none" text-anchor="middle">M</text>
<path d="M1153.3 632.5L1162.2 632.5" stroke="#1c1c1c" stroke-width="0.9"/>
<rect x="1150.9" y="645.4" width="4.8" height="9.2" stroke="#1c1c1c" stroke-width="1.1" fill="#fff"/>
<path d="M1150.9 654.6L1155.7 645.4" stroke="#1c1c1c" stroke-width="1"/>
<path d="M1150.83 667.5L1155.77 674.1H1150.83L1155.77 667.5z" stroke="#1c1c1c" stroke-width="0.9" fill="#fff"/>
<path d="M1153.3 670.8H1156.9M1156.9 668.8V672.8" stroke="#1c1c1c" stroke-width="0.9" fill="none"/>
<path d="M1137.03 641.7L1141.97 648.3H1137.03L1141.97 641.7z" stroke="#1c1c1c" stroke-width="0.9" fill="#fff"/>
<path d="M1139.5 645H1143.1M1143.1 643V647" stroke="#1c1c1c" stroke-width="0.9" fill="none"/>
<rect x="1158.8" y="602.5" width="13" height="4.3" stroke="#1c1c1c" stroke-width="1.2" fill="#fff"/>
<text x="1165.3" y="605.9" font-size="3.6" fill="#1c1c1c" stroke="none" text-anchor="middle">S3</text>
<text x="1163.8" y="610.6" font-size="3.2" fill="#1c1c1c" stroke="none" text-anchor="middle">20</text>
<path d="M1160 606.8L1155.5 615" stroke="#1c1c1c" stroke-width="0.8"/>
<rect x="1162" y="654" width="12.3" height="4.5" stroke="#555" stroke-width="1.2" fill="#fff"/>
<text x="1168.15" y="657.6" font-size="3.6" fill="#555" stroke="none" text-anchor="middle">S2</text>
<text x="1166.65" y="662.3" font-size="3.2" fill="#555" stroke="none" text-anchor="middle">20</text>
<path d="M1162 655.5L1156 651.5" stroke="#1c1c1c" stroke-width="0.8"/>
<rect x="1162" y="679" width="12.3" height="4.3" stroke="#1c1c1c" stroke-width="1.2" fill="#fff"/>
<text x="1168.15" y="682.4" font-size="3.6" fill="#1c1c1c" stroke="none" text-anchor="middle">S1</text>
<text x="1166.65" y="687.1" font-size="3.2" fill="#1c1c1c" stroke="none" text-anchor="middle">20</text>
<path d="M1162 680L1156 673.5" stroke="#1c1c1c" stroke-width="0.8"/>
<rect x="1127" y="655" width="11.8" height="4.3" stroke="#1c1c1c" stroke-width="1.2" fill="#fff"/>
<text x="1132.9" y="658.4" font-size="3.6" fill="#1c1c1c" stroke="none" text-anchor="middle">S4</text>
<text x="1131.4" y="663.1" font-size="3.2" fill="#1c1c1c" stroke="none" text-anchor="middle">20</text>
<path d="M1134 655L1138 648.5" stroke="#1c1c1c" stroke-width="0.8"/>
<rect x="1178.8" y="606.8" width="23.7" height="11.5" stroke="#555" stroke-width="1" fill="#fff"/>
<text font-size="9" fill="#555" stroke="none" text-anchor="middle" transform="translate(1190.65 615.79) scale(0.82 1)">CV1</text>
<text x="1187" y="628.3" font-size="7.6" fill="#444" stroke="none" textLength="8" lengthAdjust="spacingAndGlyphs">20</text>
<path d="M1180 618.3L1169.5 629.5" stroke="#1c1c1c" stroke-width="0.9"/>
<path d="M1171.400 632.500H1232.500V528.300" stroke="#6a6a6a" stroke-width="0.9" fill="none" stroke-dasharray="4 1.500 1.500 1.500"/>
<rect x="1219.5" y="435" width="25.2" height="25" stroke="#333" stroke-width="1.6" fill="none" stroke-dasharray="3 1.200"/>
<circle cx="1231.8" cy="447.5" r="8.6" stroke="#1c1c1c" stroke-width="1" fill="#fff"/>
<text x="1231.8" y="451.2" font-size="10" fill="#1c1c1c" stroke="none" text-anchor="middle">V</text>
<rect x="1217.5" y="413.8" width="23.5" height="11.5" stroke="#1c1c1c" stroke-width="1" fill="#fff"/>
<text font-size="9" fill="#1c1c1c" stroke="none" text-anchor="middle" transform="translate(1229.25 422.79) scale(0.82 1)">VA1</text>
<path d="M1222 425.3L1227 435" stroke="#1c1c1c" stroke-width="0.9"/>
<path d="M1206 445V450L1210.5 447.5L1215 450V445L1210.5 447.5z" stroke="#1c1c1c" stroke-width="0.9" fill="#fff"/>
<path d="M1206 444.9V450.1M1215 444.9V450.1" stroke="#1c1c1c" stroke-width="1.7" fill="none"/>
<circle cx="1210.5" cy="447.5" r="2.2" stroke="#1c1c1c" stroke-width="1" fill="#fff"/>
<rect x="1202.8" y="431.3" width="12.2" height="3.7" stroke="#1c1c1c" stroke-width="1.2" fill="#fff"/>
<text x="1208.9" y="434.1" font-size="3.6" fill="#1c1c1c" stroke="none" text-anchor="middle">F30</text>
<text x="1207.4" y="438.8" font-size="3.2" fill="#1c1c1c" stroke="none" text-anchor="middle">25</text>
<path d="M1207 435L1210 444.5" stroke="#1c1c1c" stroke-width="0.8"/>
<circle cx="1196.3" cy="420.8" r="5" stroke="#1c1c1c" stroke-width="1" fill="#fff"/>
<text font-size="5.6" fill="#1c1c1c" stroke="none" text-anchor="middle" transform="translate(1196.3 422.82) scale(0.85 1)">TI</text>
<path d="M1196.3 425.8L1196.3 447.5" stroke="#555" stroke-width="0.9"/>
<rect x="1197.5" y="407.8" width="12.2" height="3.9" stroke="#1c1c1c" stroke-width="1.2" fill="#fff"/>
<text x="1203.6" y="410.8" font-size="3.6" fill="#1c1c1c" stroke="none" text-anchor="middle">M26</text>
<path d="M1203 411.7L1199.5 416.5" stroke="#1c1c1c" stroke-width="0.8"/>
<path d="M1244.700 447.500H1283V422.200" stroke="#333" stroke-width="1.1" fill="none"/>
<path d="M1249 445V450L1253.5 447.5L1258 450V445L1253.5 447.5z" stroke="#1c1c1c" stroke-width="0.9" fill="#fff"/>
<path d="M1249 444.9V450.1M1258 444.9V450.1" stroke="#1c1c1c" stroke-width="1.7" fill="none"/>
<circle cx="1253.5" cy="447.5" r="2.2" stroke="#1c1c1c" stroke-width="1" fill="#fff"/>
<path d="M1260.7 444.3H1280.7M1258.7 450.7H1278.7" stroke="#1c1c1c" stroke-width="1.1" fill="none"/>
<path d="M1260.2 450.7L1263.6 444.3M1264.4 450.7L1267.8 444.3M1268.6 450.7L1272 444.3M1272.8 450.7L1276.2 444.3" stroke="#1c1c1c" stroke-width="1.5" fill="none"/>
<rect x="1248.4" y="430.7" width="12" height="4.5" stroke="#1c1c1c" stroke-width="1.2" fill="#fff"/>
<text x="1254.4" y="434.3" font-size="3.6" fill="#1c1c1c" stroke="none" text-anchor="middle">F31</text>
<text x="1252.9" y="439" font-size="3.2" fill="#1c1c1c" stroke="none" text-anchor="middle">25</text>
<path d="M1255 435.2L1253.5 444.5" stroke="#1c1c1c" stroke-width="0.8"/>
<path d="M1200.800 447.500V471.500H1263.300V447.500" stroke="#444" stroke-width="1" fill="none"/>
<path d="M1244.5 469V474L1249 471.5L1253.5 474V469L1249 471.5z" stroke="#1c1c1c" stroke-width="0.9" fill="#fff"/>
<path d="M1244.5 468.9V474.1M1253.5 468.9V474.1" stroke="#1c1c1c" stroke-width="1.7" fill="none"/>
<circle cx="1249" cy="471.5" r="2.2" stroke="#1c1c1c" stroke-width="1" fill="#fff"/>
<rect x="1238.3" y="480.8" width="12.2" height="3.9" stroke="#1c1c1c" stroke-width="1.2" fill="#fff"/>
<text x="1244.4" y="483.8" font-size="3.6" fill="#1c1c1c" stroke="none" text-anchor="middle">F32</text>
<text x="1242.9" y="488.5" font-size="3.2" fill="#1c1c1c" stroke="none" text-anchor="middle">25</text>
<path d="M1246 480.8L1248.5 474.5" stroke="#1c1c1c" stroke-width="0.8"/>
<circle cx="1265.2" cy="420.8" r="5" stroke="#1c1c1c" stroke-width="1" fill="#fff"/>
<text font-size="5.6" fill="#1c1c1c" stroke="none" text-anchor="middle" transform="translate(1265.2 422.82) scale(0.85 1)">TI</text>
<path d="M1265.2 425.8L1265.2 447.5" stroke="#555" stroke-width="0.9"/>
<rect x="1245.3" y="408.3" width="12.5" height="4.3" stroke="#1c1c1c" stroke-width="1.2" fill="#fff"/>
<text x="1251.55" y="411.7" font-size="3.6" fill="#1c1c1c" stroke="none" text-anchor="middle">M27</text>
<path d="M1257 412.6L1261.5 417" stroke="#1c1c1c" stroke-width="0.8"/>
<circle cx="1274.9" cy="458.1" r="5" stroke="#1c1c1c" stroke-width="1" fill="#fff"/>
<text font-size="5.2" fill="#1c1c1c" stroke="none" text-anchor="middle" transform="translate(1274.9 459.97) scale(0.85 1)">TS</text>
<path d="M1274.9 453.1L1274.9 447.5" stroke="#1c1c1c" stroke-width="0.9"/>
<rect x="1278.5" y="469.9" width="12.5" height="4.3" stroke="#1c1c1c" stroke-width="1.2" fill="#fff"/>
<text x="1284.75" y="473.3" font-size="3.6" fill="#1c1c1c" stroke="none" text-anchor="middle">M28</text>
<path d="M1280 469.9L1277.5 462.5" stroke="#1c1c1c" stroke-width="0.8"/>
<path d="M1274.900 463.100V499.700H1236.300V516M1231.800 460V516M1231.800 528.300V632.500" stroke="#555" stroke-width="0.9" fill="none" stroke-dasharray="4 1.500 1.500 1.500"/>
<circle cx="1231.5" cy="522.1" r="6.2" stroke="#1c1c1c" stroke-width="1" fill="#fff"/>
<text font-size="4.4" fill="#1c1c1c" stroke="none" text-anchor="middle" transform="translate(1231.5 523.68) scale(0.85 1)">VIC</text>
<circle cx="1247.8" cy="522.1" r="6" stroke="#555" stroke-width="1" fill="#fff" stroke-dasharray="2 1"/>
<text font-size="4.2" fill="#555" stroke="none" text-anchor="middle" transform="translate(1247.8 523.61) scale(0.85 1)">VA±</text>
<circle cx="1264.3" cy="522.1" r="6" stroke="#555" stroke-width="1" fill="#fff" stroke-dasharray="2 1"/>
<text font-size="4.2" fill="#555" stroke="none" text-anchor="middle" transform="translate(1264.3 523.61) scale(0.85 1)">TA±</text>
<path d="M1277.700 317.400V422.200H1353.600M1277.700 317.400H1299.400V334.500" stroke="#333" stroke-width="1.1" fill="none"/>
<path d="M1240.700 399.400H1284.500V363" stroke="#333" stroke-width="1.1" fill="none"/>
<path d="M1275.5 399.4L1279.9 399.4" stroke="#fff" stroke-width="2.2"/>
<path d="M1275.5 399.4A2.2 2.2 0 0 1 1279.9 399.4" stroke="#1c1c1c" stroke-width="1" fill="none"/>
<path d="M1284.500 397.500H1296.500L1299.400 400.500" stroke="#333" stroke-width="2" fill="none"/>
<path d="M1299.400 383V403M1295 399.500L1299.400 404L1306 397.500" stroke="#1c1c1c" stroke-width="1.1" fill="none"/>
<path d="M1299.400 404V695.300" stroke="#444" stroke-width="1" fill="none"/>
<path d="M1297.2 422.2L1301.6 422.2" stroke="#fff" stroke-width="2.2"/>
<path d="M1297.2 422.2A2.2 2.2 0 0 1 1301.6 422.2" stroke="#1c1c1c" stroke-width="1" fill="none"/>
<path d="M1307 419H1325.7M1305 425.4H1323.7" stroke="#1c1c1c" stroke-width="1.1" fill="none"/>
<path d="M1306.5 425.4L1309.9 419M1310.7 425.4L1314.1 419M1314.9 425.4L1318.3 419M1319.1 425.4L1322.5 419" stroke="#1c1c1c" stroke-width="1.5" fill="none"/>
<path d="M1343.200 360.800V422.200" stroke="#555" stroke-width="0.9" fill="none"/>
<path d="M1289 341Q1289 337.500 1293 336.500Q1299.800 332.500 1306.700 336.500Q1310.700 337.500 1310.700 341V376Q1310.700 379.500 1306.700 380.500Q1299.800 384.500 1293 380.500Q1289 379.500 1289 376z" stroke="#1c1c1c" stroke-width="1.2" fill="#fff"/>
<path d="M1287.300 341V376M1312.400 341V376" stroke="#333" stroke-width="1.2" fill="none" stroke-dasharray="2 1"/>
<path d="M1299.800 334.500V362M1291 358.500H1308.500M1293 360.500H1306.500M1291 364H1308.500M1295 367.500H1305M1291 371H1308.500M1294 374.500H1304" stroke="#444" stroke-width="0.9" fill="none"/>
<path d="M1291 359.500H1308.500" stroke="#999" stroke-width="1.8" fill="none"/>
<path d="M1282.500 342H1288L1284 346L1288 350H1282.500" stroke="#1c1c1c" stroke-width="0.9" fill="none"/>
<path d="M1296.9 322H1301.9L1299.4 326.5L1301.9 331H1296.9L1299.4 326.5z" stroke="#1c1c1c" stroke-width="0.9" fill="#fff"/>
<path d="M1296.8 322H1302M1296.8 331H1302" stroke="#1c1c1c" stroke-width="1.7" fill="none"/>
<circle cx="1299.4" cy="326.5" r="2.2" stroke="#1c1c1c" stroke-width="1" fill="#fff"/>
<rect x="1305.4" y="314" width="12.1" height="4" stroke="#1c1c1c" stroke-width="1.2" fill="#fff"/>
<text x="1311.45" y="317.1" font-size="3.6" fill="#1c1c1c" stroke="none" text-anchor="middle">F33</text>
<text x="1309.95" y="321.8" font-size="3.2" fill="#1c1c1c" stroke="none" text-anchor="middle">32</text>
<path d="M1306 318L1301.5 324" stroke="#1c1c1c" stroke-width="0.8"/>
<rect x="1317.5" y="320.5" width="22.8" height="11.3" stroke="#444" stroke-width="1" fill="#fff"/>
<text font-size="9" fill="#444" stroke="none" text-anchor="middle" transform="translate(1328.9 329.39) scale(0.82 1)">T2</text>
<path d="M1317.5 331.8L1310 340" stroke="#1c1c1c" stroke-width="0.9"/>
<path d="M1282 374.4H1287L1284.5 378.9L1287 383.4H1282L1284.5 378.9z" stroke="#1c1c1c" stroke-width="0.9" fill="#fff"/>
<path d="M1281.9 374.4H1287.1M1281.9 383.4H1287.1" stroke="#1c1c1c" stroke-width="1.7" fill="none"/>
<circle cx="1284.5" cy="378.9" r="2.2" stroke="#1c1c1c" stroke-width="1" fill="#fff"/>
<rect x="1263.8" y="363.3" width="12.7" height="4.1" stroke="#555" stroke-width="1.2" fill="#fff"/>
<text x="1270.15" y="366.5" font-size="3.6" fill="#555" stroke="none" text-anchor="middle">A5</text>
<text x="1268.65" y="371.2" font-size="3.2" fill="#555" stroke="none" text-anchor="middle">20</text>
<path d="M1274 367.4L1282.5 376" stroke="#1c1c1c" stroke-width="0.8"/>
<path d="M1296.9 386.5H1301.9L1299.4 391L1301.9 395.5H1296.9L1299.4 391z" stroke="#1c1c1c" stroke-width="0.9" fill="#fff"/>
<path d="M1296.8 386.5H1302M1296.8 395.5H1302" stroke="#1c1c1c" stroke-width="1.7" fill="none"/>
<circle cx="1299.4" cy="391" r="2.2" stroke="#1c1c1c" stroke-width="1" fill="#fff"/>
<rect x="1311" y="382.5" width="12" height="4.4" stroke="#1c1c1c" stroke-width="1.2" fill="#fff"/>
<text x="1317" y="386" font-size="3.6" fill="#1c1c1c" stroke="none" text-anchor="middle">D6</text>
<text x="1315.5" y="390.7" font-size="3.2" fill="#1c1c1c" stroke="none" text-anchor="middle">20</text>
<path d="M1311 385L1302 389.5" stroke="#1c1c1c" stroke-width="0.8"/>
<circle cx="1342.7" cy="355.3" r="5.4" stroke="#1c1c1c" stroke-width="1" fill="#fff"/>
<text font-size="5.8" fill="#1c1c1c" stroke="none" text-anchor="middle" transform="translate(1342.7 357.39) scale(0.85 1)">PI</text>
<rect x="1340.6" y="365.2" width="4.8" height="9.2" stroke="#1c1c1c" stroke-width="1.1" fill="#fff"/>
<path d="M1340.6 374.4L1345.4 365.2" stroke="#1c1c1c" stroke-width="1"/>
<path d="M1340 380.05L1346 384.55V380.05L1340 384.55z" stroke="#1c1c1c" stroke-width="0.9" fill="#fff"/>
<path d="M1343 378.9V385.7M1341.4 378.9H1344.6" stroke="#1c1c1c" stroke-width="0.9" fill="none"/>
<circle cx="1343" cy="382.3" r="0.9" stroke="#1c1c1c" stroke-width="0.6" fill="#1c1c1c"/>
<rect x="1322.7" y="343.8" width="12.3" height="4.3" stroke="#1c1c1c" stroke-width="1.2" fill="#fff"/>
<text x="1328.85" y="347.2" font-size="3.6" fill="#1c1c1c" stroke="none" text-anchor="middle">M22</text>
<path d="M1335 346L1338.5 351.5" stroke="#1c1c1c" stroke-width="0.8"/>
<rect x="1322.7" y="359.7" width="12.3" height="4.3" stroke="#1c1c1c" stroke-width="1.2" fill="#fff"/>
<text x="1328.85" y="363.1" font-size="3.6" fill="#1c1c1c" stroke="none" text-anchor="middle">M23</text>
<path d="M1335 362L1340.5 367" stroke="#1c1c1c" stroke-width="0.8"/>
<rect x="1322.7" y="374.1" width="12.3" height="4.3" stroke="#1c1c1c" stroke-width="1.2" fill="#fff"/>
<text x="1328.85" y="377.5" font-size="3.6" fill="#1c1c1c" stroke="none" text-anchor="middle">M19</text>
<path d="M1335 376L1340 381" stroke="#1c1c1c" stroke-width="0.8"/>
</g>
</svg>
<svg width="1920" height="1080" viewBox="0 0 1920 1080" style="pointer-events:none">
<defs><clipPath id="wbot"><rect x="0" y="940" width="1920" height="140"/></clipPath>
<mask id="wring" maskUnits="userSpaceOnUse" x="0" y="800" width="1920" height="280">
<rect x="0" y="800" width="1920" height="280" fill="#000"/>
<text style="font-family:&quot;DejaVu Serif&quot;,&quot;Liberation Serif&quot;,serif;font-weight:bold" font-size="176.5" x="304" y="1002.500" textLength="1582" lengthAdjust="spacingAndGlyphs" stroke-linejoin="round" fill="#fff" stroke="#fff" stroke-width="21">SEATRACKER.RU</text>
<text style="font-family:&quot;DejaVu Serif&quot;,&quot;Liberation Serif&quot;,serif;font-weight:bold" font-size="176.5" x="304" y="1002.500" textLength="1582" lengthAdjust="spacingAndGlyphs" stroke-linejoin="round" fill="#000" stroke="#000" stroke-width="11">SEATRACKER.RU</text>
</mask></defs>
<g opacity="0.605" fill="#0074ad" stroke="#0074ad">
<path d="M140.3 799.8L153.28 858.32L183.72 806.68L177.98 866.35L222.88 826.63L198.99 881.61L253.97 857.72L214.25 902.62L273.92 896.88L222.28 927.32L280.8 940.3L222.28 953.28L273.92 983.72L214.25 977.98L253.97 1022.88L198.99 998.99L222.88 1053.97L177.98 1014.25L183.72 1073.92L153.28 1022.28L140.3 1080.8L127.32 1022.28L96.88 1073.92L102.62 1014.25L57.72 1053.97L81.61 998.99L26.63 1022.88L66.35 977.98L6.68 983.72L58.32 953.28L-0.2 940.3L58.32 927.32L6.68 896.88L66.35 902.62L26.63 857.72L81.61 881.61L57.72 826.63L102.62 866.35L96.88 806.68L127.32 858.32zM63.8 939.8A76.500 76.500 0 0 1 216.8 939.8z" fill-rule="evenodd" stroke="none"/>
<rect x="290" y="850" width="1620" height="90" stroke="none" mask="url(#wring)"/>
<text style="font-family:&quot;DejaVu Serif&quot;,&quot;Liberation Serif&quot;,serif;font-weight:bold" font-size="176.5" x="304" y="1002.500" textLength="1582" lengthAdjust="spacingAndGlyphs" stroke-linejoin="round" stroke-width="21" clip-path="url(#wbot)">SEATRACKER.RU</text>
</g>
</svg>

</body>
</html>
